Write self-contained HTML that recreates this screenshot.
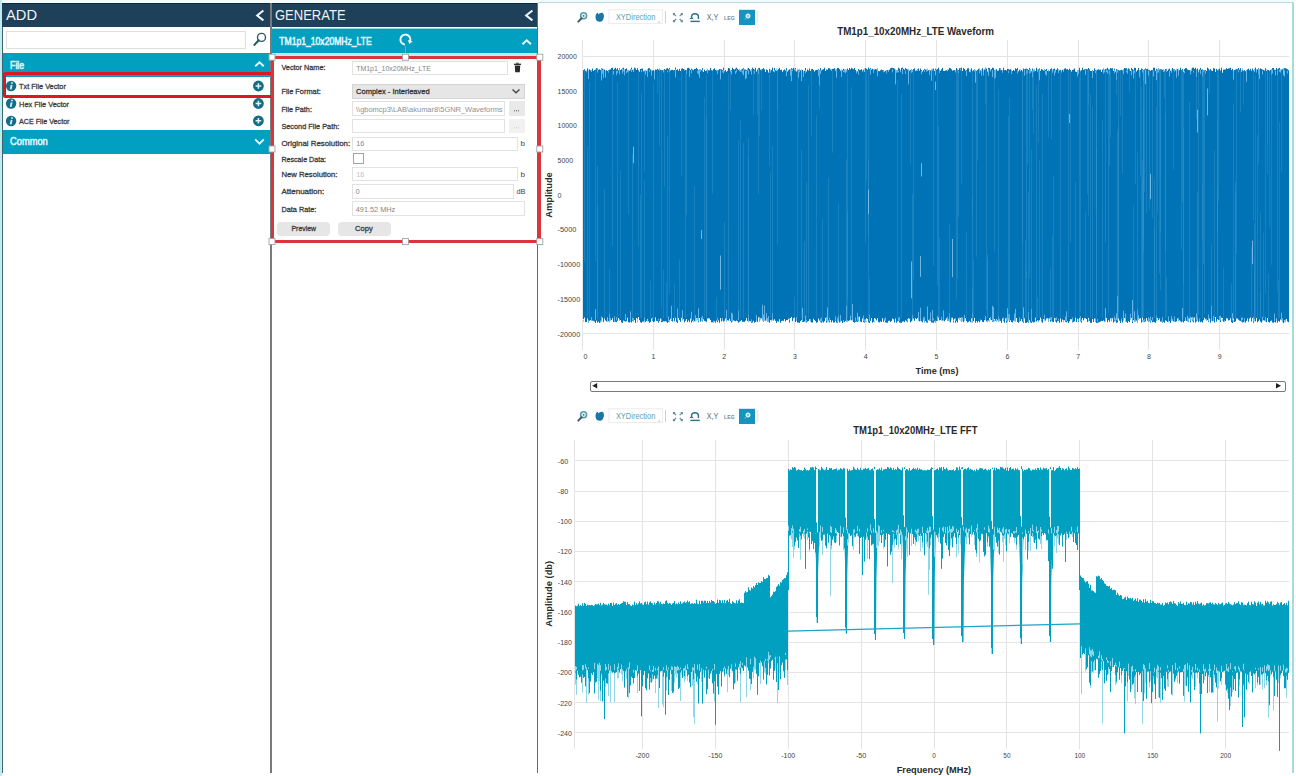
<!DOCTYPE html>
<html><head><meta charset="utf-8">
<style>
*{margin:0;padding:0;box-sizing:border-box}
html,body{width:1296px;height:776px;overflow:hidden;background:#fff;font-family:"Liberation Sans", sans-serif}
.a{position:absolute}
svg text{font-family:"Liberation Sans", sans-serif}
.inp{position:absolute;background:#fff;border:1px solid #e2e2e2}
.btn{position:absolute;background:#e6e6e6;border-radius:4px}
</style></head><body>
<div class="a" style="left:0;top:0;width:1296px;height:2px;background:#effbfc"></div>
<div class="a" style="left:0;top:0;width:2px;height:776px;background:#c2eaf1"></div>
<div class="a" style="left:2px;top:3px;width:1px;height:770px;background:#3d6670"></div>
<div class="a" style="left:2px;top:3px;width:268px;height:24px;background:#1e4058;border-top:1px solid #0d2a3a"></div>
<div class="a" style="left:269.5px;top:3px;width:2.5px;height:770px;background:#7a7a7a"></div>
<div class="a" style="left:272px;top:3px;width:266px;height:24px;background:#1e4058;border-top:1px solid #0d2a3a"></div>
<div class="a" style="left:537px;top:3px;width:1px;height:770px;background:#6a6a6a"></div>
<div class="inp" style="left:6px;top:31px;width:240px;height:18px;border-color:#dedede"></div>
<div class="a" style="left:3px;top:53px;width:267px;height:24px;background:#02a0c0"></div>
<div class="a" style="left:3px;top:129.5px;width:267px;height:24px;background:#02a0c0"></div>
<div class="a" style="left:3.3px;top:72px;width:270.3px;height:26.2px;border:3px solid #dc1820;border-radius:2px"></div>
<div class="a" style="left:272px;top:28px;width:265px;height:25.5px;background:#02a0c0;border-top:1px solid #8adbe9"></div>
<div class="a" style="left:272px;top:53.3px;width:265px;height:2.4px;background:#bfeaf2"></div>
<div class="inp" style="left:352px;top:60.5px;width:156px;height:14.5px"></div>
<div class="a" style="left:352px;top:84.3px;width:173px;height:14.5px;background:#e6e6e6;border:1px solid #d4d4d4"></div>
<div class="inp" style="left:352px;top:101.3px;width:153px;height:14.8px"></div>
<div class="a" style="left:508.5px;top:101.3px;width:16.2px;height:14.8px;background:#e9e9e9"></div>
<div class="inp" style="left:352px;top:119.2px;width:153px;height:14.2px"></div>
<div class="a" style="left:508.5px;top:119.2px;width:16.2px;height:14.2px;background:#f1f1f1"></div>
<div class="inp" style="left:352px;top:136.5px;width:166px;height:14.2px"></div>
<div class="a" style="left:352.5px;top:153.2px;width:11px;height:11px;border:1px solid #a4a4a4;background:#fff"></div>
<div class="inp" style="left:352px;top:167.2px;width:166px;height:14.2px"></div>
<div class="inp" style="left:352px;top:184.3px;width:162px;height:14.3px"></div>
<div class="inp" style="left:352px;top:201.3px;width:172.5px;height:14.8px"></div>
<div class="btn" style="left:277.4px;top:221.8px;width:53px;height:14.6px"></div>
<div class="btn" style="left:337.5px;top:221.8px;width:53px;height:14.6px"></div>
<div class="a" style="left:270.5px;top:55.6px;width:270px;height:187.4px;border:3px solid #d9353b"></div>
<div class="a" style="left:538px;top:2px;width:756px;height:1px;background:#b9dde0"></div>
<div class="a" style="left:1292px;top:2px;width:2px;height:771px;background:#a6dcd8"></div>
<div class="a" style="left:589.5px;top:380.5px;width:696px;height:11px;border:1.6px solid #7a7a7a;border-radius:2px"></div>
<svg class="a" style="left:0;top:0" width="1296" height="776" viewBox="0 0 1296 776">
<path d="M582.5 40V350M653.5 40V350M724.5 40V350M794.5 40V350M865.5 40V350M936.5 40V350M1007.5 40V350M1078.5 40V350M1148.5 40V350M1219.5 40V350M582 56.5H1289M582 90.5H1289M582 125.5H1289M582 160.5H1289M582 194.5H1289M582 229.5H1289M582 264.5H1289M582 299.5H1289M582 333.5H1289" stroke="#e4e4e4" stroke-width="1" fill="none"/><polygon points="583,70.3 584,70.3 584,70 585,70 585,70.7 586,70.7 586,71.1 587,71.1 587,71.5 588,71.5 588,70.9 589,70.9 589,70.5 590,70.5 590,70.3 591,70.3 591,71.2 592,71.2 592,71.8 593,71.8 593,71 594,71 594,70.1 595,70.1 595,70.2 596,70.2 596,71.8 597,71.8 597,70.9 598,70.9 598,69.8 599,69.8 599,70.7 600,70.7 600,70.1 601,70.1 601,70.4 602,70.4 602,70.5 603,70.5 603,70.4 604,70.4 604,71.1 605,71.1 605,70.8 606,70.8 606,70.4 607,70.4 607,71 608,71 608,71.3 609,71.3 609,69.8 610,69.8 610,70.6 611,70.6 611,70.2 612,70.2 612,70.7 613,70.7 613,70 614,70 614,70.8 615,70.8 615,70.8 616,70.8 616,70.6 617,70.6 617,70.2 618,70.2 618,70.6 619,70.6 619,70.1 620,70.1 620,70 621,70 621,70.9 622,70.9 622,70.1 623,70.1 623,71.5 624,71.5 624,71.2 625,71.2 625,69.6 626,69.6 626,71 627,71 627,70.1 628,70.1 628,70.8 629,70.8 629,70.8 630,70.8 630,69.6 631,69.6 631,70.7 632,70.7 632,70.6 633,70.6 633,71.4 634,71.4 634,70.1 635,70.1 635,71.2 636,71.2 636,70.1 637,70.1 637,70.6 638,70.6 638,70.3 639,70.3 639,71.7 640,71.7 640,71.1 641,71.1 641,72.3 642,72.3 642,71.2 643,71.2 643,71.3 644,71.3 644,71.3 645,71.3 645,70.4 646,70.4 646,70.8 647,70.8 647,71.6 648,71.6 648,70.6 649,70.6 649,70.9 650,70.9 650,70.8 651,70.8 651,71.2 652,71.2 652,70.6 653,70.6 653,70.7 654,70.7 654,70.9 655,70.9 655,70.9 656,70.9 656,70.3 657,70.3 657,71.3 658,71.3 658,70 659,70 659,70.1 660,70.1 660,70 661,70 661,71.4 662,71.4 662,70.6 663,70.6 663,70.2 664,70.2 664,70.1 665,70.1 665,71.1 666,71.1 666,70.2 667,70.2 667,70 668,70 668,71.2 669,71.2 669,70.1 670,70.1 670,70.6 671,70.6 671,70.8 672,70.8 672,70.5 673,70.5 673,70.8 674,70.8 674,71.6 675,71.6 675,70.5 676,70.5 676,70 677,70 677,69.7 678,69.7 678,70.7 679,70.7 679,70.6 680,70.6 680,71 681,71 681,70.5 682,70.5 682,70.5 683,70.5 683,70.4 684,70.4 684,70.5 685,70.5 685,70.9 686,70.9 686,70.6 687,70.6 687,70.9 688,70.9 688,71.9 689,71.9 689,71.1 690,71.1 690,69.9 691,69.9 691,71.8 692,71.8 692,71 693,71 693,70.2 694,70.2 694,71.3 695,71.3 695,70.8 696,70.8 696,70.4 697,70.4 697,70.4 698,70.4 698,70.2 699,70.2 699,70.8 700,70.8 700,71.4 701,71.4 701,70.6 702,70.6 702,71.1 703,71.1 703,71.9 704,71.9 704,70.1 705,70.1 705,71 706,71 706,70.6 707,70.6 707,70.2 708,70.2 708,70.2 709,70.2 709,70.8 710,70.8 710,71.1 711,71.1 711,70.5 712,70.5 712,70.8 713,70.8 713,71.2 714,71.2 714,71 715,71 715,71.3 716,71.3 716,71.1 717,71.1 717,71.1 718,71.1 718,71.9 719,71.9 719,71.2 720,71.2 720,70.9 721,70.9 721,71.2 722,71.2 722,70.2 723,70.2 723,70.6 724,70.6 724,71.3 725,71.3 725,71.2 726,71.2 726,71.7 727,71.7 727,70.8 728,70.8 728,69.9 729,69.9 729,72 730,72 730,71.5 731,71.5 731,70.2 732,70.2 732,71.6 733,71.6 733,70.8 734,70.8 734,69.7 735,69.7 735,70.5 736,70.5 736,70.5 737,70.5 737,71.8 738,71.8 738,70.3 739,70.3 739,70.6 740,70.6 740,70.6 741,70.6 741,70.6 742,70.6 742,70.3 743,70.3 743,70.9 744,70.9 744,71.4 745,71.4 745,71.2 746,71.2 746,70.2 747,70.2 747,70.1 748,70.1 748,70.9 749,70.9 749,70.4 750,70.4 750,70.4 751,70.4 751,69.8 752,69.8 752,72 753,72 753,71.3 754,71.3 754,70.2 755,70.2 755,71.3 756,71.3 756,71.6 757,71.6 757,69.4 758,69.4 758,70.5 759,70.5 759,70.6 760,70.6 760,71.2 761,71.2 761,70.7 762,70.7 762,70.7 763,70.7 763,70.8 764,70.8 764,71.9 765,71.9 765,72.1 766,72.1 766,70.5 767,70.5 767,70.2 768,70.2 768,72.4 769,72.4 769,70.2 770,70.2 770,70.5 771,70.5 771,70.8 772,70.8 772,71.1 773,71.1 773,71.4 774,71.4 774,71 775,71 775,70.3 776,70.3 776,71.1 777,71.1 777,70.9 778,70.9 778,71.9 779,71.9 779,70.8 780,70.8 780,70 781,70 781,70.2 782,70.2 782,71.7 783,71.7 783,70.5 784,70.5 784,69.5 785,69.5 785,70.5 786,70.5 786,70.8 787,70.8 787,71.5 788,71.5 788,70.2 789,70.2 789,71.2 790,71.2 790,71.3 791,71.3 791,70.4 792,70.4 792,70.7 793,70.7 793,71.9 794,71.9 794,71.8 795,71.8 795,71.3 796,71.3 796,71 797,71 797,71.5 798,71.5 798,70.7 799,70.7 799,70.7 800,70.7 800,70.3 801,70.3 801,70.8 802,70.8 802,70.8 803,70.8 803,72.5 804,72.5 804,70.7 805,70.7 805,71.6 806,71.6 806,71.6 807,71.6 807,70.7 808,70.7 808,71.5 809,71.5 809,69.5 810,69.5 810,70.9 811,70.9 811,71.3 812,71.3 812,69.4 813,69.4 813,70.1 814,70.1 814,71.4 815,71.4 815,70.6 816,70.6 816,70.1 817,70.1 817,70.6 818,70.6 818,70.5 819,70.5 819,71.2 820,71.2 820,71.1 821,71.1 821,70.6 822,70.6 822,70.4 823,70.4 823,70.8 824,70.8 824,71.6 825,71.6 825,71 826,71 826,71.2 827,71.2 827,70.7 828,70.7 828,70 829,70 829,70.4 830,70.4 830,71.2 831,71.2 831,70.9 832,70.9 832,70.3 833,70.3 833,69.8 834,69.8 834,70.9 835,70.9 835,70.6 836,70.6 836,70.6 837,70.6 837,70.6 838,70.6 838,71 839,71 839,71 840,71 840,71.4 841,71.4 841,71.4 842,71.4 842,71.6 843,71.6 843,71.3 844,71.3 844,70.6 845,70.6 845,70.8 846,70.8 846,71.1 847,71.1 847,70.6 848,70.6 848,71.1 849,71.1 849,71.5 850,71.5 850,70.3 851,70.3 851,69.7 852,69.7 852,71.5 853,71.5 853,70.8 854,70.8 854,71.2 855,71.2 855,70 856,70 856,71.8 857,71.8 857,71.2 858,71.2 858,70.7 859,70.7 859,70.6 860,70.6 860,70.9 861,70.9 861,70.7 862,70.7 862,70.6 863,70.6 863,70.1 864,70.1 864,71.6 865,71.6 865,70.8 866,70.8 866,70.8 867,70.8 867,70.9 868,70.9 868,69.4 869,69.4 869,71.1 870,71.1 870,70.6 871,70.6 871,70.6 872,70.6 872,70.8 873,70.8 873,70.2 874,70.2 874,71.3 875,71.3 875,70.4 876,70.4 876,70.3 877,70.3 877,70.3 878,70.3 878,70.9 879,70.9 879,71.2 880,71.2 880,70.4 881,70.4 881,69.9 882,69.9 882,71.4 883,71.4 883,70.2 884,70.2 884,71.5 885,71.5 885,70.8 886,70.8 886,70.4 887,70.4 887,70.4 888,70.4 888,71.1 889,71.1 889,71.3 890,71.3 890,70.7 891,70.7 891,71.4 892,71.4 892,72.1 893,72.1 893,70.7 894,70.7 894,70.1 895,70.1 895,70.2 896,70.2 896,70 897,70 897,70.4 898,70.4 898,70.4 899,70.4 899,70 900,70 900,71.1 901,71.1 901,69.2 902,69.2 902,70 903,70 903,72 904,72 904,71.4 905,71.4 905,71.1 906,71.1 906,71.1 907,71.1 907,71.9 908,71.9 908,71.1 909,71.1 909,70.8 910,70.8 910,70.1 911,70.1 911,70.8 912,70.8 912,70.4 913,70.4 913,70.4 914,70.4 914,70.4 915,70.4 915,70.8 916,70.8 916,70.6 917,70.6 917,71.3 918,71.3 918,70 919,70 919,70.7 920,70.7 920,71.9 921,71.9 921,70.8 922,70.8 922,71.5 923,71.5 923,71.5 924,71.5 924,71.6 925,71.6 925,71.2 926,71.2 926,70 927,70 927,70.6 928,70.6 928,70.6 929,70.6 929,69.9 930,69.9 930,70.5 931,70.5 931,70 932,70 932,69.8 933,69.8 933,70.9 934,70.9 934,70.8 935,70.8 935,70.4 936,70.4 936,70.2 937,70.2 937,70.5 938,70.5 938,70.6 939,70.6 939,70.6 940,70.6 940,70.8 941,70.8 941,70.5 942,70.5 942,71 943,71 943,71.1 944,71.1 944,71 945,71 945,70.4 946,70.4 946,70.4 947,70.4 947,71.1 948,71.1 948,70.7 949,70.7 949,70.8 950,70.8 950,69.3 951,69.3 951,69.2 952,69.2 952,71 953,71 953,71 954,71 954,71.6 955,71.6 955,71.2 956,71.2 956,70.9 957,70.9 957,70.8 958,70.8 958,69.9 959,69.9 959,71.3 960,71.3 960,70.4 961,70.4 961,71.1 962,71.1 962,70.9 963,70.9 963,71 964,71 964,71.3 965,71.3 965,70.5 966,70.5 966,70.6 967,70.6 967,70.3 968,70.3 968,70.6 969,70.6 969,71.8 970,71.8 970,70.6 971,70.6 971,71.5 972,71.5 972,71.3 973,71.3 973,71.2 974,71.2 974,71.3 975,71.3 975,70.2 976,70.2 976,71 977,71 977,71.8 978,71.8 978,70.4 979,70.4 979,70.8 980,70.8 980,70.4 981,70.4 981,71 982,71 982,70.2 983,70.2 983,71.8 984,71.8 984,70.6 985,70.6 985,69.9 986,69.9 986,71.9 987,71.9 987,71.4 988,71.4 988,71.1 989,71.1 989,71.1 990,71.1 990,70.6 991,70.6 991,70.7 992,70.7 992,71.2 993,71.2 993,71.4 994,71.4 994,71.4 995,71.4 995,70.9 996,70.9 996,70.5 997,70.5 997,70.7 998,70.7 998,71.5 999,71.5 999,71.7 1000,71.7 1000,70.6 1001,70.6 1001,70.5 1002,70.5 1002,71.5 1003,71.5 1003,71.2 1004,71.2 1004,71.2 1005,71.2 1005,70 1006,70 1006,70.6 1007,70.6 1007,70.5 1008,70.5 1008,70.9 1009,70.9 1009,69.8 1010,69.8 1010,71.6 1011,71.6 1011,71 1012,71 1012,71.1 1013,71.1 1013,70.1 1014,70.1 1014,70.8 1015,70.8 1015,71.6 1016,71.6 1016,69.9 1017,69.9 1017,71 1018,71 1018,71.2 1019,71.2 1019,70.4 1020,70.4 1020,71.3 1021,71.3 1021,70.6 1022,70.6 1022,71.5 1023,71.5 1023,71.1 1024,71.1 1024,70.9 1025,70.9 1025,72 1026,72 1026,71.3 1027,71.3 1027,71.6 1028,71.6 1028,70.1 1029,70.1 1029,70.4 1030,70.4 1030,71.3 1031,71.3 1031,71.3 1032,71.3 1032,70.8 1033,70.8 1033,71.3 1034,71.3 1034,70.2 1035,70.2 1035,70.9 1036,70.9 1036,70.1 1037,70.1 1037,71 1038,71 1038,70.5 1039,70.5 1039,70.4 1040,70.4 1040,70.8 1041,70.8 1041,71.9 1042,71.9 1042,70.2 1043,70.2 1043,70.4 1044,70.4 1044,71.4 1045,71.4 1045,70.5 1046,70.5 1046,71.9 1047,71.9 1047,70.9 1048,70.9 1048,70.9 1049,70.9 1049,71 1050,71 1050,71.8 1051,71.8 1051,71.2 1052,71.2 1052,71.1 1053,71.1 1053,71 1054,71 1054,69.9 1055,69.9 1055,70.3 1056,70.3 1056,71.7 1057,71.7 1057,71.3 1058,71.3 1058,71.1 1059,71.1 1059,71.2 1060,71.2 1060,70.5 1061,70.5 1061,71 1062,71 1062,70.3 1063,70.3 1063,71 1064,71 1064,70.4 1065,70.4 1065,70.7 1066,70.7 1066,71.1 1067,71.1 1067,70.6 1068,70.6 1068,71.2 1069,71.2 1069,71.1 1070,71.1 1070,71 1071,71 1071,71.6 1072,71.6 1072,69.9 1073,69.9 1073,69.8 1074,69.8 1074,71.2 1075,71.2 1075,71.4 1076,71.4 1076,72 1077,72 1077,71.3 1078,71.3 1078,71.3 1079,71.3 1079,70.3 1080,70.3 1080,71.3 1081,71.3 1081,71.2 1082,71.2 1082,70.2 1083,70.2 1083,70.3 1084,70.3 1084,70.7 1085,70.7 1085,71 1086,71 1086,69 1087,69 1087,70.8 1088,70.8 1088,70.9 1089,70.9 1089,70.7 1090,70.7 1090,71 1091,71 1091,71.1 1092,71.1 1092,70.2 1093,70.2 1093,71 1094,71 1094,70.6 1095,70.6 1095,70.2 1096,70.2 1096,70.9 1097,70.9 1097,71.7 1098,71.7 1098,69.9 1099,69.9 1099,69.8 1100,69.8 1100,69.8 1101,69.8 1101,72 1102,72 1102,70.6 1103,70.6 1103,70.8 1104,70.8 1104,70.3 1105,70.3 1105,70.2 1106,70.2 1106,69.6 1107,69.6 1107,70.9 1108,70.9 1108,71 1109,71 1109,69.6 1110,69.6 1110,70.2 1111,70.2 1111,70.4 1112,70.4 1112,70.8 1113,70.8 1113,70.9 1114,70.9 1114,71.5 1115,71.5 1115,71.6 1116,71.6 1116,71.4 1117,71.4 1117,71.6 1118,71.6 1118,70.1 1119,70.1 1119,70.5 1120,70.5 1120,71.5 1121,71.5 1121,71 1122,71 1122,70.8 1123,70.8 1123,69.6 1124,69.6 1124,69.7 1125,69.7 1125,71.2 1126,71.2 1126,71 1127,71 1127,70.6 1128,70.6 1128,70.6 1129,70.6 1129,69.8 1130,69.8 1130,71 1131,71 1131,71.4 1132,71.4 1132,71.8 1133,71.8 1133,70.8 1134,70.8 1134,70.7 1135,70.7 1135,70.1 1136,70.1 1136,71.5 1137,71.5 1137,71.8 1138,71.8 1138,70.4 1139,70.4 1139,71 1140,71 1140,70.9 1141,70.9 1141,70.5 1142,70.5 1142,69.3 1143,69.3 1143,70.6 1144,70.6 1144,71.2 1145,71.2 1145,69.9 1146,69.9 1146,70.3 1147,70.3 1147,68.8 1148,68.8 1148,71.6 1149,71.6 1149,71.1 1150,71.1 1150,70.8 1151,70.8 1151,70.6 1152,70.6 1152,70.4 1153,70.4 1153,70.8 1154,70.8 1154,70.6 1155,70.6 1155,70.7 1156,70.7 1156,70.8 1157,70.8 1157,70.9 1158,70.9 1158,71.7 1159,71.7 1159,69.9 1160,69.9 1160,71 1161,71 1161,70.4 1162,70.4 1162,70.1 1163,70.1 1163,69.4 1164,69.4 1164,71.2 1165,71.2 1165,70.2 1166,70.2 1166,70.3 1167,70.3 1167,71.1 1168,71.1 1168,70.1 1169,70.1 1169,70.8 1170,70.8 1170,70.7 1171,70.7 1171,71.3 1172,71.3 1172,71.4 1173,71.4 1173,70.3 1174,70.3 1174,71.3 1175,71.3 1175,70.7 1176,70.7 1176,70.9 1177,70.9 1177,70.7 1178,70.7 1178,71.3 1179,71.3 1179,70.1 1180,70.1 1180,71 1181,71 1181,71.5 1182,71.5 1182,70.6 1183,70.6 1183,72 1184,72 1184,70.4 1185,70.4 1185,70.9 1186,70.9 1186,70.5 1187,70.5 1187,70.4 1188,70.4 1188,70.1 1189,70.1 1189,70.5 1190,70.5 1190,70.8 1191,70.8 1191,70.3 1192,70.3 1192,71.3 1193,71.3 1193,71.7 1194,71.7 1194,69.9 1195,69.9 1195,71.3 1196,71.3 1196,70.9 1197,70.9 1197,70.9 1198,70.9 1198,72.3 1199,72.3 1199,71.5 1200,71.5 1200,71 1201,71 1201,70.9 1202,70.9 1202,69.5 1203,69.5 1203,71.3 1204,71.3 1204,70.4 1205,70.4 1205,70.9 1206,70.9 1206,70.9 1207,70.9 1207,71.4 1208,71.4 1208,72 1209,72 1209,71.4 1210,71.4 1210,71.6 1211,71.6 1211,70.7 1212,70.7 1212,71.1 1213,71.1 1213,71.3 1214,71.3 1214,69.9 1215,69.9 1215,72 1216,72 1216,70.4 1217,70.4 1217,70 1218,70 1218,71.8 1219,71.8 1219,72.1 1220,72.1 1220,70.4 1221,70.4 1221,70.4 1222,70.4 1222,72.7 1223,72.7 1223,70.9 1224,70.9 1224,69.6 1225,69.6 1225,70.4 1226,70.4 1226,72 1227,72 1227,71.2 1228,71.2 1228,71.3 1229,71.3 1229,71.5 1230,71.5 1230,71.2 1231,71.2 1231,70.6 1232,70.6 1232,69.8 1233,69.8 1233,71.1 1234,71.1 1234,70.1 1235,70.1 1235,70.8 1236,70.8 1236,71.9 1237,71.9 1237,71.1 1238,71.1 1238,70.8 1239,70.8 1239,70.8 1240,70.8 1240,71.2 1241,71.2 1241,71.4 1242,71.4 1242,70 1243,70 1243,70.9 1244,70.9 1244,71.8 1245,71.8 1245,71.3 1246,71.3 1246,70.3 1247,70.3 1247,70.4 1248,70.4 1248,69.6 1249,69.6 1249,70.3 1250,70.3 1250,71.8 1251,71.8 1251,70.8 1252,70.8 1252,70.3 1253,70.3 1253,70.5 1254,70.5 1254,70.7 1255,70.7 1255,70.7 1256,70.7 1256,70.6 1257,70.6 1257,70.3 1258,70.3 1258,71.2 1259,71.2 1259,71.7 1260,71.7 1260,70.5 1261,70.5 1261,70.5 1262,70.5 1262,71.5 1263,71.5 1263,69.9 1264,69.9 1264,70.4 1265,70.4 1265,70.6 1266,70.6 1266,70.9 1267,70.9 1267,70.6 1268,70.6 1268,70.3 1269,70.3 1269,71 1270,71 1270,70.1 1271,70.1 1271,69.8 1272,69.8 1272,69.6 1273,69.6 1273,71.2 1274,71.2 1274,69.8 1275,69.8 1275,71.1 1276,71.1 1276,71.2 1277,71.2 1277,71.3 1278,71.3 1278,70.7 1279,70.7 1279,70.5 1280,70.5 1280,70.9 1281,70.9 1281,70.4 1282,70.4 1282,70 1283,70 1283,71.6 1284,71.6 1284,70.3 1285,70.3 1285,71.9 1286,71.9 1286,71.1 1287,71.1 1287,70.5 1288,70.5 1288,71.1 1289,71.1 1289,318.4 1288,318.4 1288,317.8 1287,317.8 1287,319 1286,319 1286,318.1 1285,318.1 1285,318.4 1284,318.4 1284,319 1283,319 1283,318 1282,318 1282,318.5 1281,318.5 1281,319.5 1280,319.5 1280,318.5 1279,318.5 1279,318.1 1278,318.1 1278,317.4 1277,317.4 1277,318.5 1276,318.5 1276,317.8 1275,317.8 1275,317.3 1274,317.3 1274,317.2 1273,317.2 1273,318.4 1272,318.4 1272,318.4 1271,318.4 1271,318.6 1270,318.6 1270,318.6 1269,318.6 1269,318 1268,318 1268,318.1 1267,318.1 1267,317.9 1266,317.9 1266,317.9 1265,317.9 1265,317.5 1264,317.5 1264,317.8 1263,317.8 1263,317.8 1262,317.8 1262,317.2 1261,317.2 1261,318.3 1260,318.3 1260,319.4 1259,319.4 1259,318.3 1258,318.3 1258,318.9 1257,318.9 1257,317.9 1256,317.9 1256,318.2 1255,318.2 1255,319.1 1254,319.1 1254,318.5 1253,318.5 1253,318 1252,318 1252,317.2 1251,317.2 1251,317.4 1250,317.4 1250,318.5 1249,318.5 1249,318.1 1248,318.1 1248,318.5 1247,318.5 1247,318 1246,318 1246,318.8 1245,318.8 1245,318.4 1244,318.4 1244,317.2 1243,317.2 1243,318.9 1242,318.9 1242,319.3 1241,319.3 1241,318.5 1240,318.5 1240,318.7 1239,318.7 1239,319.8 1238,319.8 1238,318.4 1237,318.4 1237,318.4 1236,318.4 1236,318 1235,318 1235,318.1 1234,318.1 1234,318.4 1233,318.4 1233,317.5 1232,317.5 1232,319.1 1231,319.1 1231,318.3 1230,318.3 1230,318.7 1229,318.7 1229,318.9 1228,318.9 1228,318.4 1227,318.4 1227,318.3 1226,318.3 1226,319 1225,319 1225,318.7 1224,318.7 1224,318.1 1223,318.1 1223,318.1 1222,318.1 1222,317.7 1221,317.7 1221,318.8 1220,318.8 1220,318.2 1219,318.2 1219,317.3 1218,317.3 1218,319 1217,319 1217,318.9 1216,318.9 1216,316.9 1215,316.9 1215,318.7 1214,318.7 1214,318.5 1213,318.5 1213,317.8 1212,317.8 1212,318.4 1211,318.4 1211,319.2 1210,319.2 1210,318.6 1209,318.6 1209,318.4 1208,318.4 1208,318.8 1207,318.8 1207,318.2 1206,318.2 1206,319.3 1205,319.3 1205,317.8 1204,317.8 1204,319.3 1203,319.3 1203,318.1 1202,318.1 1202,318.7 1201,318.7 1201,318.4 1200,318.4 1200,318.7 1199,318.7 1199,318.5 1198,318.5 1198,319.1 1197,319.1 1197,318.6 1196,318.6 1196,319 1195,319 1195,317.5 1194,317.5 1194,317.9 1193,317.9 1193,318.5 1192,318.5 1192,317.7 1191,317.7 1191,319 1190,319 1190,318.4 1189,318.4 1189,318.4 1188,318.4 1188,318.3 1187,318.3 1187,319.3 1186,319.3 1186,318.4 1185,318.4 1185,318.5 1184,318.5 1184,318 1183,318 1183,318.3 1182,318.3 1182,317.6 1181,317.6 1181,317.3 1180,317.3 1180,319 1179,319 1179,319 1178,319 1178,318.4 1177,318.4 1177,317.5 1176,317.5 1176,317.6 1175,317.6 1175,318.9 1174,318.9 1174,318.3 1173,318.3 1173,317.5 1172,317.5 1172,319.7 1171,319.7 1171,319 1170,319 1170,318.9 1169,318.9 1169,318.4 1168,318.4 1168,318.5 1167,318.5 1167,317.9 1166,317.9 1166,317.3 1165,317.3 1165,317.1 1164,317.1 1164,318.3 1163,318.3 1163,318.4 1162,318.4 1162,317.4 1161,317.4 1161,317.5 1160,317.5 1160,318.5 1159,318.5 1159,318.4 1158,318.4 1158,318.1 1157,318.1 1157,318.1 1156,318.1 1156,318.7 1155,318.7 1155,318 1154,318 1154,318.7 1153,318.7 1153,318.2 1152,318.2 1152,318.7 1151,318.7 1151,318.2 1150,318.2 1150,318.5 1149,318.5 1149,317.8 1148,317.8 1148,318.4 1147,318.4 1147,318 1146,318 1146,319.2 1145,319.2 1145,318.7 1144,318.7 1144,318.8 1143,318.8 1143,317.5 1142,317.5 1142,318.2 1141,318.2 1141,318.2 1140,318.2 1140,318.5 1139,318.5 1139,318.3 1138,318.3 1138,318.9 1137,318.9 1137,318.6 1136,318.6 1136,318.1 1135,318.1 1135,317.8 1134,317.8 1134,317.9 1133,317.9 1133,318.2 1132,318.2 1132,318.1 1131,318.1 1131,318.4 1130,318.4 1130,317.4 1129,317.4 1129,318 1128,318 1128,318.3 1127,318.3 1127,318.9 1126,318.9 1126,318.6 1125,318.6 1125,318 1124,318 1124,318.2 1123,318.2 1123,318.1 1122,318.1 1122,319.1 1121,319.1 1121,318.1 1120,318.1 1120,319 1119,319 1119,318.6 1118,318.6 1118,318.5 1117,318.5 1117,317.7 1116,317.7 1116,317.8 1115,317.8 1115,318.2 1114,318.2 1114,318.9 1113,318.9 1113,318.2 1112,318.2 1112,318 1111,318 1111,318.4 1110,318.4 1110,318.6 1109,318.6 1109,318.4 1108,318.4 1108,318.2 1107,318.2 1107,317.9 1106,317.9 1106,318.3 1105,318.3 1105,318 1104,318 1104,318.1 1103,318.1 1103,317.5 1102,317.5 1102,317.3 1101,317.3 1101,318.3 1100,318.3 1100,318.5 1099,318.5 1099,318.9 1098,318.9 1098,318.3 1097,318.3 1097,317.9 1096,317.9 1096,318.9 1095,318.9 1095,318.4 1094,318.4 1094,319.4 1093,319.4 1093,319.1 1092,319.1 1092,317.5 1091,317.5 1091,317.6 1090,317.6 1090,317.8 1089,317.8 1089,318 1088,318 1088,319 1087,319 1087,319 1086,319 1086,318.2 1085,318.2 1085,318.3 1084,318.3 1084,318.7 1083,318.7 1083,318 1082,318 1082,318.9 1081,318.9 1081,319 1080,319 1080,318 1079,318 1079,316.6 1078,316.6 1078,318.7 1077,318.7 1077,318.5 1076,318.5 1076,317.5 1075,317.5 1075,317.4 1074,317.4 1074,318.4 1073,318.4 1073,319 1072,319 1072,319.2 1071,319.2 1071,319.3 1070,319.3 1070,318.3 1069,318.3 1069,318.8 1068,318.8 1068,318.5 1067,318.5 1067,318.9 1066,318.9 1066,318.2 1065,318.2 1065,318 1064,318 1064,318.9 1063,318.9 1063,319.4 1062,319.4 1062,318.9 1061,318.9 1061,318.6 1060,318.6 1060,318.1 1059,318.1 1059,318.2 1058,318.2 1058,319.4 1057,319.4 1057,318.1 1056,318.1 1056,318.4 1055,318.4 1055,317.9 1054,317.9 1054,317.7 1053,317.7 1053,317.5 1052,317.5 1052,318.2 1051,318.2 1051,318.2 1050,318.2 1050,318.4 1049,318.4 1049,318.4 1048,318.4 1048,318.3 1047,318.3 1047,318.5 1046,318.5 1046,318.3 1045,318.3 1045,318.9 1044,318.9 1044,319.1 1043,319.1 1043,317.3 1042,317.3 1042,318 1041,318 1041,317.4 1040,317.4 1040,318.1 1039,318.1 1039,318.2 1038,318.2 1038,318 1037,318 1037,318.6 1036,318.6 1036,317.8 1035,317.8 1035,319.2 1034,319.2 1034,318.7 1033,318.7 1033,317.5 1032,317.5 1032,318.3 1031,318.3 1031,318.7 1030,318.7 1030,319.4 1029,319.4 1029,318.3 1028,318.3 1028,318 1027,318 1027,318.4 1026,318.4 1026,317.4 1025,317.4 1025,318.2 1024,318.2 1024,318.2 1023,318.2 1023,318.8 1022,318.8 1022,318.9 1021,318.9 1021,318.8 1020,318.8 1020,318.4 1019,318.4 1019,319.2 1018,319.2 1018,317.7 1017,317.7 1017,318 1016,318 1016,318.8 1015,318.8 1015,318.6 1014,318.6 1014,318.2 1013,318.2 1013,318 1012,318 1012,318.8 1011,318.8 1011,318 1010,318 1010,319.4 1009,319.4 1009,318.4 1008,318.4 1008,317.9 1007,317.9 1007,318.9 1006,318.9 1006,318.3 1005,318.3 1005,318.2 1004,318.2 1004,317.3 1003,317.3 1003,318.4 1002,318.4 1002,318.2 1001,318.2 1001,318.5 1000,318.5 1000,318.7 999,318.7 999,319.5 998,319.5 998,318.8 997,318.8 997,319 996,319 996,317.8 995,317.8 995,319 994,319 994,318.9 993,318.9 993,319 992,319 992,318.5 991,318.5 991,318.9 990,318.9 990,318.1 989,318.1 989,317.6 988,317.6 988,317.7 987,317.7 987,318.4 986,318.4 986,318.3 985,318.3 985,318.7 984,318.7 984,318.3 983,318.3 983,317.9 982,317.9 982,318.2 981,318.2 981,317.9 980,317.9 980,317.9 979,317.9 979,317.9 978,317.9 978,317.6 977,317.6 977,317.2 976,317.2 976,319.3 975,319.3 975,318.1 974,318.1 974,318.4 973,318.4 973,318.8 972,318.8 972,318.4 971,318.4 971,318.5 970,318.5 970,318.5 969,318.5 969,318 968,318 968,317.2 967,317.2 967,318.3 966,318.3 966,318.2 965,318.2 965,319.3 964,319.3 964,319.1 963,319.1 963,317.8 962,317.8 962,318.2 961,318.2 961,317.9 960,317.9 960,318.2 959,318.2 959,318.2 958,318.2 958,318.8 957,318.8 957,318.8 956,318.8 956,317.7 955,317.7 955,318.7 954,318.7 954,318.2 953,318.2 953,317.8 952,317.8 952,318 951,318 951,319.8 950,319.8 950,318.4 949,318.4 949,318.3 948,318.3 948,318.3 947,318.3 947,318.3 946,318.3 946,319.7 945,319.7 945,318.4 944,318.4 944,318.9 943,318.9 943,318 942,318 942,318.9 941,318.9 941,318 940,318 940,318.1 939,318.1 939,317.5 938,317.5 938,318.8 937,318.8 937,318.8 936,318.8 936,318.4 935,318.4 935,318.6 934,318.6 934,318.5 933,318.5 933,318 932,318 932,317.3 931,317.3 931,317.6 930,317.6 930,318.5 929,318.5 929,318.8 928,318.8 928,317.2 927,317.2 927,318.9 926,318.9 926,318.2 925,318.2 925,319.2 924,319.2 924,318.9 923,318.9 923,318 922,318 922,317.4 921,317.4 921,318.8 920,318.8 920,317.9 919,317.9 919,318.2 918,318.2 918,318.1 917,318.1 917,319 916,319 916,318.3 915,318.3 915,318 914,318 914,318.4 913,318.4 913,318.4 912,318.4 912,319.1 911,319.1 911,318.2 910,318.2 910,318.8 909,318.8 909,318.2 908,318.2 908,317.8 907,317.8 907,318.5 906,318.5 906,319.1 905,319.1 905,318.9 904,318.9 904,318.4 903,318.4 903,318.9 902,318.9 902,318 901,318 901,318.3 900,318.3 900,318.9 899,318.9 899,319 898,319 898,318.7 897,318.7 897,318.7 896,318.7 896,318.6 895,318.6 895,317.7 894,317.7 894,319.3 893,319.3 893,318.5 892,318.5 892,318.9 891,318.9 891,318.2 890,318.2 890,318.3 889,318.3 889,319.1 888,319.1 888,318.1 887,318.1 887,318.6 886,318.6 886,317.4 885,317.4 885,317.1 884,317.1 884,318.2 883,318.2 883,318.2 882,318.2 882,318.2 881,318.2 881,319.4 880,319.4 880,318.4 879,318.4 879,318.7 878,318.7 878,318.3 877,318.3 877,317.9 876,317.9 876,318.7 875,318.7 875,318.1 874,318.1 874,317.2 873,317.2 873,318.5 872,318.5 872,317.9 871,317.9 871,318.7 870,318.7 870,317.8 869,317.8 869,318.4 868,318.4 868,319 867,319 867,318.3 866,318.3 866,318.6 865,318.6 865,318.1 864,318.1 864,317.9 863,317.9 863,318.4 862,318.4 862,318.5 861,318.5 861,318.9 860,318.9 860,316.8 859,316.8 859,317.8 858,317.8 858,318.4 857,318.4 857,318.4 856,318.4 856,317.9 855,317.9 855,318.7 854,318.7 854,318 853,318 853,319.2 852,319.2 852,318.6 851,318.6 851,318.9 850,318.9 850,318.6 849,318.6 849,318.4 848,318.4 848,317.9 847,317.9 847,318.8 846,318.8 846,317.9 845,317.9 845,318 844,318 844,318.9 843,318.9 843,319.1 842,319.1 842,318.5 841,318.5 841,318.6 840,318.6 840,318.3 839,318.3 839,317.9 838,317.9 838,318.1 837,318.1 837,318.4 836,318.4 836,318.5 835,318.5 835,317.3 834,317.3 834,319.1 833,319.1 833,319.2 832,319.2 832,318.4 831,318.4 831,318.9 830,318.9 830,318.9 829,318.9 829,318.4 828,318.4 828,317.8 827,317.8 827,318.8 826,318.8 826,317.9 825,317.9 825,318.4 824,318.4 824,317.8 823,317.8 823,318.1 822,318.1 822,319.6 821,319.6 821,318.9 820,318.9 820,318.8 819,318.8 819,318.4 818,318.4 818,318.5 817,318.5 817,318.1 816,318.1 816,319 815,319 815,317.4 814,317.4 814,318.7 813,318.7 813,318.5 812,318.5 812,318.2 811,318.2 811,318.8 810,318.8 810,319.2 809,319.2 809,319.1 808,319.1 808,318 807,318 807,318.2 806,318.2 806,317.9 805,317.9 805,318.9 804,318.9 804,316.7 803,316.7 803,317.7 802,317.7 802,319.1 801,319.1 801,319.4 800,319.4 800,317.5 799,317.5 799,318.7 798,318.7 798,319.3 797,319.3 797,317.8 796,317.8 796,317.6 795,317.6 795,317.4 794,317.4 794,318.2 793,318.2 793,319 792,319 792,317.1 791,317.1 791,318.1 790,318.1 790,318.2 789,318.2 789,318.7 788,318.7 788,318.8 787,318.8 787,317.8 786,317.8 786,317.8 785,317.8 785,318.9 784,318.9 784,318.3 783,318.3 783,318 782,318 782,318.7 781,318.7 781,319.3 780,319.3 780,319.2 779,319.2 779,318 778,318 778,318.4 777,318.4 777,317.7 776,317.7 776,318.4 775,318.4 775,319.3 774,319.3 774,318 773,318 773,318.7 772,318.7 772,317.6 771,317.6 771,317.3 770,317.3 770,319 769,319 769,317.2 768,317.2 768,318.7 767,318.7 767,318.4 766,318.4 766,318.7 765,318.7 765,318.1 764,318.1 764,318.9 763,318.9 763,318.5 762,318.5 762,318.5 761,318.5 761,318.2 760,318.2 760,317.6 759,317.6 759,317.5 758,317.5 758,317.4 757,317.4 757,318.1 756,318.1 756,318.9 755,318.9 755,318.1 754,318.1 754,317.7 753,317.7 753,318.1 752,318.1 752,318.4 751,318.4 751,318.3 750,318.3 750,318.4 749,318.4 749,320.1 748,320.1 748,318.5 747,318.5 747,317.9 746,317.9 746,318.7 745,318.7 745,316.9 744,316.9 744,317.4 743,317.4 743,317.7 742,317.7 742,316.9 741,316.9 741,317.7 740,317.7 740,318.5 739,318.5 739,319.7 738,319.7 738,318 737,318 737,317.6 736,317.6 736,317.9 735,317.9 735,317.4 734,317.4 734,317.3 733,317.3 733,318.1 732,318.1 732,317.7 731,317.7 731,318.5 730,318.5 730,318.7 729,318.7 729,318.6 728,318.6 728,318.1 727,318.1 727,318.2 726,318.2 726,318.5 725,318.5 725,318.6 724,318.6 724,317.2 723,317.2 723,318.6 722,318.6 722,319.4 721,319.4 721,318.1 720,318.1 720,318.2 719,318.2 719,317.5 718,317.5 718,318.5 717,318.5 717,318.2 716,318.2 716,317.3 715,317.3 715,318.1 714,318.1 714,317.2 713,317.2 713,317.9 712,317.9 712,318.5 711,318.5 711,318.8 710,318.8 710,318.4 709,318.4 709,318.3 708,318.3 708,318.4 707,318.4 707,318.1 706,318.1 706,317.7 705,317.7 705,318.9 704,318.9 704,319.3 703,319.3 703,318.5 702,318.5 702,317.9 701,317.9 701,317.6 700,317.6 700,318 699,318 699,318.5 698,318.5 698,318.9 697,318.9 697,318.1 696,318.1 696,318.8 695,318.8 695,318.2 694,318.2 694,319.8 693,319.8 693,318.9 692,318.9 692,318.9 691,318.9 691,318.5 690,318.5 690,318.2 689,318.2 689,318.3 688,318.3 688,318.8 687,318.8 687,319.1 686,319.1 686,317.9 685,317.9 685,319 684,319 684,318.9 683,318.9 683,318.9 682,318.9 682,317.7 681,317.7 681,320.1 680,320.1 680,318.8 679,318.8 679,318.1 678,318.1 678,318.5 677,318.5 677,318.4 676,318.4 676,317.7 675,317.7 675,318.3 674,318.3 674,318.1 673,318.1 673,318.9 672,318.9 672,318.7 671,318.7 671,318.7 670,318.7 670,318.6 669,318.6 669,319.1 668,319.1 668,317.4 667,317.4 667,317.7 666,317.7 666,319.1 665,319.1 665,318.1 664,318.1 664,318.1 663,318.1 663,319.3 662,319.3 662,318.3 661,318.3 661,318.4 660,318.4 660,318.6 659,318.6 659,317.8 658,317.8 658,317.6 657,317.6 657,318 656,318 656,317.4 655,317.4 655,317.7 654,317.7 654,316.7 653,316.7 653,317.6 652,317.6 652,318.6 651,318.6 651,318.5 650,318.5 650,318.2 649,318.2 649,318.6 648,318.6 648,319.1 647,319.1 647,318.4 646,318.4 646,317.8 645,317.8 645,317.8 644,317.8 644,319 643,319 643,318.3 642,318.3 642,318.5 641,318.5 641,318.8 640,318.8 640,318.5 639,318.5 639,317.1 638,317.1 638,318.8 637,318.8 637,317.9 636,317.9 636,318.9 635,318.9 635,318.1 634,318.1 634,317.9 633,317.9 633,318.4 632,318.4 632,318.6 631,318.6 631,319.4 630,319.4 630,318.1 629,318.1 629,318.7 628,318.7 628,317.8 627,317.8 627,318.1 626,318.1 626,318.7 625,318.7 625,317.7 624,317.7 624,318.4 623,318.4 623,318.4 622,318.4 622,318.1 621,318.1 621,318.4 620,318.4 620,318.4 619,318.4 619,318.1 618,318.1 618,318.5 617,318.5 617,319.5 616,319.5 616,319 615,319 615,318.4 614,318.4 614,318 613,318 613,318.2 612,318.2 612,317.7 611,317.7 611,318.5 610,318.5 610,319.3 609,319.3 609,318.5 608,318.5 608,317.7 607,317.7 607,318.2 606,318.2 606,318.8 605,318.8 605,318.4 604,318.4 604,319.1 603,319.1 603,317.7 602,317.7 602,317.7 601,317.7 601,318.8 600,318.8 600,319.3 599,319.3 599,318.5 598,318.5 598,318.5 597,318.5 597,318.7 596,318.7 596,317.5 595,317.5 595,318.4 594,318.4 594,319 593,319 593,319 592,319 592,318 591,318 591,317.9 590,317.9 590,318.3 589,318.3 589,318.5 588,318.5 588,318.4 587,318.4 587,317.7 586,317.7 586,317.7 585,317.7 585,317.5 584,317.5 584,319 583,319" fill="#0072b6"/><path d="M583.5 70.5V71.3M584.5 69.2V71M587.5 68.4V72.5M589.5 69.4V71.5M592.5 68.6V72.8M594.5 70.5V71.1M595.5 69.6V71.2M596.5 68.1V72.8M597.5 68.4V71.9M599.5 69.3V71.7M601.5 68.1V71.4M602.5 68.8V71.5M603.5 69.3V71.4M604.5 69.7V72.1M606.5 70.5V71.4M608.5 70V72.3M610.5 69.4V71.6M611.5 68V71.2M612.5 67.8V71.7M613.5 70.2V71M614.5 68.7V71.8M615.5 67.7V71.8M616.5 69.4V71.6M617.5 68.2V71.2M618.5 70.5V71.6M619.5 68.1V71.1M620.5 70.6V71M621.5 69.3V71.9M622.5 68.4V71.1M623.5 67.7V72.5M625.5 69V70.6M626.5 68.4V72M631.5 67.7V71.7M632.5 69.8V71.6M634.5 67.6V71.1M635.5 68.3V72.2M636.5 70.2V71.1M637.5 68.2V71.6M640.5 69V72.1M641.5 68.7V73.3M642.5 68.6V72.2M645.5 70.4V71.4M647.5 70.5V72.6M648.5 68.2V71.6M649.5 68.2V71.9M650.5 69.5V71.8M651.5 70.6V72.2M653.5 70.4V71.7M655.5 69.5V71.9M656.5 69.8V71.3M657.5 68.9V72.3M658.5 69.7V71M659.5 68.7V71.1M660.5 69.8V71M661.5 70.1V72.4M662.5 70.2V71.6M664.5 69V71.1M665.5 69.8V72.1M666.5 68.5V71.2M667.5 68.1V71M668.5 69.2V72.2M669.5 67.9V71.1M671.5 69.9V71.8M672.5 69.9V71.5M673.5 70.3V71.8M674.5 70.1V72.6M675.5 67.6V71.5M677.5 69.3V70.7M679.5 68.9V71.6M681.5 68.7V71.5M682.5 68.3V71.5M683.5 69V71.4M684.5 70V71.5M685.5 69.9V71.9M687.5 68.1V71.9M688.5 67.8V72.9M689.5 68.7V72.1M691.5 68.7V72.8M692.5 69.5V72M693.5 70.6V71.2M694.5 69V72.3M695.5 69V71.8M696.5 67.8V71.4M697.5 69.1V71.4M698.5 70.5V71.2M699.5 69.4V71.8M700.5 69.5V72.4M701.5 70.2V71.6M702.5 68.1V72.1M704.5 69.7V71.1M707.5 69.1V71.2M709.5 70.4V71.8M710.5 67.9V72.1M711.5 70.4V71.5M713.5 69.2V72.2M714.5 68.2V72M715.5 70V72.3M716.5 70.4V72.1M717.5 70.3V72.1M718.5 70.1V72.9M719.5 69.1V72.2M720.5 69.1V71.9M721.5 69.5V72.2M722.5 70.4V71.2M723.5 67.7V71.6M725.5 70V72.2M728.5 68V70.9M729.5 68.4V73M732.5 67.7V72.6M733.5 69V71.8M734.5 69.8V70.7M735.5 68.6V71.5M736.5 67.7V71.5M737.5 68.8V72.8M738.5 69.9V71.3M739.5 70.1V71.6M740.5 70.5V71.6M741.5 69.5V71.6M742.5 68.8V71.3M743.5 67.9V71.9M744.5 69.4V72.4M745.5 69.7V72.2M746.5 70.4V71.2M747.5 68.7V71.1M748.5 68V71.9M749.5 69.1V71.4M750.5 70V71.4M751.5 70V70.8M752.5 67.7V73M753.5 69V72.3M754.5 69.6V71.2M755.5 67.8V72.3M757.5 70.1V70.4M758.5 68.2V71.5M759.5 67.9V71.6M760.5 69.7V72.2M761.5 70.2V71.7M762.5 69V71.7M763.5 68.1V71.8M764.5 69.3V72.9M766.5 69.4V71.5M767.5 70.5V71.2M769.5 68.9V71.2M771.5 70.2V71.8M772.5 67.6V72.1M774.5 67.9V72M777.5 70.5V71.9M778.5 69.1V72.9M779.5 67.9V71.8M781.5 69.6V71.2M783.5 70.5V71.5M786.5 68.2V71.8M789.5 69.3V72.2M790.5 69.6V72.3M791.5 68.1V71.4M792.5 68.8V71.7M793.5 67.8V72.9M794.5 69.6V72.8M795.5 68.1V72.3M797.5 70V72.5M798.5 69.7V71.7M799.5 69.9V71.7M802.5 69.9V71.8M805.5 68V72.6M807.5 69.5V71.7M808.5 70.6V72.5M809.5 68.5V70.5M811.5 69.1V72.3M812.5 69V70.4M815.5 70.5V71.6M816.5 70.4V71.1M817.5 69.9V71.6M818.5 69.1V71.5M819.5 70.5V72.2M820.5 68.1V72.1M822.5 69.7V71.4M823.5 69.1V71.8M824.5 67.7V72.6M826.5 69.5V72.2M827.5 69.7V71.7M828.5 68.1V71M829.5 68.3V71.4M830.5 69.4V72.2M831.5 70.4V71.9M832.5 68.9V71.3M833.5 68.9V70.8M834.5 68.1V71.9M836.5 69.5V71.6M837.5 67.9V71.6M838.5 67.9V72M839.5 69.2V72M840.5 70.6V72.4M842.5 70.2V72.6M843.5 68.8V72.3M844.5 69.6V71.6M846.5 69.8V72.1M847.5 68.6V71.6M848.5 69.9V72.1M849.5 68.1V72.5M850.5 69.3V71.3M851.5 67.9V70.7M852.5 68.6V72.5M853.5 69.2V71.8M854.5 67.9V72.2M858.5 69.2V71.7M859.5 69.8V71.6M860.5 69.9V71.9M861.5 69.3V71.7M863.5 69.9V71.1M865.5 67.9V71.8M866.5 68.9V71.8M867.5 69.6V71.9M868.5 67.6V70.4M869.5 69.2V72.1M870.5 68.1V71.6M871.5 69.6V71.6M872.5 68.8V71.8M874.5 69.6V72.3M875.5 69V71.4M876.5 69.4V71.3M877.5 68.5V71.3M880.5 70.4V71.4M881.5 69.6V70.9M882.5 70.2V72.4M883.5 70.4V71.2M887.5 70.2V71.4M889.5 69.7V72.3M890.5 68.3V71.7M891.5 67.9V72.4M892.5 67.8V73.1M893.5 68.1V71.7M894.5 68.7V71.1M895.5 70.5V71.2M897.5 69.9V71.4M898.5 67.8V71.4M899.5 68.6V71M901.5 67.9V70.2M902.5 67.6V71M903.5 69V73M904.5 69.7V72.4M905.5 68.1V72.1M906.5 68.9V72.1M907.5 69.5V72.9M910.5 70.5V71.1M911.5 69.3V71.8M912.5 70.4V71.4M913.5 69.1V71.4M914.5 68.3V71.4M917.5 69V72.3M918.5 68.6V71M920.5 68.6V72.9M921.5 70V71.8M923.5 70.1V72.5M924.5 68.9V72.6M925.5 69.5V72.2M926.5 70.1V71M928.5 70.4V71.6M929.5 70.4V70.9M931.5 69.6V71M932.5 69V70.8M933.5 68.5V71.9M935.5 68.6V71.4M936.5 69.7V71.2M937.5 69.1V71.5M938.5 67.7V71.6M939.5 70.4V71.6M941.5 69.3V71.5M942.5 67.9V72M946.5 70.5V71.4M948.5 69.6V71.7M949.5 67.9V71.8M950.5 68.3V70.3M952.5 70.6V72M953.5 70.3V72M954.5 70.2V72.6M955.5 70.1V72.2M956.5 68V71.9M957.5 69.3V71.8M958.5 70.1V70.9M959.5 68.2V72.3M960.5 68.2V71.4M961.5 67.7V72.1M963.5 68V72M964.5 69.1V72.3M966.5 70.5V71.6M967.5 68.4V71.3M968.5 68.2V71.6M971.5 68.3V72.5M973.5 70.2V72.2M974.5 69.2V72.3M977.5 69.9V72.8M978.5 68.8V71.4M979.5 68.8V71.8M982.5 68.3V71.2M984.5 69.5V71.6M985.5 67.7V70.9M986.5 68.6V72.9M988.5 67.8V72.1M989.5 68.2V72.1M991.5 69.2V71.7M992.5 67.7V72.2M993.5 68.1V72.4M994.5 70V72.4M995.5 70V71.9M996.5 69.2V71.5M998.5 70.5V72.5M999.5 68.2V72.7M1000.5 68.4V71.6M1001.5 70.2V71.5M1002.5 70.6V72.5M1003.5 67.8V72.2M1004.5 70.1V72.2M1007.5 68.9V71.5M1008.5 69.1V71.9M1010.5 69.2V72.6M1011.5 70.1V72M1015.5 68.3V72.6M1016.5 69V70.9M1017.5 67.9V72M1019.5 69.8V71.4M1021.5 70.1V71.6M1023.5 68.5V72.1M1024.5 69.2V71.9M1025.5 68.8V73M1026.5 68.5V72.3M1027.5 69.1V72.6M1028.5 70.3V71.1M1029.5 67.9V71.4M1030.5 69V72.3M1032.5 68.5V71.8M1034.5 69.7V71.2M1036.5 67.7V71.1M1037.5 70.3V72M1038.5 69.4V71.5M1039.5 68.4V71.4M1041.5 69V72.9M1042.5 69.7V71.2M1044.5 69.2V72.4M1045.5 70.1V71.5M1046.5 68.9V72.9M1048.5 70.4V71.9M1050.5 69.2V72.8M1051.5 68.3V72.2M1053.5 69.2V72M1054.5 68.5V70.9M1056.5 69.7V72.7M1057.5 68.3V72.3M1059.5 70.4V72.2M1060.5 69.9V71.5M1062.5 69.8V71.3M1064.5 68.7V71.4M1065.5 68.3V71.7M1066.5 69.3V72.1M1067.5 69.2V71.6M1068.5 70.1V72.2M1069.5 68.6V72.1M1070.5 70V72M1073.5 69.6V70.8M1074.5 68.5V72.2M1078.5 70.2V72.3M1079.5 67.8V71.3M1081.5 70.2V72.2M1082.5 67.8V71.2M1083.5 69.9V71.3M1084.5 69.4V71.7M1085.5 69V72M1087.5 69.4V71.8M1088.5 68V71.9M1089.5 69.4V71.7M1094.5 68.3V71.6M1097.5 69.7V72.7M1098.5 69.3V70.9M1100.5 69.9V70.8M1102.5 69.6V71.6M1103.5 68.5V71.8M1104.5 70.6V71.3M1105.5 69.1V71.2M1106.5 68.8V70.6M1107.5 67.8V71.9M1108.5 69.4V72M1109.5 70.2V70.6M1110.5 68.1V71.2M1111.5 68.4V71.4M1112.5 68.3V71.8M1114.5 68.6V72.5M1116.5 69.1V72.4M1117.5 69.8V72.6M1118.5 70.1V71.1M1120.5 70.3V72.5M1121.5 69.8V72M1122.5 70.5V71.8M1124.5 68V70.7M1125.5 68.3V72.2M1126.5 68.2V72M1127.5 69.7V71.6M1128.5 68.3V71.6M1129.5 69.3V70.8M1131.5 67.9V72.4M1132.5 69.1V72.8M1133.5 69.8V71.8M1134.5 67.7V71.7M1135.5 67.9V71.1M1137.5 70.1V72.8M1138.5 68V71.4M1140.5 70V71.9M1141.5 68.5V71.5M1142.5 69.6V70.3M1144.5 69.4V72.2M1145.5 68.4V70.9M1146.5 69.1V71.3M1148.5 70V72.6M1149.5 69.9V72.1M1151.5 70V71.6M1152.5 70.2V71.4M1153.5 67.7V71.8M1154.5 67.7V71.6M1156.5 68.8V71.8M1157.5 69.7V71.9M1158.5 68.4V72.7M1159.5 69.5V70.9M1160.5 69.3V72M1161.5 69.4V71.4M1162.5 69.8V71.1M1163.5 70V70.4M1165.5 69.1V71.2M1166.5 69.2V71.3M1168.5 69.4V71.1M1169.5 68.7V71.8M1172.5 68V72.4M1173.5 69.3V71.3M1174.5 69.4V72.3M1175.5 70.3V71.7M1177.5 69.1V71.7M1180.5 67.8V72M1181.5 70.1V72.5M1182.5 69.1V71.6M1184.5 69.2V71.4M1185.5 68.1V71.9M1186.5 68.2V71.5M1187.5 69.6V71.4M1188.5 70.5V71.1M1189.5 70.3V71.5M1191.5 70V71.3M1192.5 67.8V72.3M1193.5 67.6V72.7M1194.5 68.9V70.9M1195.5 67.8V72.3M1196.5 69.6V71.9M1197.5 68.6V71.9M1199.5 69.6V72.5M1200.5 67.9V72M1201.5 69.7V71.9M1202.5 69.9V70.5M1203.5 70.3V72.3M1205.5 70V71.9M1207.5 67.7V72.4M1208.5 68.7V73M1209.5 70.3V72.4M1210.5 69V72.6M1211.5 70.5V71.7M1213.5 68.1V72.3M1214.5 68.6V70.9M1216.5 68.9V71.4M1218.5 69.5V72.8M1219.5 68.7V73.1M1221.5 67.8V71.4M1223.5 69.7V71.9M1225.5 69.6V71.4M1226.5 68.2V73M1227.5 69V72.2M1228.5 68.5V72.3M1229.5 68.3V72.5M1230.5 67.7V72.2M1231.5 70.1V71.6M1232.5 68.9V70.8M1234.5 70.2V71.1M1235.5 69.6V71.8M1236.5 69.1V72.9M1237.5 69.2V72.1M1238.5 68V71.8M1239.5 69.8V71.8M1240.5 68.2V72.2M1242.5 70.3V71M1244.5 70.2V72.8M1246.5 70.1V71.3M1247.5 69.4V71.4M1248.5 68.6V70.6M1250.5 68.9V72.8M1252.5 68.5V71.3M1254.5 70.5V71.7M1255.5 67.6V71.7M1256.5 69.7V71.6M1257.5 69.3V71.3M1258.5 68.2V72.2M1259.5 69.4V72.7M1260.5 68.4V71.5M1261.5 69.1V71.5M1262.5 69.6V72.5M1263.5 70.2V70.9M1265.5 68.2V71.6M1267.5 69.9V71.6M1268.5 70.1V71.3M1271.5 70.3V70.8M1272.5 68.1V70.6M1273.5 68V72.2M1274.5 70.3V70.8M1275.5 69.9V72.1M1276.5 68V72.2M1277.5 69.3V72.3M1278.5 68.6V71.7M1279.5 67.9V71.5M1281.5 69.6V71.4M1282.5 69.2V71M1283.5 70.6V72.6M1284.5 68.1V71.3M1285.5 68.3V72.9M1286.5 68.7V72.1M1287.5 69.2V71.5M1288.5 70.2V72.1M585.5 316.7V322.1M586.5 316.7V322M588.5 317.5V322.5M589.5 317.3V320.7M590.5 316.9V320.2M591.5 317V320.5M592.5 318V320.7M593.5 318V320.8M594.5 317.4V321.5M595.5 316.5V322.9M596.5 317.7V320.6M597.5 317.5V322.6M598.5 317.5V321.6M599.5 318.3V323M600.5 317.8V322.3M601.5 316.7V320.3M603.5 318.1V321.9M605.5 317.8V320.5M606.5 317.2V321.5M608.5 317.5V321.2M609.5 318.3V321.5M610.5 317.5V320.1M611.5 316.7V320.1M613.5 317V322M614.5 317.4V321.5M615.5 318V321.7M616.5 318.5V322.1M617.5 317.5V320.8M619.5 317.4V321M620.5 317.4V320M621.5 317.1V322.5M622.5 317.4V322.8M623.5 317.4V320.6M624.5 316.7V321.2M625.5 317.7V321.6M626.5 317.1V321.2M628.5 317.7V322.2M629.5 317.1V322.5M630.5 318.4V321.6M631.5 317.6V322.5M632.5 317.4V321.1M633.5 316.9V321M634.5 317.1V320.1M635.5 317.9V323M639.5 317.5V320.2M640.5 317.8V322.3M641.5 317.5V322.8M642.5 317.3V321.6M643.5 318V321.6M644.5 316.8V320.3M645.5 316.8V321.9M646.5 317.4V320.9M648.5 317.6V321.2M649.5 317.2V322.9M650.5 317.5V322M652.5 316.6V321M653.5 315.7V322.1M654.5 316.7V321.6M656.5 317V320.9M657.5 316.6V321M658.5 316.8V322.7M659.5 317.6V321.2M661.5 317.3V322.2M662.5 318.3V321.9M663.5 317.1V321.3M664.5 317.1V321.4M665.5 318.1V321.2M666.5 316.7V321.7M667.5 316.4V322.9M668.5 318.1V322.1M669.5 317.6V320M671.5 317.7V320.9M672.5 317.9V321.6M674.5 317.3V321.3M676.5 317.4V321.9M677.5 317.5V322.9M679.5 317.8V320.1M680.5 319.1V321.8M682.5 317.9V320.2M684.5 318V322.3M685.5 316.9V320.8M687.5 317.8V322.1M688.5 317.3V320.4M689.5 317.2V322M691.5 317.9V322.6M692.5 317.9V321.1M694.5 317.2V321.3M698.5 317.5V322.3M700.5 316.6V321.6M702.5 317.5V321.5M704.5 317.9V320.9M705.5 316.7V321.4M706.5 317.1V321.8M710.5 317.8V320M711.5 317.5V322.3M712.5 316.9V322.3M713.5 316.2V322.3M714.5 317.1V321.4M715.5 316.3V322.7M716.5 317.2V320.6M717.5 317.5V322.2M718.5 316.5V320.5M719.5 317.2V322.8M721.5 318.4V321.4M723.5 316.2V321.5M724.5 317.6V320.8M727.5 317.1V320.3M728.5 317.6V320.6M730.5 317.5V321M731.5 316.7V322.6M732.5 317.1V321.3M733.5 316.3V320.4M734.5 316.4V320.8M735.5 316.9V321.3M736.5 316.6V320.6M737.5 317V321.2M738.5 318.7V322.7M739.5 317.5V321.8M740.5 316.7V321.1M741.5 315.9V320M742.5 316.7V321.8M743.5 316.4V321.8M744.5 315.9V321.9M745.5 317.7V320.7M747.5 317.5V321.1M748.5 319.1V320.5M749.5 317.4V321.1M750.5 317.3V321.3M751.5 317.4V322.7M752.5 317.1V322.4M753.5 316.7V320.8M754.5 317.1V322.7M755.5 317.9V322M756.5 317.1V320M757.5 316.4V321.9M759.5 316.6V321.2M762.5 317.5V320.4M763.5 317.9V321.6M765.5 317.7V320.6M767.5 317.7V321.4M768.5 316.2V321.3M769.5 318V322.8M770.5 316.3V320.1M771.5 316.6V320.1M773.5 317V320.5M775.5 317.4V320.9M776.5 316.7V322.9M777.5 317.4V321.3M778.5 317V321.7M780.5 318.3V322.7M781.5 317.7V321.1M782.5 317V320.7M783.5 317.3V320.9M785.5 316.8V321.4M786.5 316.8V320.1M787.5 317.8V320.1M789.5 317.2V322.5M792.5 318V321.2M795.5 316.6V322M796.5 316.8V320.6M797.5 318.3V322.6M798.5 317.7V322.5M799.5 316.5V322.9M800.5 318.4V321.2M801.5 318.1V320.1M802.5 316.7V322M803.5 315.7V322M804.5 317.9V321.5M805.5 316.9V320.1M806.5 317.2V322.5M807.5 317V321.7M808.5 318.1V321M810.5 317.8V321.4M811.5 317.2V322.4M812.5 317.5V322.5M814.5 316.4V320M815.5 318V321.1M816.5 317.1V322.8M817.5 317.5V322.2M819.5 317.8V320.6M820.5 317.9V322.2M821.5 318.6V322.8M822.5 317.1V321.4M823.5 316.8V322.6M824.5 317.4V321.3M826.5 317.8V322.6M828.5 317.4V320.7M829.5 317.9V322.4M830.5 317.9V320.1M831.5 317.4V322.4M832.5 318.2V320.5M833.5 318.1V322.6M834.5 316.3V322.4M835.5 317.5V320.9M836.5 317.4V322.7M837.5 317.1V322.9M838.5 316.9V320.3M839.5 317.3V322.6M840.5 317.6V321.4M841.5 317.5V320.9M842.5 318.1V323M843.5 317.9V320.9M844.5 317V322.2M845.5 316.9V320.9M846.5 317.8V321.5M847.5 316.9V321M848.5 317.4V320.9M849.5 317.6V320.4M851.5 317.6V320.4M853.5 317V322M854.5 317.7V322.7M855.5 316.9V321.9M856.5 317.4V321.6M857.5 317.4V321.8M858.5 316.8V320.8M860.5 317.9V321.5M861.5 317.5V322.1M863.5 316.9V322.1M864.5 317.1V322.6M865.5 317.6V320.5M868.5 317.4V322.3M869.5 316.8V323M870.5 317.7V320.9M872.5 317.5V322.7M873.5 316.2V321.7M876.5 316.9V320.4M878.5 317.7V322.1M879.5 317.4V322.4M880.5 318.4V321.4M881.5 317.2V322M883.5 317.2V321.8M884.5 316.1V320.2M885.5 316.4V322.4M886.5 317.6V322.6M887.5 317.1V322.8M888.5 318.1V320.9M889.5 317.3V320.7M890.5 317.2V322.1M891.5 317.9V320.9M894.5 316.7V322.6M896.5 317.7V322.7M897.5 317.7V321.3M898.5 318V320.8M899.5 317.9V322.5M900.5 317.3V322.7M901.5 317V322.9M902.5 317.9V321.6M903.5 317.4V321.4M904.5 317.9V322.1M905.5 318.1V320.4M906.5 317.5V321.3M907.5 316.8V322.3M910.5 317.2V322.3M911.5 318.1V321.3M914.5 317V320.9M918.5 317.2V320.5M919.5 316.9V321.4M921.5 316.4V321.2M922.5 317V322.4M924.5 318.2V322.4M925.5 317.2V321M926.5 317.9V322.4M927.5 316.2V322.7M928.5 317.8V320.2M929.5 317.5V320.1M930.5 316.6V320.9M931.5 316.3V322.5M932.5 317V322.4M933.5 317.5V322.8M934.5 317.6V321.4M935.5 317.4V322.5M936.5 317.8V321M937.5 317.8V320.7M939.5 317.1V320.4M940.5 317V320M942.5 317V320.5M943.5 317.9V320.2M944.5 317.4V321.3M947.5 317.3V320.5M948.5 317.3V320.6M949.5 317.4V320.7M950.5 318.8V322.4M953.5 317.2V322.5M955.5 316.7V322.7M956.5 317.8V321M957.5 317.8V322.5M961.5 317.2V321.6M963.5 318.1V322.2M966.5 317.3V321M967.5 316.2V322.4M968.5 317V321.9M969.5 317.5V320.9M970.5 317.5V322.2M972.5 317.8V322.4M973.5 317.4V321.2M975.5 318.3V322.7M976.5 316.2V321M977.5 316.6V322.5M978.5 316.9V321.1M979.5 316.9V322.2M980.5 316.9V320.2M981.5 317.2V320M982.5 316.9V321.9M983.5 317.3V322.2M984.5 317.7V320.2M986.5 317.4V321.5M987.5 316.7V322.1M988.5 316.6V320.6M991.5 317.5V320.1M992.5 318V321.9M993.5 317.9V321.6M995.5 316.8V320.8M997.5 317.8V320.4M998.5 318.5V321.4M999.5 317.7V320.2M1000.5 317.5V320.9M1001.5 317.2V322.9M1003.5 316.3V321.2M1004.5 317.2V322.8M1006.5 317.9V322.7M1007.5 316.9V321.4M1009.5 318.4V321.9M1010.5 317V320.2M1011.5 317.8V321.9M1012.5 317V322.4M1013.5 317.2V320.6M1014.5 317.6V321M1015.5 317.8V321.4M1017.5 316.7V322M1018.5 318.2V322.8M1019.5 317.4V321.4M1020.5 317.8V321.1M1022.5 317.8V321.7M1023.5 317.2V322.8M1025.5 316.4V322.9M1026.5 317.4V322.9M1027.5 317V321.9M1028.5 317.3V322.7M1029.5 318.4V320.2M1030.5 317.7V322.4M1031.5 317.3V322.9M1032.5 316.5V321.7M1033.5 317.7V322.6M1034.5 318.2V322M1036.5 317.6V321.4M1037.5 317V320.3M1038.5 317.2V321.6M1039.5 317.1V320.2M1041.5 317V321.5M1042.5 316.3V322.8M1045.5 317.3V320.7M1048.5 317.4V320.8M1050.5 317.2V321.7M1051.5 317.2V320.6M1052.5 316.5V321.8M1053.5 316.7V322.1M1055.5 317.4V321.5M1056.5 317.1V322.7M1057.5 318.4V321.2M1058.5 317.2V321.1M1059.5 317.1V322.8M1061.5 317.9V322.2M1063.5 317.9V320.3M1064.5 317V320.3M1065.5 317.2V322M1066.5 317.9V322.3M1067.5 317.5V321.3M1068.5 317.8V323M1069.5 317.3V321.4M1072.5 318V322.5M1073.5 317.4V322.1M1074.5 316.4V321.4M1076.5 317.5V322M1078.5 315.6V322M1080.5 318V321.4M1081.5 317.9V322.6M1083.5 317.7V320.4M1087.5 318V322M1089.5 316.8V320.9M1090.5 316.6V322.8M1091.5 316.5V322.9M1093.5 318.4V322M1095.5 317.9V321.7M1096.5 316.9V322.9M1097.5 317.3V322.9M1098.5 317.9V322.4M1099.5 317.5V322.2M1100.5 317.3V321.6M1101.5 316.3V320.9M1102.5 316.5V321.2M1103.5 317.1V320.5M1104.5 317V321.6M1107.5 317.2V322.3M1108.5 317.4V320.2M1109.5 317.6V321.8M1111.5 317V321.1M1113.5 317.9V322.5M1114.5 317.2V321.4M1115.5 316.8V320.4M1116.5 316.7V322.8M1117.5 317.5V322.4M1119.5 318V320.7M1120.5 317.1V322.9M1121.5 318.1V320.3M1122.5 317.1V322.7M1123.5 317.2V320.1M1126.5 317.9V321.8M1127.5 317.3V322.9M1128.5 317V321.3M1129.5 316.4V322.1M1132.5 317.2V323M1133.5 316.9V320.2M1134.5 316.8V321.4M1135.5 317.1V321.4M1136.5 317.6V320.7M1137.5 317.9V322.5M1141.5 317.2V322.6M1143.5 317.8V321.2M1144.5 317.7V322.1M1145.5 318.2V321.5M1147.5 317.4V320.7M1148.5 316.8V321.9M1149.5 317.5V321.2M1150.5 317.2V322.6M1151.5 317.7V320.5M1152.5 317.2V322.3M1153.5 317.7V321.8M1154.5 317V322.1M1155.5 317.7V322.8M1156.5 317.1V320.7M1158.5 317.4V320.1M1160.5 316.5V321.6M1161.5 316.4V321.5M1162.5 317.4V322.6M1163.5 317.3V321.8M1164.5 316.1V322.7M1165.5 316.3V320.4M1166.5 316.9V320.9M1167.5 317.5V322M1168.5 317.4V321.5M1169.5 317.9V321.2M1170.5 318V322.9M1172.5 316.5V320.4M1173.5 317.3V321.4M1174.5 317.9V321.3M1175.5 316.6V321.8M1176.5 316.5V321.4M1178.5 318V321.2M1179.5 318V320.3M1180.5 316.3V321.4M1181.5 316.6V322.2M1182.5 317.3V321.3M1183.5 317V322.5M1184.5 317.5V321M1186.5 318.3V320.9M1187.5 317.3V321.3M1188.5 317.4V322.1M1190.5 318V322.4M1192.5 317.5V321.3M1193.5 316.9V322.4M1195.5 318V322.6M1196.5 317.6V321.4M1197.5 318.1V320.2M1198.5 317.5V322M1199.5 317.7V320.8M1200.5 317.4V322.2M1201.5 317.7V321.7M1202.5 317.1V322.6M1203.5 318.3V320.2M1206.5 317.2V320.6M1207.5 317.8V320.1M1208.5 317.4V321.9M1210.5 318.2V322.7M1212.5 316.8V321.2M1213.5 317.5V320.5M1214.5 317.7V322.6M1216.5 317.9V321.7M1218.5 316.3V320.1M1219.5 317.2V320M1220.5 317.8V322M1223.5 317.1V321.7M1224.5 317.7V321.6M1225.5 318V321.1M1228.5 317.9V320.5M1229.5 317.7V320.2M1231.5 318.1V322.2M1232.5 316.5V322.9M1234.5 317.1V322M1235.5 317V321.4M1239.5 317.7V320.7M1240.5 317.5V321M1241.5 318.3V321.8M1242.5 317.9V322.5M1243.5 316.2V322.1M1244.5 317.4V321.2M1245.5 317.8V322.6M1246.5 317V320.9M1248.5 317.1V321.7M1251.5 316.2V321.5M1253.5 317.5V322.8M1255.5 317.2V321.4M1257.5 317.9V322.4M1258.5 317.3V321.1M1260.5 317.3V321.7M1261.5 316.2V322.7M1262.5 316.8V320.1M1263.5 316.8V320.3M1264.5 316.5V320.6M1265.5 316.9V321.4M1266.5 316.9V322.1M1268.5 317V321.9M1269.5 317.6V322.5M1270.5 317.6V321.2M1271.5 317.4V320.6M1272.5 317.4V322.5M1273.5 316.2V322.7M1274.5 316.3V321.9M1275.5 316.8V322.5M1277.5 316.4V322.8M1278.5 317.1V320.9M1279.5 317.5V321.7M1281.5 317.5V320M1282.5 317V321.1M1283.5 318V323M1284.5 317.4V320.3M1285.5 317.1V321.1M1287.5 316.8V321.5M1288.5 317.4V322.2" stroke="#0072b6" stroke-width="1" fill="none"/><path d="M586.5 70.3V72.4M588.5 69.4V79.1M591.5 69.8V71.9M597.5 69.2V72.7M601.5 68.6V80.5M602.5 70V73.7M603.5 68.7V77.7M605.5 70.3V77.6M608.5 70.4V72.7M613.5 71V74.6M616.5 70.7V75.3M617.5 70.8V73M619.5 68.6V74.4M622.5 68.6V73.6M623.5 69.4V71.3M624.5 69.2V75.4M626.5 70.8V73.3M627.5 70V72.1M628.5 70.9V72.5M631.5 69V72M633.5 69.2V71.6M641.5 70V72.2M645.5 69.8V74.5M647.5 68.8V76.9M649.5 69.9V71.8M651.5 69.8V75.6M654.5 70.6V79.4M659.5 68.7V70.9M663.5 69.6V72.5M667.5 70.6V72.3M669.5 69V72.1M675.5 69.2V77.4M684.5 68.8V70.9M686.5 70.4V73.8M689.5 70.3V76.9M691.5 69.9V73.3M697.5 70.8V73.2M698.5 69.6V74.6M699.5 69.3V77.8M700.5 69.5V71.8M702.5 69.6V71.3M707.5 68.7V73.3M716.5 69.4V71M717.5 70.6V73.9M722.5 70.8V72.4M723.5 69.9V73.3M731.5 71V74.4M735.5 71V73.9M736.5 69.6V72.5M739.5 68.7V71.3M740.5 70.4V72M741.5 68.9V71.5M742.5 70.8V73.7M743.5 68.6V75.3M745.5 70.8V79.2M746.5 70.5V78.1M747.5 69.1V70.8M748.5 70.2V74.3M750.5 69.4V71.5M751.5 69.1V74.6M754.5 70.8V73.8M758.5 69.1V73.9M761.5 68.8V70.6M770.5 69.4V72.7M774.5 70V72.4M776.5 68.6V70.8M786.5 70.2V76.2M790.5 70V75.7M792.5 69.4V71.1M795.5 69V71.4M796.5 70.6V72.2M797.5 68.7V71.3M798.5 70.5V77.7M799.5 68.8V72.4M803.5 71V77M805.5 70V73.2M818.5 69.5V76.2M819.5 70.7V85.4M820.5 70.5V74M831.5 69V70.6M835.5 69.1V71.2M841.5 68.8V77M843.5 70.5V72.1M844.5 69.8V72.4M845.5 69.2V73.2M846.5 69.4V72M856.5 70.7V73.4M858.5 70.8V74.7M862.5 69.9V72.2M863.5 69V70.7M864.5 68.6V71.4M870.5 69.1V74.6M873.5 69V73.2M883.5 70.6V72.4M886.5 70.5V73.6M888.5 69.9V71.8M892.5 69.2V72.4M896.5 70V72.8M897.5 70V72.4M898.5 70.7V72.2M900.5 69.8V72.2M902.5 69V74.2M905.5 70.5V73.8M908.5 69.7V74.4M911.5 69.1V72.8M912.5 70.5V72.2M917.5 69V71M921.5 70.7V74.3M924.5 69.7V71.8M926.5 69.1V71.6M927.5 68.6V71.3M929.5 69.7V74.9M931.5 70.1V80.8M932.5 68.9V70.7M935.5 69.6V75.5M939.5 69.5V73.1M947.5 69.2V71.2M955.5 70V72.5M957.5 68.7V70.9M958.5 71V73M960.5 68.7V70.6M966.5 70.8V76.1M970.5 69.3V72.5M974.5 69.3V71.4M979.5 68.6V73.4M981.5 69V75.7M983.5 69.6V75.5M985.5 68.5V70.1M988.5 70.5V73.1M990.5 69.4V71.5M992.5 70.2V77M994.5 69.9V78.7M995.5 69.6V77.7M1000.5 68.5V70.4M1002.5 70.8V72.8M1008.5 70.9V72.9M1011.5 69.4V73.9M1017.5 70.1V73.5M1020.5 68.7V70.9M1024.5 69.5V75.6M1026.5 69.5V74.4M1027.5 70.5V73.3M1029.5 69.2V73.9M1030.5 69V73M1032.5 70.3V77.3M1033.5 69.4V71.2M1034.5 68.9V71.6M1037.5 69.1V72.1M1044.5 69.2V70.8M1045.5 70.8V74.6M1046.5 70.9V75.7M1048.5 69.6V71.8M1052.5 69.3V72.7M1054.5 70.6V75.5M1055.5 69.9V72.7M1058.5 69V73.2M1061.5 70.1V72.5M1063.5 69.4V71.8M1077.5 69.9V76.6M1078.5 70V74.1M1085.5 69.4V74.9M1092.5 70.8V78.1M1095.5 71V73M1103.5 69.2V73.6M1104.5 69.3V72.4M1106.5 69.4V72.1M1107.5 70.4V73.7M1109.5 70.8V74.5M1114.5 69.7V73.4M1116.5 70.6V79.9M1117.5 70.5V72.5M1123.5 69.6V74.2M1126.5 70.6V72.5M1127.5 69.1V73.8M1131.5 70.1V75.2M1133.5 70.2V78.5M1134.5 70.8V73.2M1139.5 70V77.3M1142.5 70V72.6M1143.5 70.2V80.7M1145.5 69.9V72.3M1148.5 70.6V75.5M1153.5 70.6V76.4M1156.5 70.3V80.2M1157.5 70.5V73M1158.5 68.9V72.4M1163.5 69.8V72M1166.5 70.3V72.1M1169.5 70.8V76.6M1171.5 69.5V72.8M1174.5 69.9V71.6M1178.5 68.7V75.7M1184.5 70.9V73.3M1190.5 70.5V74.5M1191.5 68.5V71.3M1193.5 70.9V72.5M1196.5 70.2V76.9M1200.5 69.8V74M1202.5 70.6V76.3M1203.5 70.3V72.3M1205.5 70.9V73.5M1218.5 69.1V70.8M1233.5 70.6V79.7M1238.5 70.2V72.3M1241.5 70V72M1242.5 68.5V70.5M1246.5 69.8V81.9M1254.5 68.8V72.2M1256.5 69.9V72.5M1258.5 68.8V74.4M1262.5 70.9V74.5M1266.5 69.2V70.7M1271.5 69.2V74.8M1272.5 69.7V73.5M1275.5 70.8V75.5M1277.5 69.7V74.9M1279.5 69.7V71.9M1280.5 69.2V72.6M1283.5 68.6V75.4M1284.5 70.2V76.5M1287.5 70.8V73.5M877.5 68.9V76.3M791.5 69.4V81.1M720.5 69.8V79.4M1145.5 69.6V84.2M975.5 69.9V82.8M895.5 69.4V84.3M1283.5 68.2V74.6M988.5 69.3V75.9M1259.5 69V79.1M908.5 68.6V84.4M1176.5 68.9V77.8M801.5 69.4V81.1M836.5 69.7V77.6M1039.5 69.5V80.3M583.5 319.7V321.7M588.5 320.1V322.4M591.5 317V321.1M595.5 309.1V320.1M600.5 320.5V322.1M601.5 316.3V322M607.5 317.2V322M609.5 313.9V322.4M610.5 317.8V320.9M614.5 316.2V321.1M616.5 317.1V320.3M619.5 319V321M625.5 314V320.2M630.5 311.4V322.3M632.5 317.6V320.5M633.5 318.1V321.9M637.5 319.3V322.2M644.5 317.4V322.5M647.5 319.4V321.6M652.5 317.5V320.7M658.5 318.8V320.7M661.5 319.1V321.1M668.5 316.7V321.5M669.5 320V322.3M671.5 305.7V320.5M677.5 308.5V320.5M682.5 310.1V320.7M693.5 320.2V322.4M695.5 315.3V321.7M696.5 318.6V320.8M697.5 318V320.3M698.5 318.6V321.3M701.5 317.4V321.1M702.5 315.8V320.7M713.5 320.5V322.4M717.5 318V320.6M722.5 318.6V320.7M731.5 312.6V321M732.5 313.5V321.4M738.5 310.7V320.2M748.5 314.4V322.3M751.5 319.4V321.7M756.5 314.9V321.6M759.5 316.8V322.1M760.5 318.5V320.3M762.5 304.7V320.1M763.5 314.7V321.1M766.5 313.1V320.7M767.5 318V321.2M768.5 316.2V322M771.5 319.7V321.3M772.5 313.1V320.5M789.5 318.4V320.2M796.5 317.2V321M805.5 315.6V322.4M806.5 319.7V321.6M810.5 319.1V321.2M820.5 318.5V321.7M821.5 317.7V321.3M826.5 317V320.9M827.5 307.4V322.3M828.5 320.3V321.9M829.5 317.7V321M835.5 316.2V320.7M837.5 317.6V322.4M838.5 315.2V321.2M840.5 314.9V322.3M843.5 320.1V322.4M846.5 305.8V320.9M847.5 320.1V322.3M850.5 315.7V320.1M852.5 303.9V320.6M855.5 317.3V321.1M857.5 312.8V320.6M858.5 316.6V322.1M863.5 315.5V321.1M864.5 319.4V321.6M865.5 319.3V322M866.5 320.7V322.4M869.5 314.8V321.3M874.5 320.6V322.4M884.5 318.4V320.7M885.5 317.5V320.9M898.5 317.7V320.5M899.5 317V320.8M907.5 318.9V321.6M912.5 314.7V320.5M918.5 311.9V320.1M920.5 307.7V321.1M923.5 317.3V320.3M924.5 316.9V322M929.5 319V321.2M930.5 312.3V320.6M932.5 310V321M933.5 318.4V320.3M935.5 320.4V322M937.5 315.8V320.3M941.5 316.7V320.9M943.5 310.5V320.8M947.5 316.6V320.4M948.5 318.8V320.4M949.5 313.1V321.9M951.5 317.4V320.3M953.5 319.7V321.3M955.5 318.1V320.9M959.5 317.5V320.2M960.5 319.2V320.8M961.5 317.1V321.3M962.5 317.9V321.4M964.5 314.8V321.2M971.5 320.7V322.4M972.5 313.2V322M980.5 319.3V321M985.5 316.1V320.1M987.5 320V322.3M989.5 319.5V321.8M990.5 317V320.1M992.5 305.8V321.5M993.5 307.2V320.6M994.5 319.8V321.4M996.5 319.4V322M998.5 316.5V321.8M999.5 318.8V321.5M1003.5 317.4V320.6M1006.5 317.8V321.1M1008.5 314V320.5M1009.5 314.2V320.9M1014.5 318.7V321.3M1019.5 317.3V321.9M1023.5 307.4V321.8M1031.5 308.9V321.6M1035.5 319.5V321.7M1038.5 320.6V322.3M1041.5 318.9V320.6M1044.5 314.7V320.5M1048.5 318.3V322M1050.5 317.3V320M1051.5 317V320.4M1055.5 317.8V320.6M1056.5 317.4V320.1M1058.5 318.9V320.7M1063.5 320V322.2M1065.5 316.5V321.4M1066.5 311.3V320.9M1072.5 317.5V321.7M1078.5 319.2V321.3M1080.5 316V320.8M1081.5 319.7V321.4M1088.5 319.4V321.5M1095.5 318.4V321.5M1097.5 319.1V321.6M1105.5 308.2V321.8M1111.5 317.8V320.8M1114.5 316.4V320.6M1115.5 318.1V321.9M1116.5 313.4V320.2M1117.5 296V320.7M1121.5 318.5V320.3M1123.5 310.8V320.8M1125.5 313.4V322.2M1132.5 300.1V321.9M1134.5 311.2V321.2M1135.5 319.4V321.7M1137.5 309.5V322.2M1138.5 315.1V320.3M1142.5 319.7V322.1M1143.5 319.8V322.4M1144.5 318.7V321.4M1148.5 317.3V321.5M1149.5 318.5V320.6M1150.5 316.6V321.4M1152.5 317.1V320.5M1156.5 315.5V320.7M1162.5 316.9V321.7M1168.5 316.5V322.4M1171.5 316.1V320.9M1172.5 318.6V321M1174.5 316.4V322.2M1178.5 318V321M1185.5 317.1V320.7M1187.5 315.7V320.8M1188.5 317.7V321.9M1190.5 316.6V320.8M1191.5 318.7V320.2M1192.5 317V320.5M1193.5 317.3V321.3M1196.5 313.4V320.3M1197.5 316.7V320.5M1199.5 318.5V321.5M1206.5 318.6V321M1208.5 314.4V321.5M1211.5 305.6V320.8M1213.5 315.8V321M1219.5 315.9V320.2M1220.5 315.7V320.5M1222.5 319.1V320.9M1224.5 320V322.1M1232.5 313.1V320.6M1233.5 320.2V322.2M1241.5 317.6V321.7M1242.5 317.5V320.1M1244.5 318V322.4M1253.5 316.9V321.6M1254.5 318.7V321.4M1262.5 316.7V321.4M1265.5 317.1V321.2M1274.5 313.5V321.4M1276.5 318.1V320.8M1281.5 312.7V320.4M1282.5 318.2V322.5M1284.5 320.3V322.3M1285.5 319.4V322.3M1028.5 312.1V321.7M1130.5 313.6V320.2M1015.5 308.8V321.2M698.5 308.3V320.8M691.5 311.7V320.5M1007.5 308.2V320.7M764.5 305.6V320.9M1182.5 307.9V320.6M802.5 307.8V321.5M927.5 306.5V321.4M1014.5 313.6V320.2M726.5 309.8V321.9" stroke="#74c0ee" stroke-width="1" fill="none" opacity="0.85"/><path d="M1110.5 70V137.6M987.5 258.7V318M1281.5 70V171.7M957.5 70V278.8M832.5 70V152.7M1070.5 70V242.5M706.5 74.9V318M587.5 146.3V318M1135.5 70V184.4M1265.5 70V293.6M1141.5 86.8V318M1182.5 70V202.4M667.5 135.4V318M1235.5 192.8V318M822.5 218.9V318M1254.5 223.2V318M1165.5 113.5V318M1032.5 70V109.7M1036.5 85.1V318M686.5 70V215M1223.5 267.5V318M819.5 70V108.9M1183.5 70V285M1253.5 70V220.2M724.5 221.9V318M1092.5 106.8V318M1118.5 126.6V318M912.5 194.1V318M758.5 70V194M1160.5 70V290.3M972.5 286.9V318M1075.5 181.5V318M1117.5 131.4V318M1048.5 70V137.5M704.5 97.3V318M1149.5 70V208.9M638.5 70V246.1M757.5 70V115.3M674.5 284V318M938.5 126.1V318M1102.5 120.4V318M1257.5 135.1V318M612.5 70V245.2M986.5 70V310.1M1260.5 292.6V318M1258.5 70V164M994.5 70V252.1M1255.5 75.4V318M897.5 80.4V318M753.5 70V114.9M973.5 259.7V318M937.5 70V285.4M1088.5 70V215.7M772.5 146.1V318M949.5 224.1V318M1143.5 70V251.3M933.5 70V265.8M846.5 159.2V318M811.5 70V135.6M1160.5 70V231.9M1096.5 70V208.5M1146.5 70V212.8M838.5 203.7V318M657.5 70V93.4M1157.5 70V212.8M1209.5 70V93.3M1263.5 232.7V318M1051.5 70V139.5M664.5 70V187M661.5 70V307.5M958.5 70V217.1M1096.5 147.2V318M1142.5 160.3V318M1087.5 70V194.1M1243.5 70V104.8M1197.5 266V318M851.5 87.2V318M1120.5 70V116M1022.5 70V243.1M628.5 70V214.4M650.5 280.9V318M1025.5 239.8V318M972.5 70V214.8M1116.5 70V94.7M663.5 269.7V318M1122.5 70V173.6M597.5 165.7V318M869.5 278.9V318M597.5 206V318M738.5 140.5V318M777.5 70V244.4M1143.5 109.6V318M1085.5 211.6V318M1204.5 70V313.6M1053.5 176.4V318M1143.5 70V237.7M1009.5 97.5V318M1079.5 76.4V318M1231.5 283.1V318M1052.5 235.9V318M761.5 70V110.3M644.5 180.2V318M1197.5 192V318M716.5 297.1V318M1108.5 70V312.6M977.5 70V160.7M712.5 70V193.5M847.5 70V299.2M777.5 70V109.8M1240.5 70V112.4M1267.5 70V174.1M1236.5 70V253.6M1154.5 179V318M595.5 70V261.4M961.5 70V183.5M1137.5 152.3V318M806.5 181.8V318M966.5 231.3V318M1029.5 70V278.1M1118.5 70V311.9M730.5 70V110.7M1279.5 122.1V318M769.5 70V166.7M1233.5 103.9V318M740.5 120.4V318M1189.5 102V318M1050.5 267.9V318M1031.5 149.4V318M653.5 83.5V318M1142.5 177.9V318M1254.5 260.1V318M1022.5 80.6V318M1154.5 226.5V318M1088.5 70V104.5M1060.5 70.2V318M808.5 85V318M1042.5 93.7V318M847.5 212V318M1008.5 115.9V318M1159.5 70V273.8M1165.5 70V250.2M728.5 74V318M1203.5 70V263.8M1028.5 191.5V318M659.5 70V146.1M1260.5 212.8V318M1027.5 70V163.6M1166.5 277.1V318M1217.5 119.9V318M972.5 195.7V318M1202.5 70V241.4M1235.5 181.4V318M1039.5 159.4V318M617.5 82.8V318M685.5 72.8V318M640.5 194.7V318M976.5 70V256.8M632.5 154.3V318M748.5 138.6V318M910.5 70V163.9M1198.5 70V315.1M801.5 150V318M1183.5 127V318M1090.5 94.5V318M666.5 282.4V318M1181.5 70V249.3M644.5 70V172M1129.5 70V92.4M985.5 70V104.4M1109.5 70V165.8M1026.5 271.3V318M828.5 177.7V318M913.5 70V280.5M868.5 159.8V318M681.5 70V176.1M1218.5 70V201M1277.5 70V291.4M804.5 241.5V318M1202.5 184.8V318M797.5 73.4V318M1268.5 273.7V318M1156.5 106.9V318M589.5 81.9V318M609.5 268.9V318M706.5 116.3V318M759.5 70V135.7M1267.5 70V143.2M1026.5 70V278.4M998.5 89V318M939.5 237.2V318M1140.5 70V176.4M641.5 92.9V318M1068.5 70V317.1M1038.5 70V142.6M1105.5 70V242.7M1214.5 150.7V318M794.5 296.9V318M1037.5 297.7V318M956.5 70V299.4M770.5 171.7V318M1269.5 70V227.6M669.5 70V294.4M1096.5 70V313.3M584.5 70V261.6M1164.5 70V98.3M987.5 254.3V318M901.5 93.7V318M1080.5 70V312.2M1173.5 70V169.4M816.5 115.2V318M1271.5 70V264.9M1251.5 247.6V318M1133.5 204.8V318M1217.5 186.9V318M743.5 143.1V318M1196.5 70V118.8M604.5 189V318M679.5 259.2V318M748.5 157.3V318M866.5 70V180.9M868.5 70V235.5M1152.5 70V218M620.5 170.8V318M1278.5 280V318M1217.5 70V230.9M1144.5 70V192.2M865.5 70V243.2M694.5 186.1V318M1211.5 243.2V318M1033.5 70V133.5" stroke="#3a98d0" stroke-width="1" fill="none" opacity="0.42"/><path d="M633.5 146.6V163.2M921.5 163.1V176.5M1069.5 114V122.9M720.5 255.5V289.6M911.5 261.5V298.3M701.5 230V239M952.5 239V277.2M1207.5 88.5V115.4M1150.5 173.8V199.2M935.5 81.6V90M1252.5 240.7V264.2M1197.5 109.7V132.5M920.5 255.9V276.8M868.5 189.6V214.2" stroke="#8cc8f0" stroke-width="1" fill="none" opacity="0.8"/><g font-size="8.1" fill="#444"><text x="557.6" y="58.8" textLength="19.2" lengthAdjust="spacingAndGlyphs">20000</text><text x="557.6" y="93.5" textLength="19.2" lengthAdjust="spacingAndGlyphs">15000</text><text x="557.6" y="128.3" textLength="19.2" lengthAdjust="spacingAndGlyphs">10000</text><text x="557.6" y="163" textLength="15.4" lengthAdjust="spacingAndGlyphs">5000</text><text x="557.6" y="197.7" textLength="3.9" lengthAdjust="spacingAndGlyphs">0</text><text x="557.6" y="232.4" textLength="18.7" lengthAdjust="spacingAndGlyphs">-5000</text><text x="557.6" y="267.1" textLength="22.6" lengthAdjust="spacingAndGlyphs">-10000</text><text x="557.6" y="301.9" textLength="22.6" lengthAdjust="spacingAndGlyphs">-15000</text><text x="557.6" y="336.6" textLength="22.6" lengthAdjust="spacingAndGlyphs">-20000</text><text x="583.6" y="359" textLength="3.9" lengthAdjust="spacingAndGlyphs">0</text><text x="651.4" y="359" textLength="3.9" lengthAdjust="spacingAndGlyphs">1</text><text x="722.2" y="359" textLength="3.9" lengthAdjust="spacingAndGlyphs">2</text><text x="793" y="359" textLength="3.9" lengthAdjust="spacingAndGlyphs">3</text><text x="863.8" y="359" textLength="3.9" lengthAdjust="spacingAndGlyphs">4</text><text x="934.6" y="359" textLength="3.9" lengthAdjust="spacingAndGlyphs">5</text><text x="1005.4" y="359" textLength="3.9" lengthAdjust="spacingAndGlyphs">6</text><text x="1076.2" y="359" textLength="3.9" lengthAdjust="spacingAndGlyphs">7</text><text x="1147" y="359" textLength="3.9" lengthAdjust="spacingAndGlyphs">8</text><text x="1217.8" y="359" textLength="3.9" lengthAdjust="spacingAndGlyphs">9</text></g>
<path d="M642.5 440V749M715.5 440V749M788.5 440V749M861.5 440V749M934.5 440V749M1006.5 440V749M1079.5 440V749M1152.5 440V749M1225.5 440V749M575 460.5H1289M575 491.5H1289M575 521.5H1289M575 551.5H1289M575 581.5H1289M575 612.5H1289M575 642.5H1289M575 672.5H1289M575 702.5H1289M575 732.5H1289M574.5 440V749" stroke="#e4e4e4" stroke-width="1" fill="none"/><g font-size="7.8" fill="#444"><text x="557.8" y="463.7" textLength="10.4" lengthAdjust="spacingAndGlyphs">-60</text><text x="557.8" y="493.9" textLength="10.4" lengthAdjust="spacingAndGlyphs">-80</text><text x="557.8" y="524.1" textLength="14" lengthAdjust="spacingAndGlyphs">-100</text><text x="557.8" y="554.4" textLength="14" lengthAdjust="spacingAndGlyphs">-120</text><text x="557.8" y="584.6" textLength="14" lengthAdjust="spacingAndGlyphs">-140</text><text x="557.8" y="614.8" textLength="14" lengthAdjust="spacingAndGlyphs">-160</text><text x="557.8" y="645" textLength="14" lengthAdjust="spacingAndGlyphs">-180</text><text x="557.8" y="675.3" textLength="14" lengthAdjust="spacingAndGlyphs">-200</text><text x="557.8" y="705.5" textLength="14" lengthAdjust="spacingAndGlyphs">-220</text><text x="557.8" y="735.7" textLength="14" lengthAdjust="spacingAndGlyphs">-240</text><text x="635.4" y="757.6" textLength="14" lengthAdjust="spacingAndGlyphs">-200</text><text x="708.3" y="757.6" textLength="14" lengthAdjust="spacingAndGlyphs">-150</text><text x="781.2" y="757.6" textLength="14" lengthAdjust="spacingAndGlyphs">-100</text><text x="855.9" y="757.6" textLength="10.4" lengthAdjust="spacingAndGlyphs">-50</text><text x="932.2" y="757.6" textLength="3.6" lengthAdjust="spacingAndGlyphs">0</text><text x="1003.3" y="757.6" textLength="7.2" lengthAdjust="spacingAndGlyphs">50</text><text x="1074.4" y="757.6" textLength="10.8" lengthAdjust="spacingAndGlyphs">100</text><text x="1147.3" y="757.6" textLength="10.8" lengthAdjust="spacingAndGlyphs">150</text><text x="1220.2" y="757.6" textLength="10.8" lengthAdjust="spacingAndGlyphs">200</text></g>
<polygon points="575,606 576,606 576,606.6 577,606.6 577,605.8 578,605.8 578,606.2 579,606.2 579,606.3 580,606.3 580,606.7 581,606.7 581,606.2 582,606.2 582,605.7 583,605.7 583,606.3 584,606.3 584,605.8 585,605.8 585,605.4 586,605.4 586,606 587,606 587,604.8 588,604.8 588,605.5 589,605.5 589,605 590,605 590,606.2 591,606.2 591,605.3 592,605.3 592,606 593,606 593,605.9 594,605.9 594,605.6 595,605.6 595,605.8 596,605.8 596,606.2 597,606.2 597,605.3 598,605.3 598,604.7 599,604.7 599,605.8 600,605.8 600,606.2 601,606.2 601,605.8 602,605.8 602,606 603,606 603,605.8 604,605.8 604,604.6 605,604.6 605,605.3 606,605.3 606,605.2 607,605.2 607,605.6 608,605.6 608,605.7 609,605.7 609,605.6 610,605.6 610,605.9 611,605.9 611,605.3 612,605.3 612,606 613,606 613,604.5 614,604.5 614,605.5 615,605.5 615,604.8 616,604.8 616,604.6 617,604.6 617,605.9 618,605.9 618,605.1 619,605.1 619,605.3 620,605.3 620,606.2 621,606.2 621,604.9 622,604.9 622,605.9 623,605.9 623,604.8 624,604.8 624,605.1 625,605.1 625,604.7 626,604.7 626,605.2 627,605.2 627,605 628,605 628,604.8 629,604.8 629,604.9 630,604.9 630,605.7 631,605.7 631,606.1 632,606.1 632,604.7 633,604.7 633,605.6 634,605.6 634,604.5 635,604.5 635,605.2 636,605.2 636,604.8 637,604.8 637,605 638,605 638,604.9 639,604.9 639,604.6 640,604.6 640,603.8 641,603.8 641,605.2 642,605.2 642,605.1 643,605.1 643,605.4 644,605.4 644,605.3 645,605.3 645,604.4 646,604.4 646,604.5 647,604.5 647,604.4 648,604.4 648,604.8 649,604.8 649,603.7 650,603.7 650,604.8 651,604.8 651,604.9 652,604.9 652,604.3 653,604.3 653,605 654,605 654,605.7 655,605.7 655,604.8 656,604.8 656,604.8 657,604.8 657,604.6 658,604.6 658,603.8 659,603.8 659,604.1 660,604.1 660,604.2 661,604.2 661,604.9 662,604.9 662,604.6 663,604.6 663,604.2 664,604.2 664,604.2 665,604.2 665,604.4 666,604.4 666,603.7 667,603.7 667,604 668,604 668,604.2 669,604.2 669,604.5 670,604.5 670,603.8 671,603.8 671,604.9 672,604.9 672,603.7 673,603.7 673,603.5 674,603.5 674,603.5 675,603.5 675,604.5 676,604.5 676,604.3 677,604.3 677,604.4 678,604.4 678,604.6 679,604.6 679,604.3 680,604.3 680,604.4 681,604.4 681,604.5 682,604.5 682,603.5 683,603.5 683,604.9 684,604.9 684,603.8 685,603.8 685,603.8 686,603.8 686,604.1 687,604.1 687,604.1 688,604.1 688,603.6 689,603.6 689,603.2 690,603.2 690,604.4 691,604.4 691,603.9 692,603.9 692,603.8 693,603.8 693,604 694,604 694,603.7 695,603.7 695,604.1 696,604.1 696,603.1 697,603.1 697,603.7 698,603.7 698,604.3 699,604.3 699,603.6 700,603.6 700,604.2 701,604.2 701,604.3 702,604.3 702,604.1 703,604.1 703,604.1 704,604.1 704,604 705,604 705,603.9 706,603.9 706,604.4 707,604.4 707,603.9 708,603.9 708,603 709,603 709,603.8 710,603.8 710,603.9 711,603.9 711,602.6 712,602.6 712,603.7 713,603.7 713,603.6 714,603.6 714,603.8 715,603.8 715,604.1 716,604.1 716,603.6 717,603.6 717,602.9 718,602.9 718,604.2 719,604.2 719,603.3 720,603.3 720,603.2 721,603.2 721,603.1 722,603.1 722,602.6 723,602.6 723,603.1 724,603.1 724,603.2 725,603.2 725,603.4 726,603.4 726,603.5 727,603.5 727,602.7 728,602.7 728,603.1 729,603.1 729,602.4 730,602.4 730,603.5 731,603.5 731,604 732,604 732,603.3 733,603.3 733,602.8 734,602.8 734,603.2 735,603.2 735,603.6 736,603.6 736,602.8 737,602.8 737,604.4 738,604.4 738,601.7 739,601.7 739,602.6 740,602.6 740,603 741,603 741,603.5 742,603.5 742,603.1 743,603.1 743,603.2 744,603.2 744,594.9 745,594.9 745,594.5 746,594.5 746,593.1 747,593.1 747,592.2 748,592.2 748,590.3 749,590.3 749,591.3 750,591.3 750,590.8 751,590.8 751,589.7 752,589.7 752,588.7 753,588.7 753,588.9 754,588.9 754,588 755,588 755,585.5 756,585.5 756,585.9 757,585.9 757,585.1 758,585.1 758,583.7 759,583.7 759,583.5 760,583.5 760,583.2 761,583.2 761,582.4 762,582.4 762,581.9 763,581.9 763,580.5 764,580.5 764,580.9 765,580.9 765,579.8 766,579.8 766,578.3 767,578.3 767,577.9 768,577.9 768,577.4 769,577.4 769,576.1 770,576.1 770,598.2 771,598.2 771,596.3 772,596.3 772,595 773,595 773,593.7 774,593.7 774,592.4 775,592.4 775,591.2 776,591.2 776,590 777,590 777,588 778,588 778,587 779,587 779,585.8 780,585.8 780,585.3 781,585.3 781,583.9 782,583.9 782,582 783,582 783,580.6 784,580.6 784,579.5 785,579.5 785,578.2 786,578.2 786,577 787,577 787,575 788,575 788,470.3 789,470.3 789,470.7 790,470.7 790,469.6 791,469.6 791,470 792,470 792,470.2 793,470.2 793,470.9 794,470.9 794,469.9 795,469.9 795,469.5 796,469.5 796,470.8 797,470.8 797,470.1 798,470.1 798,470.8 799,470.8 799,470.1 800,470.1 800,470.5 801,470.5 801,470.1 802,470.1 802,471.1 803,471.1 803,470.2 804,470.2 804,469.4 805,469.4 805,469.8 806,469.8 806,470.7 807,470.7 807,470.2 808,470.2 808,470.7 809,470.7 809,469.9 810,469.9 810,470.7 811,470.7 811,470.8 812,470.8 812,470.4 813,470.4 813,470.7 814,470.7 814,470.3 815,470.3 815,469.7 816,469.7 816,472.8 817,472.8 817,470.3 818,470.3 818,470.3 819,470.3 819,470.8 820,470.8 820,470.5 821,470.5 821,470.1 822,470.1 822,470.4 823,470.4 823,469.7 824,469.7 824,470.7 825,470.7 825,470.4 826,470.4 826,469.8 827,469.8 827,470.5 828,470.5 828,469.9 829,469.9 829,470.7 830,470.7 830,470.8 831,470.8 831,470.2 832,470.2 832,470.3 833,470.3 833,469.7 834,469.7 834,469.9 835,469.9 835,469.6 836,469.6 836,470.9 837,470.9 837,470.7 838,470.7 838,469.9 839,469.9 839,469.8 840,469.8 840,470.4 841,470.4 841,470.5 842,470.5 842,469.8 843,469.8 843,470.5 844,470.5 844,470.6 845,470.6 845,470.8 846,470.8 846,470.3 847,470.3 847,470.3 848,470.3 848,470.9 849,470.9 849,470.3 850,470.3 850,470.8 851,470.8 851,470.5 852,470.5 852,470.1 853,470.1 853,470.3 854,470.3 854,470.5 855,470.5 855,470.6 856,470.6 856,469.9 857,469.9 857,469.8 858,469.8 858,469.7 859,469.7 859,470.2 860,470.2 860,470.4 861,470.4 861,470.2 862,470.2 862,470.4 863,470.4 863,470.2 864,470.2 864,470.7 865,470.7 865,471 866,471 866,469.3 867,469.3 867,471.1 868,471.1 868,470.8 869,470.8 869,470.4 870,470.4 870,470.5 871,470.5 871,469 872,469 872,471.4 873,471.4 873,470.7 874,470.7 874,472.7 875,472.7 875,470.3 876,470.3 876,470.3 877,470.3 877,469.6 878,469.6 878,471.3 879,471.3 879,471.2 880,471.2 880,470.2 881,470.2 881,470.4 882,470.4 882,471.1 883,471.1 883,470.7 884,470.7 884,469.5 885,469.5 885,469.8 886,469.8 886,469.8 887,469.8 887,469.7 888,469.7 888,469.8 889,469.8 889,470.2 890,470.2 890,469.6 891,469.6 891,470.2 892,470.2 892,470.5 893,470.5 893,470.4 894,470.4 894,470.5 895,470.5 895,470 896,470 896,470.5 897,470.5 897,470.1 898,470.1 898,471 899,471 899,469.4 900,469.4 900,470.2 901,470.2 901,470.5 902,470.5 902,470.2 903,470.2 903,472 904,472 904,470.3 905,470.3 905,470.3 906,470.3 906,470.9 907,470.9 907,469.9 908,469.9 908,470.7 909,470.7 909,470.7 910,470.7 910,470.7 911,470.7 911,470.1 912,470.1 912,470.4 913,470.4 913,470.2 914,470.2 914,470.6 915,470.6 915,471.2 916,471.2 916,469.7 917,469.7 917,471.1 918,471.1 918,469.9 919,469.9 919,470 920,470 920,471.1 921,471.1 921,470.4 922,470.4 922,470.3 923,470.3 923,470.7 924,470.7 924,470.4 925,470.4 925,470.5 926,470.5 926,471.3 927,471.3 927,469.8 928,469.8 928,469.9 929,469.9 929,470.5 930,470.5 930,469.9 931,469.9 931,470 932,470 932,471.5 933,471.5 933,470.3 934,470.3 934,470.3 935,470.3 935,470.2 936,470.2 936,470.5 937,470.5 937,470.8 938,470.8 938,470.9 939,470.9 939,469.8 940,469.8 940,470.4 941,470.4 941,470.1 942,470.1 942,470.8 943,470.8 943,470.3 944,470.3 944,470.2 945,470.2 945,469.6 946,469.6 946,469.8 947,469.8 947,470 948,470 948,470.7 949,470.7 949,470 950,470 950,470.1 951,470.1 951,470.4 952,470.4 952,470.1 953,470.1 953,470.4 954,470.4 954,471.1 955,471.1 955,470 956,470 956,470.4 957,470.4 957,470 958,470 958,470.4 959,470.4 959,469.9 960,469.9 960,469.7 961,469.7 961,470.4 962,470.4 962,470.3 963,470.3 963,470.3 964,470.3 964,469.7 965,469.7 965,469.6 966,469.6 966,470 967,470 967,471.5 968,471.5 968,469.7 969,469.7 969,470.9 970,470.9 970,469.6 971,469.6 971,470.9 972,470.9 972,469.9 973,469.9 973,470.9 974,470.9 974,470.1 975,470.1 975,471.4 976,471.4 976,470.8 977,470.8 977,470.6 978,470.6 978,470.4 979,470.4 979,469.6 980,469.6 980,470.1 981,470.1 981,470.7 982,470.7 982,469.8 983,469.8 983,470.2 984,470.2 984,469.8 985,469.8 985,470.1 986,470.1 986,470.5 987,470.5 987,470.7 988,470.7 988,470.5 989,470.5 989,470.3 990,470.3 990,470 991,470 991,470.7 992,470.7 992,470.3 993,470.3 993,470.3 994,470.3 994,470.4 995,470.4 995,471.3 996,471.3 996,470.4 997,470.4 997,471.1 998,471.1 998,470.5 999,470.5 999,469.7 1000,469.7 1000,470.2 1001,470.2 1001,470.2 1002,470.2 1002,469.8 1003,469.8 1003,469.8 1004,469.8 1004,469.6 1005,469.6 1005,470.6 1006,470.6 1006,470.8 1007,470.8 1007,470.3 1008,470.3 1008,470.9 1009,470.9 1009,470.6 1010,470.6 1010,470.4 1011,470.4 1011,471.4 1012,471.4 1012,470.4 1013,470.4 1013,470.6 1014,470.6 1014,470.5 1015,470.5 1015,469.6 1016,469.6 1016,469.7 1017,469.7 1017,469.7 1018,469.7 1018,470.3 1019,470.3 1019,470.6 1020,470.6 1020,473.2 1021,473.2 1021,470.3 1022,470.3 1022,470.3 1023,470.3 1023,471.4 1024,471.4 1024,471.5 1025,471.5 1025,470.7 1026,470.7 1026,471.5 1027,471.5 1027,470.1 1028,470.1 1028,469.6 1029,469.6 1029,470.3 1030,470.3 1030,470.5 1031,470.5 1031,471 1032,471 1032,470.8 1033,470.8 1033,470.5 1034,470.5 1034,470.3 1035,470.3 1035,469.2 1036,469.2 1036,470.3 1037,470.3 1037,469.6 1038,469.6 1038,469.9 1039,469.9 1039,470 1040,470 1040,470.7 1041,470.7 1041,470.7 1042,470.7 1042,470.3 1043,470.3 1043,469.6 1044,469.6 1044,470.4 1045,470.4 1045,471 1046,471 1046,470.7 1047,470.7 1047,470.7 1048,470.7 1048,470.1 1049,470.1 1049,470.5 1050,470.5 1050,470.3 1051,470.3 1051,470.3 1052,470.3 1052,470.2 1053,470.2 1053,470.6 1054,470.6 1054,471 1055,471 1055,469.9 1056,469.9 1056,470.2 1057,470.2 1057,469.5 1058,469.5 1058,469.8 1059,469.8 1059,469.4 1060,469.4 1060,470.2 1061,470.2 1061,470.9 1062,470.9 1062,470.6 1063,470.6 1063,470.4 1064,470.4 1064,470.6 1065,470.6 1065,469.6 1066,469.6 1066,469.8 1067,469.8 1067,470.5 1068,470.5 1068,469.3 1069,469.3 1069,470 1070,470 1070,470 1071,470 1071,470.2 1072,470.2 1072,469.9 1073,469.9 1073,470.3 1074,470.3 1074,471.4 1075,471.4 1075,470.4 1076,470.4 1076,470.1 1077,470.1 1077,470.6 1078,470.6 1078,470.5 1079,470.5 1079,469.4 1080,469.4 1080,577.3 1081,577.3 1081,577.3 1082,577.3 1082,578 1083,578 1083,578.5 1084,578.5 1084,581.6 1085,581.6 1085,582.8 1086,582.8 1086,584.8 1087,584.8 1087,584.2 1088,584.2 1088,586.8 1089,586.8 1089,587.9 1090,587.9 1090,588 1091,588 1091,590.7 1092,590.7 1092,590.9 1093,590.9 1093,591.8 1094,591.8 1094,593.9 1095,593.9 1095,594.2 1096,594.2 1096,576.5 1097,576.5 1097,577.3 1098,577.3 1098,578.5 1099,578.5 1099,579.2 1100,579.2 1100,580.2 1101,580.2 1101,579.8 1102,579.8 1102,581.6 1103,581.6 1103,582.6 1104,582.6 1104,583.6 1105,583.6 1105,584.2 1106,584.2 1106,586.2 1107,586.2 1107,586 1108,586 1108,587.2 1109,587.2 1109,588.3 1110,588.3 1110,589 1111,589 1111,589.2 1112,589.2 1112,590.4 1113,590.4 1113,591.6 1114,591.6 1114,592 1115,592 1115,593.6 1116,593.6 1116,595.1 1117,595.1 1117,595.1 1118,595.1 1118,596 1119,596 1119,596.1 1120,596.1 1120,597.6 1121,597.6 1121,598.3 1122,598.3 1122,599.4 1123,599.4 1123,598.9 1124,598.9 1124,599.2 1125,599.2 1125,599.4 1126,599.4 1126,600.2 1127,600.2 1127,599.3 1128,599.3 1128,599.6 1129,599.6 1129,599.5 1130,599.5 1130,600.6 1131,600.6 1131,600 1132,600 1132,600.6 1133,600.6 1133,601.1 1134,601.1 1134,600.2 1135,600.2 1135,601.2 1136,601.2 1136,601.3 1137,601.3 1137,601.2 1138,601.2 1138,602 1139,602 1139,600.1 1140,600.1 1140,602 1141,602 1141,602.3 1142,602.3 1142,602.8 1143,602.8 1143,602.7 1144,602.7 1144,602.8 1145,602.8 1145,602.3 1146,602.3 1146,602.9 1147,602.9 1147,602.8 1148,602.8 1148,603.1 1149,603.1 1149,603.4 1150,603.4 1150,603.1 1151,603.1 1151,603.2 1152,603.2 1152,603.6 1153,603.6 1153,603.8 1154,603.8 1154,603.3 1155,603.3 1155,603.3 1156,603.3 1156,604.3 1157,604.3 1157,604.4 1158,604.4 1158,603.9 1159,603.9 1159,604.4 1160,604.4 1160,604.7 1161,604.7 1161,605.6 1162,605.6 1162,605.8 1163,605.8 1163,606 1164,606 1164,605.2 1165,605.2 1165,605.5 1166,605.5 1166,605.9 1167,605.9 1167,604.4 1168,604.4 1168,604.8 1169,604.8 1169,605.2 1170,605.2 1170,604.8 1171,604.8 1171,604.9 1172,604.9 1172,604.1 1173,604.1 1173,604.3 1174,604.3 1174,604.7 1175,604.7 1175,604.5 1176,604.5 1176,604.9 1177,604.9 1177,606.2 1178,606.2 1178,604.7 1179,604.7 1179,604.5 1180,604.5 1180,604.9 1181,604.9 1181,604.2 1182,604.2 1182,604.4 1183,604.4 1183,605.2 1184,605.2 1184,605.2 1185,605.2 1185,605.4 1186,605.4 1186,605.2 1187,605.2 1187,604.8 1188,604.8 1188,605.3 1189,605.3 1189,604.6 1190,604.6 1190,605.4 1191,605.4 1191,603.9 1192,603.9 1192,606 1193,606 1193,604.7 1194,604.7 1194,605.2 1195,605.2 1195,605 1196,605 1196,605.4 1197,605.4 1197,604.3 1198,604.3 1198,605.1 1199,605.1 1199,605.3 1200,605.3 1200,605.3 1201,605.3 1201,604.3 1202,604.3 1202,605.7 1203,605.7 1203,605 1204,605 1204,605.7 1205,605.7 1205,605.2 1206,605.2 1206,604.6 1207,604.6 1207,604.6 1208,604.6 1208,604.9 1209,604.9 1209,603.9 1210,603.9 1210,605.2 1211,605.2 1211,604.8 1212,604.8 1212,605.3 1213,605.3 1213,604.6 1214,604.6 1214,604.8 1215,604.8 1215,604.2 1216,604.2 1216,604.6 1217,604.6 1217,604.9 1218,604.9 1218,604.8 1219,604.8 1219,604.5 1220,604.5 1220,604.6 1221,604.6 1221,605 1222,605 1222,604.3 1223,604.3 1223,605.8 1224,605.8 1224,604.9 1225,604.9 1225,603.7 1226,603.7 1226,605.6 1227,605.6 1227,604.1 1228,604.1 1228,605 1229,605 1229,605.4 1230,605.4 1230,605.2 1231,605.2 1231,605.5 1232,605.5 1232,605.5 1233,605.5 1233,604.8 1234,604.8 1234,604.6 1235,604.6 1235,604.9 1236,604.9 1236,604.4 1237,604.4 1237,605 1238,605 1238,604.6 1239,604.6 1239,605.4 1240,605.4 1240,604.9 1241,604.9 1241,604.9 1242,604.9 1242,604.7 1243,604.7 1243,605.4 1244,605.4 1244,604.8 1245,604.8 1245,605.1 1246,605.1 1246,605.6 1247,605.6 1247,605.4 1248,605.4 1248,604.6 1249,604.6 1249,605.2 1250,605.2 1250,605.6 1251,605.6 1251,604.9 1252,604.9 1252,604.1 1253,604.1 1253,604.7 1254,604.7 1254,604.7 1255,604.7 1255,605 1256,605 1256,606.1 1257,606.1 1257,605.3 1258,605.3 1258,604.7 1259,604.7 1259,605.5 1260,605.5 1260,604.4 1261,604.4 1261,604.8 1262,604.8 1262,604.9 1263,604.9 1263,605.8 1264,605.8 1264,605.7 1265,605.7 1265,604.2 1266,604.2 1266,605.2 1267,605.2 1267,604.5 1268,604.5 1268,604.4 1269,604.4 1269,604.4 1270,604.4 1270,604.7 1271,604.7 1271,604.9 1272,604.9 1272,605.7 1273,605.7 1273,605.3 1274,605.3 1274,605.2 1275,605.2 1275,605.1 1276,605.1 1276,604.5 1277,604.5 1277,604.8 1278,604.8 1278,605.5 1279,605.5 1279,605.3 1280,605.3 1280,605.2 1281,605.2 1281,604.3 1282,604.3 1282,605.2 1283,605.2 1283,604.1 1284,604.1 1284,604.4 1285,604.4 1285,605.3 1286,605.3 1286,604.8 1287,604.8 1287,605.6 1288,605.6 1288,604.2 1289,604.2 1289,672.9 1288,672.9 1288,671.6 1287,671.6 1287,673.4 1286,673.4 1286,673.5 1285,673.5 1285,671.6 1284,671.6 1284,671.5 1283,671.5 1283,670.8 1282,670.8 1282,673 1281,673 1281,671.5 1280,671.5 1280,671.5 1279,671.5 1279,670.8 1278,670.8 1278,673 1277,673 1277,671.7 1276,671.7 1276,671.5 1275,671.5 1275,672.1 1274,672.1 1274,670.9 1273,670.9 1273,671.7 1272,671.7 1272,671.9 1271,671.9 1271,672.7 1270,672.7 1270,671.2 1269,671.2 1269,672 1268,672 1268,670.4 1267,670.4 1267,671.9 1266,671.9 1266,673.2 1265,673.2 1265,673.2 1264,673.2 1264,673.3 1263,673.3 1263,672.7 1262,672.7 1262,673 1261,673 1261,670.9 1260,670.9 1260,672.1 1259,672.1 1259,670.8 1258,670.8 1258,673.7 1257,673.7 1257,671 1256,671 1256,670.3 1255,670.3 1255,673.6 1254,673.6 1254,673.6 1253,673.6 1253,671.3 1252,671.3 1252,672.3 1251,672.3 1251,671.5 1250,671.5 1250,673.3 1249,673.3 1249,668.9 1248,668.9 1248,673.3 1247,673.3 1247,672.6 1246,672.6 1246,670.4 1245,670.4 1245,671.7 1244,671.7 1244,670.5 1243,670.5 1243,670 1242,670 1242,671.8 1241,671.8 1241,671.6 1240,671.6 1240,672.6 1239,672.6 1239,670.2 1238,670.2 1238,672.4 1237,672.4 1237,672.7 1236,672.7 1236,672.1 1235,672.1 1235,669.9 1234,669.9 1234,671.8 1233,671.8 1233,673 1232,673 1232,672.2 1231,672.2 1231,670.2 1230,670.2 1230,671.7 1229,671.7 1229,673 1228,673 1228,672.2 1227,672.2 1227,671.5 1226,671.5 1226,671.9 1225,671.9 1225,671.1 1224,671.1 1224,671.5 1223,671.5 1223,672 1222,672 1222,673.1 1221,673.1 1221,671.9 1220,671.9 1220,671.8 1219,671.8 1219,673.9 1218,673.9 1218,671.8 1217,671.8 1217,674.1 1216,674.1 1216,671.9 1215,671.9 1215,671.1 1214,671.1 1214,672 1213,672 1213,672.8 1212,672.8 1212,672.4 1211,672.4 1211,671.9 1210,671.9 1210,671.2 1209,671.2 1209,671.5 1208,671.5 1208,671.8 1207,671.8 1207,672.6 1206,672.6 1206,672.7 1205,672.7 1205,673.4 1204,673.4 1204,672 1203,672 1203,674 1202,674 1202,672.6 1201,672.6 1201,671.9 1200,671.9 1200,672.8 1199,672.8 1199,672 1198,672 1198,671.6 1197,671.6 1197,672.6 1196,672.6 1196,670.9 1195,670.9 1195,672.9 1194,672.9 1194,672.1 1193,672.1 1193,673.8 1192,673.8 1192,672.7 1191,672.7 1191,671.8 1190,671.8 1190,670.9 1189,670.9 1189,670.9 1188,670.9 1188,670.7 1187,670.7 1187,672.7 1186,672.7 1186,671.5 1185,671.5 1185,671.3 1184,671.3 1184,672.5 1183,672.5 1183,672 1182,672 1182,672 1181,672 1181,672.3 1180,672.3 1180,669.5 1179,669.5 1179,671.4 1178,671.4 1178,671.6 1177,671.6 1177,670.9 1176,670.9 1176,670.8 1175,670.8 1175,671.6 1174,671.6 1174,671.8 1173,671.8 1173,672.7 1172,672.7 1172,672.4 1171,672.4 1171,671.4 1170,671.4 1170,672.1 1169,672.1 1169,672.8 1168,672.8 1168,669.3 1167,669.3 1167,671.7 1166,671.7 1166,673.4 1165,673.4 1165,672.8 1164,672.8 1164,672.5 1163,672.5 1163,671.5 1162,671.5 1162,671.1 1161,671.1 1161,671.2 1160,671.2 1160,670.1 1159,670.1 1159,671.9 1158,671.9 1158,672.7 1157,672.7 1157,671.1 1156,671.1 1156,671.5 1155,671.5 1155,672.9 1154,672.9 1154,673.6 1153,673.6 1153,671.9 1152,671.9 1152,672.5 1151,672.5 1151,670.3 1150,670.3 1150,670.1 1149,670.1 1149,671.6 1148,671.6 1148,671.7 1147,671.7 1147,671.5 1146,671.5 1146,672.6 1145,672.6 1145,672.6 1144,672.6 1144,670.6 1143,670.6 1143,673.3 1142,673.3 1142,674.5 1141,674.5 1141,673.3 1140,673.3 1140,671.8 1139,671.8 1139,672.1 1138,672.1 1138,672.3 1137,672.3 1137,671 1136,671 1136,672.4 1135,672.4 1135,673.4 1134,673.4 1134,671.9 1133,671.9 1133,672.5 1132,672.5 1132,671.4 1131,671.4 1131,672 1130,672 1130,671.6 1129,671.6 1129,671.6 1128,671.6 1128,670.6 1127,670.6 1127,670.9 1126,670.9 1126,670 1125,670 1125,670 1124,670 1124,668.4 1123,668.4 1123,669.9 1122,669.9 1122,670.3 1121,670.3 1121,668 1120,668 1120,667.8 1119,667.8 1119,667.2 1118,667.2 1118,666.7 1117,666.7 1117,667.6 1116,667.6 1116,666.7 1115,666.7 1115,665.1 1114,665.1 1114,666.9 1113,666.9 1113,664.5 1112,664.5 1112,664.8 1111,664.8 1111,667.1 1110,667.1 1110,665.1 1109,665.1 1109,664 1108,664 1108,663.7 1107,663.7 1107,661 1106,661 1106,660.4 1105,660.4 1105,661.8 1104,661.8 1104,661.3 1103,661.3 1103,661.9 1102,661.9 1102,661.1 1101,661.1 1101,660.1 1100,660.1 1100,659.1 1099,659.1 1099,659.5 1098,659.5 1098,658.8 1097,658.8 1097,658.7 1096,658.7 1096,658.4 1095,658.4 1095,658.3 1094,658.3 1094,657.2 1093,657.2 1093,655.8 1092,655.8 1092,658.1 1091,658.1 1091,657.6 1090,657.6 1090,655.3 1089,655.3 1089,655.3 1088,655.3 1088,655.3 1087,655.3 1087,653.6 1086,653.6 1086,654.1 1085,654.1 1085,653.9 1084,653.9 1084,653.1 1083,653.1 1083,654.4 1082,654.4 1082,650.9 1081,650.9 1081,653 1080,653 1080,590 1079,590 1079,533.6 1078,533.6 1078,533.3 1077,533.3 1077,534 1076,534 1076,532.5 1075,532.5 1075,533.2 1074,533.2 1074,533.4 1073,533.4 1073,533.6 1072,533.6 1072,532.3 1071,532.3 1071,533.9 1070,533.9 1070,533.2 1069,533.2 1069,530.8 1068,530.8 1068,533.9 1067,533.9 1067,534.2 1066,534.2 1066,531.7 1065,531.7 1065,533.7 1064,533.7 1064,533.1 1063,533.1 1063,532.2 1062,532.2 1062,533.4 1061,533.4 1061,533.7 1060,533.7 1060,535.7 1059,535.7 1059,532.5 1058,532.5 1058,533.5 1057,533.5 1057,534.1 1056,534.1 1056,534.8 1055,534.8 1055,534 1054,534 1054,533.4 1053,533.4 1053,534.4 1052,534.4 1052,534.4 1051,534.4 1051,535 1050,535 1050,533.6 1049,533.6 1049,534.5 1048,534.5 1048,532.2 1047,532.2 1047,534.7 1046,534.7 1046,534.3 1045,534.3 1045,533 1044,533 1044,534.4 1043,534.4 1043,533.3 1042,533.3 1042,532.6 1041,532.6 1041,534.5 1040,534.5 1040,532.7 1039,532.7 1039,533.3 1038,533.3 1038,531.4 1037,531.4 1037,534.1 1036,534.1 1036,532.4 1035,532.4 1035,532.9 1034,532.9 1034,532.7 1033,532.7 1033,531.9 1032,531.9 1032,532.5 1031,532.5 1031,532.5 1030,532.5 1030,533.8 1029,533.8 1029,534 1028,534 1028,533.7 1027,533.7 1027,533.6 1026,533.6 1026,533.9 1025,533.9 1025,535.1 1024,535.1 1024,532.2 1023,532.2 1023,534.7 1022,534.7 1022,533.1 1021,533.1 1021,532.6 1020,532.6 1020,533.8 1019,533.8 1019,534.9 1018,534.9 1018,532.6 1017,532.6 1017,533.7 1016,533.7 1016,533.5 1015,533.5 1015,534.5 1014,534.5 1014,534 1013,534 1013,533.8 1012,533.8 1012,532.9 1011,532.9 1011,533.2 1010,533.2 1010,533.4 1009,533.4 1009,532.9 1008,532.9 1008,533.4 1007,533.4 1007,533.7 1006,533.7 1006,535 1005,535 1005,533.8 1004,533.8 1004,534.6 1003,534.6 1003,533.5 1002,533.5 1002,531.8 1001,531.8 1001,531.8 1000,531.8 1000,534.6 999,534.6 999,533.6 998,533.6 998,533.8 997,533.8 997,534.5 996,534.5 996,533.6 995,533.6 995,534.5 994,534.5 994,536.1 993,536.1 993,534 992,534 992,534.5 991,534.5 991,532.4 990,532.4 990,533.7 989,533.7 989,533 988,533 988,534 987,534 987,533.3 986,533.3 986,535.7 985,535.7 985,530.7 984,530.7 984,534.7 983,534.7 983,534.2 982,534.2 982,533.8 981,533.8 981,534.1 980,534.1 980,532.8 979,532.8 979,532.2 978,532.2 978,531.4 977,531.4 977,533.4 976,533.4 976,535.3 975,535.3 975,532.1 974,532.1 974,532.1 973,532.1 973,533.5 972,533.5 972,533.2 971,533.2 971,532.5 970,532.5 970,532.3 969,532.3 969,534.7 968,534.7 968,532.7 967,532.7 967,531.5 966,531.5 966,533.8 965,533.8 965,532.4 964,532.4 964,531.6 963,531.6 963,532.8 962,532.8 962,533.5 961,533.5 961,532.8 960,532.8 960,534.9 959,534.9 959,534.7 958,534.7 958,531.9 957,531.9 957,533.5 956,533.5 956,534.8 955,534.8 955,532.7 954,532.7 954,531.7 953,531.7 953,533.2 952,533.2 952,533.7 951,533.7 951,534.5 950,534.5 950,532.6 949,532.6 949,533.9 948,533.9 948,532.8 947,532.8 947,533.1 946,533.1 946,534.4 945,534.4 945,533 944,533 944,533.4 943,533.4 943,531.7 942,531.7 942,535.4 941,535.4 941,532.9 940,532.9 940,534.9 939,534.9 939,534.9 938,534.9 938,533.6 937,533.6 937,534.2 936,534.2 936,532.1 935,532.1 935,534.8 934,534.8 934,532.9 933,532.9 933,532.9 932,532.9 932,534.7 931,534.7 931,532.9 930,532.9 930,533.4 929,533.4 929,533 928,533 928,534.2 927,534.2 927,533.5 926,533.5 926,533.3 925,533.3 925,535.9 924,535.9 924,533.1 923,533.1 923,534.3 922,534.3 922,533.8 921,533.8 921,533.9 920,533.9 920,533.2 919,533.2 919,533.5 918,533.5 918,533.3 917,533.3 917,534.9 916,534.9 916,533.2 915,533.2 915,532.2 914,532.2 914,533.1 913,533.1 913,531.6 912,531.6 912,532.6 911,532.6 911,533.6 910,533.6 910,532.3 909,532.3 909,532.4 908,532.4 908,532.4 907,532.4 907,535 906,535 906,532 905,532 905,532.2 904,532.2 904,534.5 903,534.5 903,531 902,531 902,534.7 901,534.7 901,535.9 900,535.9 900,532.3 899,532.3 899,531.4 898,531.4 898,533.8 897,533.8 897,535.8 896,535.8 896,533.5 895,533.5 895,533.4 894,533.4 894,533.1 893,533.1 893,533 892,533 892,534 891,534 891,533.5 890,533.5 890,534.7 889,534.7 889,533.4 888,533.4 888,535.1 887,535.1 887,533.3 886,533.3 886,533.6 885,533.6 885,534.6 884,534.6 884,532.1 883,532.1 883,534.8 882,534.8 882,533.8 881,533.8 881,535 880,535 880,533.6 879,533.6 879,532.5 878,532.5 878,535.1 877,535.1 877,533.8 876,533.8 876,532.3 875,532.3 875,534.1 874,534.1 874,533.6 873,533.6 873,532.9 872,532.9 872,533.9 871,533.9 871,531.7 870,531.7 870,531.8 869,531.8 869,531.7 868,531.7 868,532.7 867,532.7 867,534.3 866,534.3 866,534.1 865,534.1 865,532.3 864,532.3 864,532.5 863,532.5 863,532.4 862,532.4 862,534.8 861,534.8 861,535.2 860,535.2 860,532.5 859,532.5 859,532.6 858,532.6 858,532.2 857,532.2 857,533.7 856,533.7 856,531.9 855,531.9 855,533.7 854,533.7 854,534.1 853,534.1 853,532.9 852,532.9 852,534.8 851,534.8 851,533.1 850,533.1 850,533.3 849,533.3 849,534.6 848,534.6 848,534.5 847,534.5 847,532.2 846,532.2 846,532.9 845,532.9 845,534.6 844,534.6 844,533.8 843,533.8 843,532.6 842,532.6 842,532.5 841,532.5 841,533.5 840,533.5 840,534.6 839,534.6 839,533 838,533 838,531.9 837,531.9 837,534.6 836,534.6 836,534.1 835,534.1 835,533.3 834,533.3 834,534.9 833,534.9 833,534.3 832,534.3 832,534 831,534 831,533.2 830,533.2 830,533.7 829,533.7 829,534.2 828,534.2 828,533.8 827,533.8 827,532.7 826,532.7 826,532.5 825,532.5 825,533.2 824,533.2 824,534.7 823,534.7 823,533.1 822,533.1 822,534.7 821,534.7 821,532.9 820,532.9 820,532.8 819,532.8 819,532.3 818,532.3 818,532.5 817,532.5 817,531.4 816,531.4 816,534.5 815,534.5 815,534.6 814,534.6 814,532 813,532 813,533.4 812,533.4 812,534.9 811,534.9 811,532 810,532 810,534.2 809,534.2 809,535.1 808,535.1 808,531 807,531 807,533.6 806,533.6 806,535.9 805,535.9 805,533.5 804,533.5 804,534.1 803,534.1 803,533.8 802,533.8 802,534.6 801,534.6 801,533.1 800,533.1 800,532.8 799,532.8 799,534.8 798,534.8 798,533.6 797,533.6 797,531.8 796,531.8 796,533.2 795,533.2 795,533.2 794,533.2 794,534 793,534 793,532.1 792,532.1 792,533 791,533 791,535.3 790,535.3 790,535.7 789,535.7 789,590 788,590 788,657.2 787,657.2 787,656.1 786,656.1 786,656.1 785,656.1 785,656.2 784,656.2 784,658.9 783,658.9 783,657.7 782,657.7 782,658.9 781,658.9 781,659.5 780,659.5 780,658.2 779,658.2 779,659.7 778,659.7 778,659.1 777,659.1 777,659.2 776,659.2 776,658.8 775,658.8 775,660.2 774,660.2 774,661.5 773,661.5 773,659.7 772,659.7 772,659.9 771,659.9 771,658.2 770,658.2 770,660.7 769,660.7 769,659.7 768,659.7 768,661.5 767,661.5 767,660.7 766,660.7 766,662 765,662 765,661.7 764,661.7 764,661.5 763,661.5 763,662.8 762,662.8 762,662.4 761,662.4 761,662.5 760,662.5 760,663.2 759,663.2 759,663.5 758,663.5 758,663.5 757,663.5 757,664.4 756,664.4 756,664.3 755,664.3 755,662.7 754,662.7 754,665.9 753,665.9 753,664.8 752,664.8 752,662 751,662 751,665.2 750,665.2 750,664.7 749,664.7 749,666.1 748,666.1 748,664.7 747,664.7 747,664.8 746,664.8 746,665.9 745,665.9 745,665.6 744,665.6 744,667.5 743,667.5 743,666.3 742,666.3 742,667.5 741,667.5 741,668.7 740,668.7 740,667.6 739,667.6 739,667 738,667 738,668.7 737,668.7 737,667.8 736,667.8 736,667.9 735,667.9 735,668 734,668 734,667.3 733,667.3 733,671.3 732,671.3 732,667.9 731,667.9 731,668.8 730,668.8 730,667.9 729,667.9 729,669.4 728,669.4 728,669.8 727,669.8 727,673.3 726,673.3 726,668.7 725,668.7 725,669.7 724,669.7 724,668.7 723,668.7 723,671.8 722,671.8 722,671 721,671 721,671.2 720,671.2 720,671.3 719,671.3 719,671.3 718,671.3 718,670.3 717,670.3 717,671.5 716,671.5 716,671.1 715,671.1 715,670.8 714,670.8 714,671 713,671 713,671.6 712,671.6 712,670.3 711,670.3 711,670.6 710,670.6 710,669.8 709,669.8 709,672.2 708,672.2 708,671 707,671 707,669.8 706,669.8 706,670.4 705,670.4 705,672.3 704,672.3 704,670.4 703,670.4 703,673 702,673 702,670.6 701,670.6 701,671.7 700,671.7 700,671.7 699,671.7 699,672.7 698,672.7 698,670.6 697,670.6 697,670.8 696,670.8 696,670.1 695,670.1 695,671.3 694,671.3 694,671.4 693,671.4 693,669.1 692,669.1 692,672.1 691,672.1 691,672.7 690,672.7 690,670.1 689,670.1 689,669.5 688,669.5 688,670 687,670 687,668.7 686,668.7 686,670.9 685,670.9 685,671.7 684,671.7 684,672 683,672 683,671.4 682,671.4 682,670.5 681,670.5 681,670.1 680,670.1 680,670.9 679,670.9 679,671.2 678,671.2 678,671.3 677,671.3 677,672 676,672 676,669.5 675,669.5 675,671.5 674,671.5 674,672.8 673,672.8 673,671 672,671 672,671 671,671 671,670.2 670,670.2 670,670.4 669,670.4 669,670.4 668,670.4 668,670.3 667,670.3 667,671.9 666,671.9 666,671.6 665,671.6 665,671.4 664,671.4 664,670.8 663,670.8 663,671.1 662,671.1 662,671.3 661,671.3 661,671.6 660,671.6 660,671.1 659,671.1 659,670.8 658,670.8 658,671.2 657,671.2 657,671.5 656,671.5 656,671.5 655,671.5 655,670.2 654,670.2 654,672.8 653,672.8 653,673 652,673 652,670.4 651,670.4 651,672.1 650,672.1 650,670.9 649,670.9 649,670.7 648,670.7 648,670.9 647,670.9 647,669.9 646,669.9 646,670.3 645,670.3 645,670.9 644,670.9 644,671.8 643,671.8 643,671.5 642,671.5 642,670.4 641,670.4 641,669.6 640,669.6 640,671.3 639,671.3 639,671.9 638,671.9 638,672.1 637,672.1 637,670.7 636,670.7 636,670.2 635,670.2 635,670.4 634,670.4 634,673.6 633,673.6 633,669.6 632,669.6 632,671.1 631,671.1 631,671.5 630,671.5 630,669.6 629,669.6 629,672.2 628,672.2 628,669.7 627,669.7 627,670.9 626,670.9 626,671.4 625,671.4 625,670.8 624,670.8 624,671.3 623,671.3 623,671.4 622,671.4 622,671.7 621,671.7 621,669.2 620,669.2 620,672.5 619,672.5 619,669.7 618,669.7 618,669.4 617,669.4 617,671.6 616,671.6 616,672.3 615,672.3 615,670.9 614,670.9 614,671.9 613,671.9 613,672.8 612,672.8 612,671.6 611,671.6 611,671.6 610,671.6 610,670.5 609,670.5 609,670.9 608,670.9 608,670.1 607,670.1 607,671 606,671 606,671.8 605,671.8 605,671.3 604,671.3 604,671.6 603,671.6 603,669.7 602,669.7 602,671.4 601,671.4 601,671.8 600,671.8 600,670.3 599,670.3 599,671.1 598,671.1 598,670.2 597,670.2 597,669.7 596,669.7 596,671.2 595,671.2 595,670.2 594,670.2 594,672 593,672 593,670.7 592,670.7 592,671.4 591,671.4 591,670.8 590,670.8 590,671 589,671 589,669.8 588,669.8 588,670.2 587,670.2 587,670.3 586,670.3 586,669.5 585,669.5 585,671.7 584,671.7 584,670.8 583,670.8 583,671.5 582,671.5 582,670.9 581,670.9 581,670.9 580,670.9 580,669.2 579,669.2 579,670.9 578,670.9 578,670.5 577,670.5 577,670.5 576,670.5 576,672.4 575,672.4" fill="#02a0c0"/><path d="M814.8 530L819.5 530L818.1 571.9L817.7 623L816.7 623L816.3 571.9ZM844.1 530L848.5 530L847.2 576.6L846.8 633.5L845.8 633.5L845.4 576.6ZM873.3 530L877.6 530L876.4 579.5L876 640L875 640L874.6 579.5ZM902.3 530L906.9 530L905.5 579L905.1 639L904.1 639L903.7 579ZM931.8 530L935.8 530L934.7 581.8L934.3 645L933.3 645L932.9 581.8ZM960.3 530L965.6 530L963.9 580.4L963.5 642L962.5 642L962.1 580.4ZM989.7 530L994.6 530L993 585.8L992.6 654L991.6 654L991.2 585.8ZM1018.9 530L1023.7 530L1022.2 581.3L1021.8 644L1020.8 644L1020.4 581.3ZM1048.1 530L1052.8 530L1051.3 580.4L1050.9 642L1049.9 642L1049.5 580.4Z" fill="#02a0c0"/><path d="M575.5 666.2V684.6M576.5 666.8V694.9M582.5 665.1V692.5M583.5 665.2V674.1M585.5 664.2V678.3M586.5 667.2V703M588.5 667.5V694.6M594.5 662.8V677.4M597.5 663.6V678M598.5 665V699.9M599.5 662.8V681.6M600.5 665.2V701.1M601.5 670.9V676.3M605.5 663.9V687.1M606.5 666.9V676M608.5 663.8V695.9M610.5 665.7V702.2M614.5 664.3V702.4M617.5 666.8V678.5M618.5 663.2V678.2M621.5 664.5V674.4M622.5 669.1V681.1M626.5 669.2V679.1M627.5 667.9V674.7M628.5 667.3V697.8M629.5 662.3V671.9M633.5 669.9V684M637.5 665.5V693M649.5 665.5V676.7M650.5 670.1V682.6M652.5 669.8V681.1M653.5 666V678.6M655.5 667.8V693.3M657.5 668.6V678.8M658.5 666.4V708M659.5 671V678.4M662.5 670.4V704.4M663.5 667.1V707.3M666.5 665.2V690.3M667.5 669.6V677.1M668.5 667.6V674.9M671.5 666.3V691M672.5 666.9V675.7M673.5 671.9V693.5M674.5 666.2V682.8M675.5 666.9V674.5M676.5 667.2V677.6M677.5 665.8V674.3M678.5 667V674.3M679.5 669.3V677.5M680.5 667.5V701M681.5 669.7V674.7M683.5 668.3V677M684.5 667.9V682.3M685.5 665.6V679.5M687.5 664.2V680.8M688.5 667.7V673.7M692.5 667.2V686.2M693.5 667.7V716.9M694.5 664V723.9M697.5 664.5V684.3M699.5 664.1V679.1M701.5 668.1V682M703.5 669.6V673.7M706.5 666.5V675.6M708.5 669.6V678.1M712.5 669V680.2M714.5 663.9V701.5M723.5 668.1V671.2M724.5 666.5V677M727.5 669.6V692.3M728.5 665.9V675.3M731.5 664.3V670.6M735.5 663.4V682.8M739.5 663.9V669.9M740.5 661.1V702.4M742.5 662.9V669.3M746.5 657.2V697.1M750.5 658.7V690.1M753.5 665.5V678.6M754.5 656.6V670M755.5 658.3V669.6M760.5 660.6V684M762.5 662.4V666.5M764.5 661.1V672.1M765.5 658.9V673.5M766.5 660.5V675.5M767.5 659.3V670.8M768.5 651.9V663.4M769.5 655.3V663.2M770.5 655.3V661.3M774.5 658.5V665.6M775.5 656.7V668.5M776.5 658.9V662M777.5 657.4V703.3M779.5 656.3V673.1M785.5 652.7V670M787.5 656.2V684.9M788.5 525.6V535M791.5 528.1V539.4M792.5 525.4V547M793.5 528.7V557.9M794.5 532.1V549.4M799.5 529V537.1M800.5 526.8V559.6M803.5 530.6V536.6M804.5 528.8V538.8M807.5 528.5V540.2M809.5 531.7V551.5M815.5 533.1V540.2M817.5 527.1V534.7M819.5 532.2V546.4M820.5 525.3V537.9M822.5 527V554.8M830.5 525.5V596.2M831.5 527V549.4M833.5 534.3V537.2M835.5 528.1V540.6M836.5 529.9V541.9M840.5 525.7V536.9M843.5 527.3V550.1M846.5 525.5V539.3M847.5 529.2V545.4M848.5 533.1V542.6M853.5 529.5V549.6M854.5 529.4V538M857.5 525.8V536.1M859.5 528.9V539.3M864.5 531.3V536.5M866.5 532.5V538.2M867.5 528.3V558.8M869.5 530.6V542M870.5 524.4V535.2M871.5 530.6V536.4M873.5 528.3V536.7M876.5 530.7V547.9M877.5 532.6V545.1M878.5 525V546.3M879.5 526.3V541.7M881.5 530.2V542.7M883.5 529.8V548.5M891.5 533.7V545.3M892.5 530.1V582.9M893.5 531.2V542.7M894.5 531.7V547.9M896.5 530.3V541.5M897.5 529.3V539.8M898.5 525V549.2M900.5 529.3V544.5M901.5 531.6V559.1M903.5 530.6V551.7M905.5 531.2V540.4M906.5 527.3V538.8M907.5 530.2V556.9M909.5 531.3V537.1M911.5 528.8V546M914.5 531.4V537.7M915.5 529.6V545.3M916.5 531.1V539.7M917.5 529.1V537.1M918.5 528.7V541.5M920.5 533.7V551.4M922.5 526.8V548.1M926.5 530.8V544.3M927.5 527.9V547.2M928.5 530.6V594.6M929.5 526.3V570M930.5 527V545.3M933.5 531V547.5M934.5 531.4V556.7M938.5 533.5V541.8M939.5 527.7V536.9M942.5 527.7V535.1M943.5 526.7V537.2M945.5 527V536.9M946.5 532.5V535.8M947.5 526.9V540.4M948.5 531.2V538.9M949.5 525.7V534.8M950.5 529.1V544.8M951.5 528.7V539.5M952.5 526V537.1M953.5 526.5V538.2M956.5 528.8V557.3M958.5 529.9V553.2M960.5 527.9V543.6M963.5 526.7V542.5M965.5 529.3V537.1M966.5 527.7V544.2M968.5 528.9V538.1M969.5 528.5V537.6M971.5 525.5V537.2M974.5 530.2V545.2M975.5 533.9V538.2M976.5 528.1V556.9M977.5 523.8V537.7M979.5 531.5V562.6M984.5 527.3V542.4M987.5 533.3V546.4M988.5 525.6V537.8M989.5 528.7V545.8M993.5 534.5V549.9M994.5 527V550.9M997.5 527.6V537M998.5 529.8V553M999.5 528V550.3M1002.5 528.7V542.1M1003.5 527.1V561.5M1004.5 533.4V538.9M1005.5 529.3V545.2M1006.5 528.7V541.2M1008.5 529.7V534.9M1009.5 529.1V543.5M1013.5 531.1V536.1M1014.5 531.3V542.7M1015.5 531.3V535.7M1016.5 527.1V549.7M1022.5 532.3V564.8M1025.5 529.6V550M1028.5 531.1V550.8M1030.5 528V550.9M1032.5 524.6V537.1M1033.5 530.2V541.8M1036.5 526.4V548M1038.5 530.7V537.1M1040.5 527V543.9M1041.5 529.4V549M1046.5 534.3V541.3M1048.5 529.4V556.7M1050.5 532.9V544.7M1051.5 528.1V556.2M1054.5 526.8V546.5M1056.5 530V552.9M1057.5 526V538.7M1058.5 525.9V543.8M1066.5 531.6V539.7M1069.5 531.5V537.1M1071.5 526.8V534.8M1072.5 531.6V537.3M1075.5 530.6V540.2M1077.5 526.5V541.3M1081.5 646.1V694.2M1085.5 648.4V671.7M1089.5 647.3V663.8M1090.5 650.2V687.7M1091.5 650.3V673.2M1092.5 648.8V658.8M1093.5 651.5V673.1M1094.5 658.1V670M1098.5 655.8V667M1099.5 651.4V671.6M1101.5 655.2V668.5M1102.5 658.9V723.3M1106.5 657.2V665.8M1107.5 660V666.7M1108.5 661.5V673.8M1110.5 661.1V685.6M1112.5 658V667.1M1115.5 662.7V684.8M1116.5 665V683.7M1119.5 661.5V674.3M1121.5 669.8V683.2M1124.5 668.1V673.2M1127.5 669.9V701.3M1128.5 663.6V676M1131.5 666.7V688.9M1132.5 665.6V684.8M1133.5 670.3V680.3M1134.5 672.6V698.3M1135.5 669.2V704.2M1142.5 670.9V723.9M1143.5 664.1V682M1144.5 665.2V693.3M1145.5 668.4V683.1M1149.5 663.1V687.3M1150.5 670.1V680.8M1151.5 672V680.9M1153.5 672.2V679.3M1154.5 667.6V680.9M1156.5 668.8V677.4M1157.5 664.8V678.2M1158.5 666.3V697.2M1160.5 667.1V702.8M1167.5 665.2V686.5M1168.5 670.1V687.2M1172.5 665V695.7M1175.5 662.9V680.5M1177.5 667.9V683.2M1179.5 666.3V678.1M1183.5 669.1V675.9M1184.5 665.1V701.6M1185.5 664.2V685.5M1186.5 672V679M1187.5 663V678.4M1189.5 665.3V683.8M1191.5 670.1V677.9M1192.5 666.8V678.7M1194.5 671.8V684.8M1195.5 664V687.1M1197.5 667.6V678.1M1199.5 669.5V694.1M1203.5 664.2V682.3M1204.5 669.5V680.3M1205.5 668.7V675.1M1208.5 669.2V677.1M1209.5 664V692M1210.5 668.9V676.5M1213.5 670.4V692.6M1214.5 664.6V678.3M1216.5 667.4V684M1217.5 670.2V721.5M1218.5 670.9V688.9M1221.5 666.1V684.9M1225.5 670.3V676.4M1226.5 663.9V675.5M1227.5 668.7V692.9M1228.5 666.9V690M1230.5 663V706M1232.5 671.3V692M1234.5 666.7V672.1M1235.5 666.1V677.9M1238.5 666.2V674.9M1239.5 668V686M1243.5 663.7V686.4M1244.5 669.9V684.6M1249.5 672.3V684.2M1252.5 670.4V673.8M1255.5 667.8V688.3M1257.5 673.4V685.2M1258.5 668.4V676.4M1259.5 671.9V681.9M1260.5 667V684.6M1262.5 667.5V689.4M1264.5 665.3V688.4M1266.5 666.4V685.1M1267.5 664.4V673.9M1268.5 664.8V717.8M1269.5 665.3V702.3M1270.5 670.3V675.9M1273.5 670.7V710.6M1274.5 665.5V686.8M1278.5 665.6V683.1M1280.5 665.6V678.2M1283.5 664.6V675.1M1285.5 669V678.1M1286.5 667.7V697.8M1287.5 668.4V677.2" stroke="#8fd6e6" stroke-width="1" fill="none"/><path d="M575.5 605.6V607M576.5 606.6V607.6M577.5 605.8V606.8M578.5 603.7V607.2M579.5 606.3V607.3M580.5 605.1V607.7M581.5 606.2V607.2M582.5 603.3V606.7M583.5 605.6V607.3M584.5 602.9V606.8M585.5 604V606.4M586.5 606V607M587.5 604.8V605.8M588.5 605.5V606.5M589.5 605V606M590.5 605.3V607.2M591.5 604.8V606.3M592.5 605.1V607M593.5 605.9V606.9M594.5 605.6V606.6M595.5 603.9V606.8M596.5 604.4V607.2M597.5 604.3V606.3M598.5 603.7V605.7M599.5 605.1V606.8M600.5 602.8V607.2M601.5 605.6V606.8M602.5 604.6V607M603.5 603V606.8M604.5 604.6V605.6M605.5 604.5V606.3M606.5 604.5V606.2M607.5 605.6V606.6M608.5 603.7V606.7M609.5 605.3V606.6M610.5 603V606.9M611.5 602.8V606.3M612.5 606V607M613.5 602.6V605.5M614.5 605.3V606.5M615.5 603.8V605.8M616.5 603.2V605.6M617.5 604.9V606.9M618.5 604V606.1M619.5 605.3V606.3M620.5 603.9V607.2M621.5 603.3V605.9M622.5 602.8V606.9M623.5 601.3V605.8M624.5 601.7V606.1M625.5 601.9V605.7M626.5 605.1V606.2M627.5 602.1V606M628.5 604.2V605.8M629.5 604.2V605.9M630.5 605.7V606.7M631.5 606V607.1M632.5 604.7V605.7M633.5 605.6V606.6M634.5 601.6V605.5M635.5 605.2V606.2M636.5 603.2V605.8M637.5 604.6V606M638.5 603.4V605.9M639.5 601.4V605.6M640.5 603.7V604.8M641.5 603V606.2M642.5 604.5V606.1M643.5 604.9V606.4M644.5 602.4V606.3M645.5 601.6V605.4M646.5 604.5V605.5M647.5 601.5V605.4M648.5 604.8V605.8M649.5 602.4V604.7M650.5 601.4V605.8M651.5 603.1V605.9M652.5 603.4V605.3M653.5 605V606M654.5 602.5V606.7M655.5 604.5V605.8M656.5 603V605.8M657.5 601.2V605.6M658.5 601.4V604.8M659.5 603.4V605.1M660.5 601.9V605.2M661.5 604V605.9M662.5 604.6V605.6M663.5 603.3V605.2M664.5 604.1V605.2M665.5 601.2V605.4M666.5 600.3V604.7M667.5 602.8V605M668.5 603.9V605.2M669.5 602.9V605.5M670.5 603.7V604.8M671.5 604.9V605.9M672.5 603.7V604.7M673.5 602.9V604.5M674.5 601V604.5M675.5 604.5V605.5M676.5 603.4V605.3M677.5 604.4V605.4M678.5 602.5V605.6M679.5 604.3V605.3M680.5 601.3V605.4M681.5 603.7V605.5M682.5 603.5V604.5M683.5 602.2V605.9M684.5 601.4V604.8M685.5 602.8V604.8M686.5 602.3V605.1M687.5 600.6V605.1M688.5 602.2V604.6M689.5 601.3V604.2M690.5 604.1V605.4M691.5 603.3V604.9M692.5 603.3V604.8M693.5 604V605M694.5 603.1V604.7M695.5 603.6V605.1M696.5 599.7V604.1M697.5 603.7V604.7M698.5 604.3V605.3M699.5 600.8V604.6M700.5 604.2V605.2M701.5 600.8V605.3M702.5 600.8V605.1M703.5 602.6V605.1M704.5 600.7V605M705.5 600.7V604.9M706.5 603V605.4M707.5 601V604.9M708.5 603V604M709.5 600.9V604.8M710.5 602.6V604.9M711.5 599.9V603.6M712.5 601V604.7M713.5 601V604.6M714.5 602.2V604.8M715.5 604.1V605.1M716.5 603.2V604.6M717.5 599.5V603.9M718.5 602.8V605.2M719.5 599.9V604.3M720.5 600.4V604.2M721.5 603.1V604.1M722.5 600.2V603.6M723.5 603.1V604.1M724.5 599.9V604.2M725.5 603.4V604.4M726.5 600.8V604.5M727.5 599.9V603.7M728.5 602.1V604.1M729.5 598.9V603.4M730.5 603.5V604.5M731.5 604V605M732.5 601.2V604.3M733.5 602.4V603.8M734.5 603.2V604.2M735.5 603.6V604.6M736.5 600.3V603.8M737.5 603.3V605.4M738.5 600.6V602.7M739.5 599.2V603.6M740.5 603V604M741.5 602.5V604.5M742.5 603.1V604.1M743.5 603.2V604.2M744.5 592.8V595.9M745.5 591.2V595.5M746.5 592.3V594.1M747.5 592.2V593.2M748.5 587.3V591.3M749.5 590.1V592.3M750.5 590.8V591.8M751.5 587.5V590.7M752.5 588.7V589.7M753.5 586V589.9M754.5 587.4V589M755.5 585.1V586.5M756.5 583V586.9M757.5 585.1V586.1M758.5 582.4V584.7M759.5 583V584.5M760.5 582.8V584.2M761.5 581.3V583.4M762.5 581.9V582.9M763.5 577.3V581.5M764.5 578.9V581.9M765.5 579.1V580.8M766.5 578.3V579.3M767.5 577.9V578.9M768.5 574.9V578.4M769.5 575.9V577.1M770.5 597.3V599.2M771.5 596.3V597.3M772.5 594.6V596M773.5 591.7V594.7M774.5 592.1V593.4M775.5 591.2V592.2M776.5 587V591M777.5 585.8V589M778.5 584.1V588M779.5 585.8V586.8M780.5 582.2V586.3M781.5 582.5V584.9M782.5 580V583M783.5 579.1V581.6M784.5 578.2V580.5M785.5 578.2V579.2M786.5 575.2V578M787.5 572.2V576M788.5 469.1V471.3M789.5 470.7V471.7M790.5 469.6V470.6M791.5 470V471M792.5 467.2V471.2M793.5 468.1V471.9M794.5 467V470.9M795.5 467.6V470.5M796.5 470.8V471.8M797.5 470.1V471.1M798.5 469V471.8M799.5 470.1V471.1M800.5 470.5V471.5M801.5 470.1V471.1M802.5 470.9V472.1M803.5 470.2V471.2M804.5 467.6V470.4M805.5 469.1V470.8M806.5 470.5V471.7M807.5 470.2V471.2M808.5 470.7V471.7M809.5 469.9V470.9M810.5 467.3V471.7M811.5 467.5V471.8M812.5 466.9V471.4M813.5 467.5V471.7M814.5 470.3V471.3M815.5 466.4V470.7M816.5 468V471.1M817.5 470.2V471.2M818.5 469V471.5M819.5 469.6V471.8M820.5 470.5V471.5M821.5 466.8V471.1M822.5 468.3V471.4M823.5 469.7V470.7M824.5 470.3V471.7M825.5 469.5V471.4M826.5 467.1V470.8M827.5 470V471.5M828.5 469.9V470.9M829.5 468V471.7M830.5 468.3V471.8M831.5 468V471.2M832.5 470.3V471.3M833.5 469.7V470.7M834.5 469.1V470.9M835.5 468.9V470.6M836.5 468.4V471.9M837.5 470.7V471.7M838.5 469.7V470.9M839.5 469.8V470.8M840.5 468.1V471.4M841.5 468.8V471.5M842.5 469.8V470.8M843.5 467.9V471.5M844.5 468.5V471.6M845.5 469.6V470.6M846.5 470.4V471.4M847.5 468.7V471M848.5 470.9V471.9M849.5 469.3V471.3M850.5 470.8V471.8M851.5 470.5V471.5M852.5 470.1V471.1M853.5 466.9V471.3M854.5 468.5V471.5M855.5 469.6V471.6M856.5 469.9V470.9M857.5 467.9V470.8M858.5 469.7V470.7M859.5 470.2V471.2M860.5 467.8V471.4M861.5 470.2V471.2M862.5 470.4V471.4M863.5 468.8V471.2M864.5 468.7V471.7M865.5 467.8V472M866.5 469.3V470.3M867.5 468.7V472.1M868.5 467.9V471.8M869.5 470.4V471.4M870.5 470.5V471.5M871.5 469V470M872.5 468.5V472.4M873.5 470.6V471.7M874.5 466.8V471.1M875.5 471.1V472.1M876.5 470.4V471.6M877.5 469.6V470.6M878.5 469.6V472.3M879.5 468.3V472.2M880.5 470.2V471.2M881.5 467.7V471.4M882.5 470.7V472.1M883.5 469.5V471.7M884.5 469.5V470.5M885.5 468.9V470.8M886.5 469.1V470.8M887.5 466.9V470.7M888.5 467.5V470.8M889.5 468.9V471.2M890.5 467.3V470.6M891.5 468.2V471.2M892.5 470V471.5M893.5 467.9V471.4M894.5 470.1V471.5M895.5 468.9V471M896.5 469.7V471.5M897.5 466.8V471.1M898.5 468.3V472M899.5 468.9V470.4M900.5 469.7V471.2M901.5 470.5V471.5M902.5 467.6V471.2M903.5 469.1V470.1M904.5 467.2V471.4M905.5 470.8V471.9M906.5 469V471.9M907.5 469.4V470.9M908.5 470.7V471.7M909.5 468V471.7M910.5 470.7V471.7M911.5 469.9V471.1M912.5 469V471.4M913.5 467.8V471.2M914.5 469.2V471.6M915.5 468.5V472.2M916.5 469.7V470.7M917.5 467.7V472.1M918.5 469.9V470.9M919.5 468.4V471M920.5 469.4V472.1M921.5 469.4V471.4M922.5 470.1V471.3M923.5 470.7V471.7M924.5 470.4V471.4M925.5 470.5V471.5M926.5 470.5V472.3M927.5 469.8V470.8M928.5 469.9V470.9M929.5 470V471.5M930.5 468.8V470.9M931.5 467.3V471M932.5 467.9V470.9M933.5 468.9V472.3M934.5 471V472M935.5 470.2V471.2M936.5 469.2V471.5M937.5 468.4V471.8M938.5 470.1V471.9M939.5 467.2V470.8M940.5 468.2V471.4M941.5 467V471.1M942.5 470.8V471.8M943.5 466.9V471.3M944.5 468.9V471.2M945.5 469.6V470.6M946.5 467.7V470.8M947.5 469.3V471M948.5 470.7V471.7M949.5 470V471M950.5 470.1V471.1M951.5 470.4V471.4M952.5 470.1V471.1M953.5 469.3V471.4M954.5 471.1V472.1M955.5 470V471M956.5 467.4V471.4M957.5 467.5V471M958.5 470.4V471.4M959.5 466.6V470.9M960.5 469.7V470.7M961.5 467.7V471.6M962.5 467.2V471.6M963.5 469.8V470.8M964.5 469V470.7M965.5 468.7V470.6M966.5 469.5V471M967.5 468.2V472.5M968.5 467.3V470.7M969.5 469.5V471.9M970.5 468.7V470.6M971.5 469.5V471.9M972.5 469.7V470.9M973.5 470.9V471.9M974.5 469.9V471.1M975.5 471.4V472.4M976.5 468.8V471.8M977.5 470.4V471.6M978.5 470.1V471.4M979.5 468.4V470.6M980.5 468.1V471.1M981.5 468.3V471.7M982.5 468.4V470.8M983.5 470.2V471.2M984.5 469.4V470.8M985.5 468.6V471.1M986.5 469.8V471.5M987.5 470.7V471.7M988.5 469.3V471.5M989.5 470.3V471.3M990.5 469V471M991.5 470.4V471.4M992.5 467.7V471.6M993.5 470V471.6M994.5 467.6V471.4M995.5 470.3V472.3M996.5 467.9V471.4M997.5 469.2V472.1M998.5 468.9V471.5M999.5 469.7V470.7M1000.5 466.9V471.2M1001.5 467.3V471.2M1002.5 467.4V470.8M1003.5 468.4V470.8M1004.5 469.6V470.6M1005.5 467.7V471.6M1006.5 470.8V471.8M1007.5 467.4V471.3M1008.5 470.9V471.9M1009.5 468.1V471.6M1010.5 467.1V471.4M1011.5 469.4V472.4M1012.5 468.8V471.4M1013.5 468.6V471.6M1014.5 470.5V471.5M1015.5 468.1V470.6M1016.5 469.7V470.7M1017.5 468.4V470.7M1018.5 469.9V471.3M1019.5 470.6V471.6M1020.5 471V472M1021.5 466.2V470.3M1022.5 468.8V471.2M1023.5 471.4V472.4M1024.5 469.7V472.5M1025.5 470V471.7M1026.5 469.4V472.5M1027.5 469.4V471.1M1028.5 467.8V470.6M1029.5 468.4V471.3M1030.5 470.5V471.5M1031.5 470.6V472M1032.5 469.6V471.8M1033.5 469.5V471.5M1034.5 469.9V471.3M1035.5 468.5V470.2M1036.5 470.3V471.3M1037.5 467.8V470.6M1038.5 468.1V470.9M1039.5 470V471M1040.5 467.5V471.7M1041.5 469.4V471.7M1042.5 469.6V471.3M1043.5 467.7V470.6M1044.5 468.5V471.4M1045.5 468.6V472M1046.5 468.1V471.7M1047.5 470.2V471.7M1048.5 469.1V471.1M1049.5 469.9V470.9M1050.5 467.2V471.5M1051.5 471V472M1052.5 470.2V471.2M1053.5 467.1V471.6M1054.5 471V472M1055.5 469.9V470.9M1056.5 468.4V471.2M1057.5 468V470.5M1058.5 467.7V470.8M1059.5 466.1V470.4M1060.5 468V471.2M1061.5 470.1V471.9M1062.5 468.2V471.6M1063.5 468.7V471.4M1064.5 470.6V471.6M1065.5 468.9V470.6M1066.5 468.4V470.8M1067.5 470.5V471.5M1068.5 466.5V470.3M1069.5 468.4V471M1070.5 470V471M1071.5 470.1V471.2M1072.5 467.9V470.9M1073.5 468.4V471.3M1074.5 469.3V472.4M1075.5 468.2V471.4M1076.5 469.1V471.1M1077.5 467.1V471.6M1078.5 468.9V471.5M1079.5 468.6V470.4M1080.5 575.5V578.3M1081.5 577.3V578.3M1082.5 578V579M1083.5 578.5V579.5M1084.5 580.7V582.6M1085.5 582.4V583.8M1086.5 581.6V585.8M1087.5 581.1V585.2M1088.5 583.6V587.8M1089.5 587.9V588.9M1090.5 584.8V589M1091.5 590.6V591.7M1092.5 590.4V591.9M1093.5 591.2V592.8M1094.5 592.3V594.9M1095.5 592.8V595.2M1096.5 576.5V577.5M1097.5 576.5V578.3M1098.5 575.6V579.5M1099.5 576.2V580.2M1100.5 579.3V581.2M1101.5 578V580.8M1102.5 580V582.6M1103.5 581V583.6M1104.5 583.6V584.6M1105.5 584.2V585.2M1106.5 585.7V587.2M1107.5 586V587M1108.5 586.5V588.2M1109.5 585.8V589.3M1110.5 589V590M1111.5 587.9V590.2M1112.5 590.4V591.4M1113.5 589.8V592.6M1114.5 589.8V593M1115.5 590.3V594.6M1116.5 595.1V596.1M1117.5 592.7V596.1M1118.5 594.6V597M1119.5 596.1V597.1M1120.5 595V598.6M1121.5 595.5V599.3M1122.5 599.4V600.4M1123.5 598.9V599.9M1124.5 597.7V600.2M1125.5 596.7V600.4M1126.5 600.2V601.2M1127.5 596.5V600.3M1128.5 598V600.6M1129.5 598.5V600.5M1130.5 597.8V601.6M1131.5 599.1V601M1132.5 597.8V601.6M1133.5 601.1V602.1M1134.5 600V601.2M1135.5 598.5V602.2M1136.5 600.9V602.3M1137.5 598.3V602.2M1138.5 601.9V603M1139.5 599.6V601.1M1140.5 599.6V603M1141.5 601V603.3M1142.5 602.4V603.8M1143.5 599.2V603.7M1144.5 602.8V603.8M1145.5 599V603.3M1146.5 601.7V603.9M1147.5 600.8V603.8M1148.5 603.1V604.1M1149.5 603.4V604.4M1150.5 599.9V604.1M1151.5 603.2V604.2M1152.5 601.1V604.6M1153.5 601.4V604.8M1154.5 603.3V604.3M1155.5 603.3V604.3M1156.5 604.3V605.3M1157.5 602.7V605.4M1158.5 603.3V604.9M1159.5 602.9V605.4M1160.5 604.6V605.7M1161.5 604.6V606.6M1162.5 602.9V606.8M1163.5 605.5V607M1164.5 605.2V606.2M1165.5 602.5V606.5M1166.5 603.2V606.9M1167.5 602.5V605.4M1168.5 604.4V605.8M1169.5 602V606.2M1170.5 601.4V605.8M1171.5 602.3V605.9M1172.5 604.1V605.1M1173.5 601V605.3M1174.5 603.2V605.7M1175.5 603.5V605.5M1176.5 604.9V605.9M1177.5 606.2V607.2M1178.5 602.3V605.7M1179.5 603.5V605.5M1180.5 601.4V605.9M1181.5 604.1V605.2M1182.5 603.9V605.4M1183.5 602.8V606.2M1184.5 605.2V606.2M1185.5 605.4V606.4M1186.5 601.7V606.2M1187.5 604.8V605.8M1188.5 603.3V606.3M1189.5 603.7V605.6M1190.5 601.9V606.4M1191.5 602.3V604.9M1192.5 604.6V607M1193.5 602.4V605.7M1194.5 605.2V606.2M1195.5 601.7V606M1196.5 603.7V606.4M1197.5 601V605.3M1198.5 603.5V606.1M1199.5 604.2V606.3M1200.5 603.4V606.3M1201.5 602.5V605.3M1202.5 605.7V606.7M1203.5 604.3V606M1204.5 605.7V606.7M1205.5 605.2V606.2M1206.5 603.2V605.6M1207.5 603.2V605.6M1208.5 603.5V605.9M1209.5 602.6V604.9M1210.5 602.3V606.2M1211.5 604V605.8M1212.5 602.8V606.3M1213.5 604.6V605.6M1214.5 604.8V605.8M1215.5 603V605.2M1216.5 603.9V605.6M1217.5 604.9V605.9M1218.5 602.9V605.8M1219.5 604.5V605.5M1220.5 604.2V605.6M1221.5 603.3V606M1222.5 602.6V605.3M1223.5 605.5V606.8M1224.5 604.9V605.9M1225.5 603.7V604.7M1226.5 603V606.6M1227.5 604.1V605.1M1228.5 601.9V606M1229.5 603.4V606.4M1230.5 604.3V606.2M1231.5 604.6V606.5M1232.5 605.5V606.5M1233.5 604.7V605.8M1234.5 602.3V605.6M1235.5 604.2V605.9M1236.5 603.2V605.4M1237.5 603.1V606M1238.5 601.3V605.6M1239.5 604V606.4M1240.5 604.9V605.9M1241.5 602.2V605.9M1242.5 602.6V605.7M1243.5 605.4V606.4M1244.5 604.8V605.8M1245.5 605.1V606.1M1246.5 605.6V606.6M1247.5 603.1V606.4M1248.5 601.6V605.6M1249.5 605.2V606.2M1250.5 605.6V606.6M1251.5 601.7V605.9M1252.5 604.1V605.1M1253.5 604.7V605.7M1254.5 601.2V605.7M1255.5 602.6V606M1256.5 606.1V607.1M1257.5 603V606.3M1258.5 601.5V605.7M1259.5 604.4V606.5M1260.5 601.9V605.4M1261.5 604.5V605.8M1262.5 603.7V605.9M1263.5 605.7V606.8M1264.5 605.7V606.7M1265.5 600.8V605.2M1266.5 602.8V606.2M1267.5 601.3V605.5M1268.5 602.4V605.4M1269.5 604.4V605.4M1270.5 601.7V605.7M1271.5 601.4V605.9M1272.5 605.7V606.7M1273.5 604.4V606.3M1274.5 605.2V606.2M1275.5 604.8V606.1M1276.5 604.5V605.5M1277.5 601.8V605.8M1278.5 603.1V606.5M1279.5 605.3V606.3M1280.5 602.6V606.2M1281.5 602V605.3M1282.5 605.2V606.2M1283.5 604.1V605.1M1284.5 603.1V605.4M1285.5 605.3V606.3M1286.5 603.1V605.8M1287.5 605.6V606.6M1288.5 600.7V605.2M575.5 671.4V672.6M576.5 669.5V679.6M577.5 669.5V670.6M578.5 669.9V674.8M579.5 668.2V677.4M580.5 669.9V676.7M581.5 669.9V682.7M582.5 670.5V674.4M583.5 669.8V677.9M584.5 670.7V677M585.5 668.5V686.3M588.5 668.8V678.3M589.5 670V693.1M590.5 669.8V681.5M591.5 670.4V673.4M592.5 669.7V675M594.5 669.2V693.5M595.5 670.2V682.6M596.5 668.7V681.7M600.5 670.8V690.6M601.5 670.4V673.6M602.5 668.7V701.4M603.5 670.6V680.7M604.5 670.3V719.1M605.5 670.8V678.5M606.5 670V683.3M607.5 669.1V683.7M608.5 669.9V673.4M614.5 669.9V673.2M615.5 671.3V672.7M616.5 670.6V672M618.5 668.7V670M624.5 669.8V687.6M627.5 668.7V696.9M629.5 668.6V693.1M630.5 670.5V685.5M631.5 670.1V676.9M632.5 668.6V678.1M633.5 672.6V683.1M634.5 669.4V678M637.5 671.1V676.5M638.5 670.9V673.7M639.5 670.3V691M640.5 668.6V670.2M641.5 669.4V716.4M642.5 670.5V686.3M643.5 670.8V675.1M645.5 669.3V688.2M646.5 668.9V690.3M647.5 669.9V678.4M648.5 669.7V673.5M649.5 669.9V689.6M650.5 671.1V678.1M651.5 669.4V682.6M652.5 672V674.2M653.5 671.8V678.9M654.5 669.2V675.7M655.5 670.5V678.8M656.5 670.5V678.6M657.5 670.2V675.3M659.5 670.1V688.1M663.5 669.8V676.7M664.5 670.4V672.7M665.5 670.6V714.7M666.5 670.9V677.2M668.5 669.4V695M669.5 669.4V679.8M671.5 670V674M672.5 670V693M673.5 671.8V691.4M677.5 670.3V672.9M678.5 670.2V689M679.5 669.9V687.8M680.5 669.1V672.5M681.5 669.5V670.5M682.5 670.4V678M684.5 670.7V676.1M686.5 667.7V670.2M687.5 669V676.2M688.5 668.5V674.8M689.5 669.1V682.5M690.5 671.7V687.2M693.5 670.4V679.3M695.5 669.1V673.5M696.5 669.8V681.7M697.5 669.6V676.5M698.5 671.7V703.4M699.5 670.7V678.6M702.5 672V703.6M704.5 671.3V677.6M706.5 668.8V694.1M707.5 670V689.3M709.5 668.8V678.8M710.5 669.6V673.7M711.5 669.3V671.3M712.5 670.6V683.4M713.5 670V693.5M714.5 669.8V681.1M715.5 670.1V724.8M716.5 670.5V674.2M717.5 669.3V686.5M718.5 670.3V694.5M719.5 670.3V673.9M721.5 670V686.6M724.5 668.7V675.3M726.5 672.3V674.1M729.5 666.9V677.2M733.5 666.3V689.3M734.5 667V683.6M735.5 666.9V669.3M736.5 666.8V669.7M737.5 667.7V680.8M738.5 666V667.4M740.5 667.7V673.7M742.5 665.3V668M743.5 666.5V671M745.5 664.9V666.5M747.5 663.7V667.5M748.5 665.1V670.7M749.5 663.7V678.7M750.5 664.2V679.3M751.5 661V684M752.5 663.8V671.8M753.5 664.9V666.8M756.5 663.4V673.9M757.5 662.5V694.8M758.5 662.5V676.3M762.5 661.8V666.1M763.5 660.5V679.6M765.5 661V667.9M766.5 659.7V684.4M767.5 660.5V674.9M769.5 659.7V675.4M770.5 657.2V668.5M771.5 658.9V661.2M773.5 660.5V679.7M774.5 659.2V670.9M776.5 658.2V682.1M777.5 658.1V663.2M778.5 658.7V690.1M780.5 658.5V679.3M781.5 657.9V665.2M782.5 656.7V662.6M783.5 657.9V671.3M784.5 655.2V677.9M785.5 655.1V659.4M786.5 655.1V659.6M787.5 656.2V670.2M788.5 530.8V551.6M792.5 531.1V532.6M794.5 532.2V545.8M795.5 532.2V542.2M796.5 530.8V537.6M797.5 532.6V540.4M798.5 533.8V548M799.5 531.8V533.5M800.5 532.1V535.7M801.5 533.6V539.5M804.5 532.5V533.6M805.5 534.9V568.9M807.5 530V531.4M808.5 534.1V537.5M809.5 533.2V549.3M811.5 533.9V544M812.5 532.4V541.1M813.5 531V549M814.5 533.6V542.9M815.5 533.5V552.4M816.5 530.4V534.6M817.5 531.5V535.7M818.5 531.3V532.6M821.5 533.7V540.8M822.5 532.1V539.9M824.5 532.2V534.6M825.5 531.5V545.7M826.5 531.7V548.2M828.5 533.2V542.8M829.5 532.7V535.1M830.5 532.2V536.4M831.5 533V545.6M832.5 533.3V539.9M833.5 533.9V536.4M834.5 532.3V542.6M835.5 533.1V543.1M836.5 533.6V535.6M839.5 533.6V545.5M841.5 531.5V536.8M842.5 531.6V533.7M843.5 532.8V536.1M844.5 533.6V548.3M846.5 531.2V541.4M847.5 533.5V539.2M849.5 532.3V533.6M850.5 532.1V536.1M851.5 533.8V535.3M852.5 531.9V546.2M854.5 532.7V535.3M855.5 530.9V536.9M857.5 531.2V533.2M858.5 531.6V536.6M859.5 531.5V553.9M860.5 534.2V538M861.5 533.8V537M862.5 531.4V575.1M863.5 531.5V536.8M864.5 531.3V561.6M865.5 533.1V539.7M867.5 531.7V536.6M868.5 530.7V540.1M869.5 530.8V559.2M870.5 530.7V534.9M871.5 532.9V545.4M872.5 531.9V544.4M873.5 532.6V543.8M874.5 533.1V569.3M875.5 531.3V545.8M881.5 532.8V543M883.5 531.1V533.7M884.5 533.6V546.9M885.5 532.6V539.8M887.5 534.1V566.4M888.5 532.4V534M890.5 532.5V554.8M891.5 533V551.7M892.5 532V544.8M893.5 532.1V533.6M894.5 532.4V539.5M895.5 532.5V538.9M896.5 534.8V545M897.5 532.8V534.2M899.5 531.3V533.5M900.5 534.9V543.9M902.5 530V534.9M903.5 533.5V539.4M904.5 531.2V538.2M905.5 531V536.4M907.5 531.4V538M909.5 531.3V554.9M912.5 530.6V534.1M913.5 532.1V543.9M914.5 531.2V537.2M915.5 532.2V539.9M916.5 533.9V541.9M918.5 532.5V534.6M919.5 532.2V536M921.5 532.8V536M922.5 533.3V542.5M924.5 534.9V555.4M926.5 532.5V534.2M927.5 533.2V541.7M929.5 532.4V548.1M930.5 531.9V537.9M932.5 531.9V533.9M933.5 531.9V534.8M936.5 533.2V535.3M937.5 532.6V537.6M940.5 531.9V543.6M941.5 534.4V568.8M942.5 530.7V558.7M943.5 532.4V536.9M944.5 532V534M945.5 533.4V543M946.5 532.1V545.4M948.5 532.9V549.9M949.5 531.6V556M951.5 532.7V538.2M952.5 532.2V547.4M953.5 530.7V536.3M954.5 531.7V533.3M955.5 533.8V537.5M956.5 532.5V544.1M958.5 533.7V537.5M963.5 530.6V543.1M964.5 531.4V551.6M965.5 532.8V536.7M969.5 531.3V544.4M970.5 531.5V534.1M972.5 532.5V534.4M974.5 531.1V535.2M975.5 534.3V549.9M976.5 532.4V553.1M977.5 530.4V531.5M978.5 531.2V539M979.5 531.8V541.5M980.5 533.1V540.5M983.5 533.7V551.9M984.5 529.7V556.4M985.5 534.7V554.7M987.5 533V542.3M988.5 532V536M989.5 532.7V546.7M990.5 531.4V532.6M991.5 533.5V544.8M992.5 533V547.1M995.5 532.6V537M996.5 533.5V542.7M997.5 532.8V546.6M998.5 532.6V540.6M999.5 533.6V554.6M1001.5 530.8V532.7M1002.5 532.5V535.2M1003.5 533.6V535.8M1004.5 532.8V534.4M1006.5 532.7V551.4M1008.5 531.9V533.7M1010.5 532.2V537.1M1013.5 533V537.3M1014.5 533.5V537.5M1015.5 532.5V537.8M1016.5 532.7V544.7M1017.5 531.6V536.8M1020.5 531.6V537.4M1021.5 532.1V549.3M1022.5 533.7V537.4M1023.5 531.2V539.2M1024.5 534.1V536.6M1026.5 532.6V533.6M1027.5 532.7V559.5M1028.5 533V541.8M1031.5 531.5V536M1032.5 530.9V533.1M1033.5 531.7V536.6M1034.5 531.9V543M1035.5 531.4V539.8M1036.5 533.1V549.2M1038.5 532.3V538.6M1039.5 531.7V539.5M1041.5 531.6V536M1043.5 533.4V535M1046.5 533.7V539.8M1047.5 531.2V540.1M1048.5 533.5V561.1M1049.5 532.6V540M1051.5 533.4V559.2M1052.5 533.4V568.8M1054.5 533V535.3M1055.5 533.8V536.3M1056.5 533.1V535.4M1058.5 531.5V534.3M1059.5 534.7V545.1M1060.5 532.7V535.5M1062.5 531.2V546.5M1063.5 532.1V535.1M1065.5 530.7V562.1M1068.5 529.8V538.1M1071.5 531.3V533.6M1073.5 532.4V542M1075.5 531.5V543.2M1076.5 533V545M1077.5 532.3V550M1080.5 652V658.1M1086.5 652.6V669.3M1087.5 654.3V667.3M1089.5 654.3V682.8M1090.5 656.6V685.3M1091.5 657.1V661.1M1092.5 654.8V671.6M1093.5 656.2V661.8M1094.5 657.3V660M1095.5 657.4V670.3M1097.5 657.8V659.5M1098.5 658.5V677.8M1099.5 658.1V674.1M1100.5 659.1V671M1101.5 660.1V661.3M1102.5 660.9V669.8M1104.5 660.8V683.4M1105.5 659.4V670.2M1106.5 660V680.9M1107.5 662.7V674.7M1108.5 663V667M1109.5 664.1V669.2M1110.5 666.1V692.2M1111.5 663.8V671M1115.5 665.7V674.8M1116.5 666.6V681.5M1117.5 665.7V672.4M1119.5 666.8V679.8M1121.5 669.3V675.2M1122.5 668.9V670.7M1124.5 669V733.4M1125.5 669V686.5M1126.5 669.9V671.3M1127.5 669.6V682.3M1129.5 670.6V679.5M1130.5 671V692.1M1132.5 671.5V684.5M1133.5 670.9V683.6M1134.5 672.4V676.9M1135.5 671.4V674.6M1136.5 670V672.1M1137.5 671.3V692M1139.5 670.8V675.1M1141.5 673.5V692.2M1143.5 669.6V701.1M1146.5 670.5V698.8M1149.5 669.1V682.3M1150.5 669.3V671.1M1151.5 671.5V703.2M1152.5 670.9V691.9M1153.5 672.6V676.1M1154.5 671.9V684.3M1155.5 670.5V698.9M1158.5 670.9V672.2M1159.5 669.1V697.8M1160.5 670.2V672.9M1161.5 670.1V678.3M1162.5 670.5V699.9M1163.5 671.5V676.1M1164.5 671.8V688.8M1165.5 672.4V690.9M1167.5 668.3V679.3M1168.5 671.8V673.5M1171.5 671.4V694.4M1173.5 670.8V673.8M1174.5 670.6V681.9M1175.5 669.8V678.5M1176.5 669.9V675.9M1177.5 670.6V672.6M1179.5 668.5V683.6M1183.5 671.5V695.8M1186.5 671.7V686.1M1187.5 669.7V676.9M1188.5 669.9V691.8M1190.5 670.8V702.4M1191.5 671.7V674.9M1193.5 671.1V672.5M1194.5 671.9V690M1195.5 669.9V672.8M1197.5 670.6V673.1M1199.5 671.8V683.3M1200.5 670.9V733.5M1201.5 671.6V694M1203.5 671V683.4M1205.5 671.7V676.3M1207.5 670.8V693.1M1208.5 670.5V675M1210.5 670.9V677.3M1211.5 671.4V692.7M1212.5 671.8V692.4M1214.5 670.1V674.6M1215.5 670.9V682.6M1216.5 673.1V687.5M1220.5 670.9V681.3M1221.5 672.1V678.1M1225.5 670.9V684.6M1226.5 670.5V690.4M1227.5 671.2V688.6M1228.5 672V698.7M1229.5 670.7V710.1M1230.5 669.2V687.6M1231.5 671.2V696.6M1232.5 672V675.7M1233.5 670.8V689.8M1234.5 668.9V679M1235.5 671.1V691M1236.5 671.7V672.9M1238.5 669.2V697.4M1239.5 671.6V679.3M1242.5 669V727M1243.5 669.5V684.4M1244.5 670.7V717.4M1245.5 669.4V673.5M1246.5 671.6V689.8M1247.5 672.3V674.7M1248.5 667.9V682.3M1251.5 671.3V676M1252.5 670.3V692.5M1254.5 672.6V674.4M1255.5 669.3V673M1257.5 672.7V682.6M1258.5 669.8V676.9M1259.5 671.1V684.7M1261.5 672V674.6M1262.5 671.7V674.3M1266.5 670.9V680.2M1267.5 669.4V675.9M1268.5 671V681.4M1269.5 670.2V705.2M1271.5 670.9V674.3M1273.5 669.9V677.1M1274.5 671.1V695.9M1276.5 670.7V679.7M1277.5 672V697M1279.5 670.5V750.9M1280.5 670.5V674.7M1283.5 670.5V676.2M1284.5 670.6V688.3M1285.5 672.5V688.2M1286.5 672.4V675.9M1287.5 670.6V679.9M816.5 520V617M817.5 530V623M845.5 520V627.5M846.5 530V633.5M874.5 520V634M875.5 530V640M903.5 520V633M904.5 530V639M932.5 520V639M933.5 530V645M961.5 520V636M962.5 530V642M991.5 520V648M992.5 530V654M1020.5 520V638M1021.5 530V644M1049.5 520V636M1050.5 530V642" stroke="#02a0c0" stroke-width="1" fill="none"/><path d="M816.5 469V522.5M817.5 469V532.3M845.5 469V517.5M846.5 469V527.1M874.5 469V518.9M875.5 469V532.6M903.5 469V515.2M904.5 469V526.9M932.5 469V516.1M933.5 469V529.5M961.5 469V516.9M962.5 469V525.1M991.5 469V520.7M992.5 469V529M1020.5 469V516.1M1021.5 469V526.5M1049.5 469V516.6M1050.5 469V527.4" stroke="#f4fdff" stroke-width="1" fill="none"/><path d="M788 631.2L1080 623.8" stroke="#1aa6c4" stroke-width="1.2" fill="none"/>
<circle cx="261.5" cy="37.4" r="4.0" fill="none" stroke="#2e5a66" stroke-width="1.4"/><path d="M258.7 40.3L254.4 44.9" stroke="#1e5a5e" stroke-width="2" stroke-linecap="round"/><path d="M263.4 10.5L257.2 15.5L263.4 20.4" fill="none" stroke="#eef3f6" stroke-width="2.1"/><path d="M532.4 10.5L526.2 15.5L532.4 20.4" fill="none" stroke="#eef3f6" stroke-width="2.1"/><path d="M255.2 66.2L259.5 62.2L263.8 66.2" fill="none" stroke="#e8f8fb" stroke-width="1.9"/><path d="M255.2 139.4L259.5 143.6L263.8 139.4" fill="none" stroke="#e8f8fb" stroke-width="1.9"/><path d="M522.4 44.2L526.7 40.2L531 44.2" fill="none" stroke="#e8f8fb" stroke-width="1.9"/><path d="M404.96 44.6A5 5 0 1 1 410.1 41.3" fill="none" stroke="#f2fbfd" stroke-width="1.9"/><path d="M409.2 43.9L412.7 41.5L407.9 39.9Z" fill="#f2fbfd"/><path d="M405.5 46V53" stroke="#5cc0d6" stroke-width="0.8"/><circle cx="11.1" cy="86" r="5.2" fill="#136e89"/><path d="M12 82.2v1.6" stroke="#c8eef8" stroke-width="1.9"/><path d="M11.6 84.9L10.7 89.4" stroke="#c8eef8" stroke-width="1.9"/><circle cx="11.1" cy="103.5" r="5.2" fill="#136e89"/><path d="M12 99.7v1.6" stroke="#c8eef8" stroke-width="1.9"/><path d="M11.6 102.4L10.7 106.9" stroke="#c8eef8" stroke-width="1.9"/><circle cx="11.1" cy="121" r="5.2" fill="#136e89"/><path d="M12 117.2v1.6" stroke="#c8eef8" stroke-width="1.9"/><path d="M11.6 119.9L10.7 124.4" stroke="#c8eef8" stroke-width="1.9"/><circle cx="258.4" cy="86" r="5.4" fill="#146d84"/><path d="M255.6 86H261.2M258.4 83.2V88.8" stroke="#dff4fa" stroke-width="1.5"/><circle cx="258.4" cy="103.5" r="5.4" fill="#146d84"/><path d="M255.6 103.5H261.2M258.4 100.7V106.3" stroke="#dff4fa" stroke-width="1.5"/><circle cx="258.4" cy="120.8" r="5.4" fill="#146d84"/><path d="M255.6 120.8H261.2M258.4 118V123.6" stroke="#dff4fa" stroke-width="1.5"/><path d="M514 64.3H521" stroke="#2a2a2a" stroke-width="1.3"/><path d="M516.3 63.2H518.7" stroke="#2a2a2a" stroke-width="1"/><path d="M514.8 65.5H520.2L519.8 72.3H515.2Z" fill="#2a2a2a"/><path d="M512.5 89.5L516 92.8L519.5 89.5" fill="none" stroke="#444" stroke-width="1.3"/><path d="M514 110.8h1M516 110.8h1M518 110.8h1" stroke="#555" stroke-width="1"/><path d="M514 127.8h1M516 127.8h1M518 127.8h1" stroke="#cfcfcf" stroke-width="1"/><path d="M592.2 385.8L597.2 383V388.6Z" fill="#222"/><path d="M1281 385.8L1276 383V388.6Z" fill="#222"/><circle cx="583.6" cy="15.8" r="3.0" fill="#dff5f8" stroke="#5a9aa6" stroke-width="1.5"/><circle cx="583.6" cy="15.8" r="0.9" fill="#3b6f7a"/><path d="M581.6 18.2L578.3 21.6" stroke="#3e5e66" stroke-width="2" stroke-linecap="round"/><path d="M595.6 18.5C595.2 15.5 596.2 13 597.8 12.8L598.6 14.6C599.4 13 601.5 12.2 603 13.2C604.6 14.6 604.2 18 602.6 20.4C601 22.4 596.4 22.2 595.6 18.5Z" fill="#1a76a6"/><rect x="609" y="9.8" width="53.5" height="13.8" fill="#fff" stroke="#ececec" stroke-width="1"/><path d="M657.8 21.8h2.6l-1.3 1z" fill="#999"/><path d="M665.5 11V23" stroke="#cfcfcf" stroke-width="1"/><path d="M676.1 16.2L673.5 13.6M673.5 15.2V13.6H675.1M679.7 16.2L682.3 13.6M682.3 15.2V13.6H680.7M676.1 19L673.5 21.6M673.5 20V21.6H675.1M679.7 19L682.3 21.6M682.3 20V21.6H680.7" stroke="#6a8f9a" stroke-width="1.2" fill="none"/><path d="M691.6 19V16.6Q691.6 13.8 695 13.8Q698.4 13.8 698.4 16.6V19" fill="none" stroke="#2e6f84" stroke-width="1.4"/><path d="M689.8 19L691.6 17.6L693.4 19" fill="none" stroke="#2e6f84" stroke-width="1"/><path d="M690.4 21.4H699.8" stroke="#2e6f84" stroke-width="1.4"/><rect x="739" y="9.8" width="16" height="15.2" fill="#1594c0"/><circle cx="748" cy="16" r="2.1" fill="#cdeef8" stroke="#fff" stroke-width="0.8"/><circle cx="748" cy="16" r="0.8" fill="#1594c0"/><path d="M746.5 17.6L745 19.4" stroke="#9ad8ec" stroke-width="0.8"/><path d="M757.7 11V23" stroke="#e3e3e3" stroke-width="1"/><circle cx="583.6" cy="414.8" r="3.0" fill="#dff5f8" stroke="#5a9aa6" stroke-width="1.5"/><circle cx="583.6" cy="414.8" r="0.9" fill="#3b6f7a"/><path d="M581.6 417.2L578.3 420.6" stroke="#3e5e66" stroke-width="2" stroke-linecap="round"/><path d="M595.6 417.5C595.2 414.5 596.2 412 597.8 411.8L598.6 413.6C599.4 412 601.5 411.2 603 412.2C604.6 413.6 604.2 417 602.6 419.4C601 421.4 596.4 421.2 595.6 417.5Z" fill="#1a76a6"/><rect x="609" y="408.8" width="53.5" height="13.8" fill="#fff" stroke="#ececec" stroke-width="1"/><path d="M657.8 420.8h2.6l-1.3 1z" fill="#999"/><path d="M665.5 410V422" stroke="#cfcfcf" stroke-width="1"/><path d="M676.1 415.2L673.5 412.6M673.5 414.2V412.6H675.1M679.7 415.2L682.3 412.6M682.3 414.2V412.6H680.7M676.1 418L673.5 420.6M673.5 419V420.6H675.1M679.7 418L682.3 420.6M682.3 419V420.6H680.7" stroke="#6a8f9a" stroke-width="1.2" fill="none"/><path d="M691.6 418V415.6Q691.6 412.8 695 412.8Q698.4 412.8 698.4 415.6V418" fill="none" stroke="#2e6f84" stroke-width="1.4"/><path d="M689.8 418L691.6 416.6L693.4 418" fill="none" stroke="#2e6f84" stroke-width="1"/><path d="M690.4 420.4H699.8" stroke="#2e6f84" stroke-width="1.4"/><rect x="739" y="408.8" width="16" height="15.2" fill="#1594c0"/><circle cx="748" cy="415" r="2.1" fill="#cdeef8" stroke="#fff" stroke-width="0.8"/><circle cx="748" cy="415" r="0.8" fill="#1594c0"/><path d="M746.5 416.6L745 418.4" stroke="#9ad8ec" stroke-width="0.8"/><path d="M757.7 410V422" stroke="#e3e3e3" stroke-width="1"/><rect x="269" y="54.2" width="6" height="6" fill="#fff" stroke="#a0a0a0" stroke-width="0.9"/><rect x="402.5" y="54.2" width="6" height="6" fill="#fff" stroke="#a0a0a0" stroke-width="0.9"/><rect x="536.8" y="54.2" width="6" height="6" fill="#fff" stroke="#a0a0a0" stroke-width="0.9"/><rect x="269" y="146" width="6" height="6" fill="#fff" stroke="#a0a0a0" stroke-width="0.9"/><rect x="536.8" y="146" width="6" height="6" fill="#fff" stroke="#a0a0a0" stroke-width="0.9"/><rect x="269" y="238.6" width="6" height="6" fill="#fff" stroke="#a0a0a0" stroke-width="0.9"/><rect x="402.5" y="238.6" width="6" height="6" fill="#fff" stroke="#a0a0a0" stroke-width="0.9"/><rect x="536.8" y="238.6" width="6" height="6" fill="#fff" stroke="#a0a0a0" stroke-width="0.9"/>
<g><text x="6" y="20" font-size="15" font-weight="normal" fill="#eef3f6" textLength="31" lengthAdjust="spacingAndGlyphs">ADD</text><text x="275" y="20" font-size="15" font-weight="normal" fill="#eef3f6" textLength="70.6" lengthAdjust="spacingAndGlyphs">GENERATE</text><text x="10" y="68.5" font-size="10.4" font-weight="normal" fill="#dcf5fa" stroke="#dcf5fa" stroke-width="0.6" textLength="14.2" lengthAdjust="spacingAndGlyphs">File</text><text x="10.1" y="145.1" font-size="10.4" font-weight="normal" fill="#dcf5fa" stroke="#dcf5fa" stroke-width="0.6" textLength="37.7" lengthAdjust="spacingAndGlyphs">Common</text><text x="19.1" y="89.2" font-size="7.9" font-weight="normal" fill="#3c3c3c" stroke="#3c3c3c" stroke-width="0.3" textLength="46.8" lengthAdjust="spacingAndGlyphs">Txt File Vector</text><text x="19.1" y="106.6" font-size="7.9" font-weight="normal" fill="#3c3c3c" stroke="#3c3c3c" stroke-width="0.3" textLength="50" lengthAdjust="spacingAndGlyphs">Hex File Vector</text><text x="19.1" y="123.6" font-size="7.9" font-weight="normal" fill="#3c3c3c" stroke="#3c3c3c" stroke-width="0.3" textLength="50.4" lengthAdjust="spacingAndGlyphs">ACE File Vector</text><text x="279.3" y="44.8" font-size="10.3" font-weight="normal" fill="#dcf6fb" stroke="#dcf6fb" stroke-width="0.6" textLength="92.4" lengthAdjust="spacingAndGlyphs">TM1p1_10x20MHz_LTE</text><text x="281.4" y="70.2" font-size="7.8" font-weight="normal" fill="#3c3c3c" stroke="#3c3c3c" stroke-width="0.3" textLength="44.1" lengthAdjust="spacingAndGlyphs">Vector Name:</text><text x="281.4" y="94.2" font-size="7.8" font-weight="normal" fill="#3c3c3c" stroke="#3c3c3c" stroke-width="0.3" textLength="39.4" lengthAdjust="spacingAndGlyphs">File Format:</text><text x="281.4" y="111.6" font-size="7.8" font-weight="normal" fill="#3c3c3c" stroke="#3c3c3c" stroke-width="0.3" textLength="30.5" lengthAdjust="spacingAndGlyphs">File Path:</text><text x="281.4" y="128.8" font-size="7.8" font-weight="normal" fill="#3c3c3c" stroke="#3c3c3c" stroke-width="0.3" textLength="57.9" lengthAdjust="spacingAndGlyphs">Second File Path:</text><text x="281.4" y="146.2" font-size="7.8" font-weight="normal" fill="#3c3c3c" stroke="#3c3c3c" stroke-width="0.3" textLength="68.7" lengthAdjust="spacingAndGlyphs">Original Resolution:</text><text x="281.4" y="161.8" font-size="7.8" font-weight="normal" fill="#3c3c3c" stroke="#3c3c3c" stroke-width="0.3" textLength="44.7" lengthAdjust="spacingAndGlyphs">Rescale Data:</text><text x="281.4" y="176.9" font-size="7.8" font-weight="normal" fill="#3c3c3c" stroke="#3c3c3c" stroke-width="0.3" textLength="56.1" lengthAdjust="spacingAndGlyphs">New Resolution:</text><text x="281.4" y="194.4" font-size="7.8" font-weight="normal" fill="#3c3c3c" stroke="#3c3c3c" stroke-width="0.3" textLength="42.9" lengthAdjust="spacingAndGlyphs">Attenuation:</text><text x="281.4" y="211.7" font-size="7.8" font-weight="normal" fill="#3c3c3c" stroke="#3c3c3c" stroke-width="0.3" textLength="35" lengthAdjust="spacingAndGlyphs">Data Rate:</text><text x="356.2" y="70.8" font-size="8" font-weight="normal" fill="#858585" textLength="74.6" lengthAdjust="spacingAndGlyphs">TM1p1_10x20MHz_LTE</text><text x="356" y="94.1" font-size="8" font-weight="normal" fill="#333" stroke="#333" stroke-width="0.3" textLength="73.7" lengthAdjust="spacingAndGlyphs">Complex - Interleaved</text><text x="356" y="111.6" font-size="8" font-weight="normal" fill="#909090" textLength="146.6" lengthAdjust="spacingAndGlyphs">\\gbomcp3\LAB\akumar8\5GNR_Waveforms</text><text x="356.2" y="146.2" font-size="8" font-weight="normal" fill="#858585" textLength="8.1" lengthAdjust="spacingAndGlyphs">16</text><text x="356.2" y="177" font-size="8" font-weight="normal" fill="#c4c4c4" textLength="8.1" lengthAdjust="spacingAndGlyphs">16</text><text x="355.8" y="194" font-size="8" font-weight="normal" fill="#858585" textLength="3.9" lengthAdjust="spacingAndGlyphs">0</text><text x="355.8" y="211.8" font-size="8" font-weight="normal" fill="#858585" textLength="39.4" lengthAdjust="spacingAndGlyphs">491.52 MHz</text><text x="520.5" y="146.2" font-size="8" font-weight="normal" fill="#444" textLength="4.5" lengthAdjust="spacingAndGlyphs">b</text><text x="520.5" y="177" font-size="8" font-weight="normal" fill="#444" textLength="4.5" lengthAdjust="spacingAndGlyphs">b</text><text x="516.5" y="194.4" font-size="8" font-weight="normal" fill="#444" textLength="9" lengthAdjust="spacingAndGlyphs">dB</text><text x="291.5" y="231.2" font-size="7.9" font-weight="normal" fill="#3a3a3a" stroke="#3a3a3a" stroke-width="0.3" textLength="24.5" lengthAdjust="spacingAndGlyphs">Preview</text><text x="355" y="231.2" font-size="7.9" font-weight="normal" fill="#3a3a3a" stroke="#3a3a3a" stroke-width="0.3" textLength="17.8" lengthAdjust="spacingAndGlyphs">Copy</text><text x="837.2" y="35.1" font-size="11" font-weight="bold" fill="#2a2a2a" textLength="156.8" lengthAdjust="spacingAndGlyphs">TM1p1_10x20MHz_LTE Waveform</text><text x="853.2" y="433.9" font-size="11" font-weight="bold" fill="#2a2a2a" textLength="124.3" lengthAdjust="spacingAndGlyphs">TM1p1_10x20MHz_LTE FFT</text><text x="915.6" y="374.2" font-size="9.4" font-weight="bold" fill="#2a2a2a" textLength="42.9" lengthAdjust="spacingAndGlyphs">Time (ms)</text><text x="896.7" y="772.8" font-size="9.4" font-weight="bold" fill="#2a2a2a" textLength="74.5" lengthAdjust="spacingAndGlyphs">Frequency (MHz)</text><text x="615.9" y="20.1" font-size="8.8" font-weight="normal" fill="#5e9fb2" textLength="39.4" lengthAdjust="spacingAndGlyphs">XYDirection</text><text x="615.9" y="419.1" font-size="8.8" font-weight="normal" fill="#5e9fb2" textLength="39.4" lengthAdjust="spacingAndGlyphs">XYDirection</text><text x="706.7" y="19.8" font-size="8.2" font-weight="normal" fill="#5f6f75" textLength="11.7" lengthAdjust="spacingAndGlyphs">X,Y</text><text x="706.7" y="418.8" font-size="8.2" font-weight="normal" fill="#5f6f75" textLength="11.7" lengthAdjust="spacingAndGlyphs">X,Y</text><text x="724" y="19.8" font-size="5.8" font-weight="bold" fill="#7a8a90" textLength="10.7" lengthAdjust="spacingAndGlyphs">LEG</text><text x="724" y="418.8" font-size="5.8" font-weight="bold" fill="#7a8a90" textLength="10.7" lengthAdjust="spacingAndGlyphs">LEG</text><text transform="translate(551.6,217.8) rotate(-90)" font-size="8.6" font-weight="bold" fill="#2a2a2a" textLength="45.6" lengthAdjust="spacingAndGlyphs">Amplitude</text><text transform="translate(551.6,626.8) rotate(-90)" font-size="8.6" font-weight="bold" fill="#2a2a2a" textLength="66" lengthAdjust="spacingAndGlyphs">Amplitude (db)</text></g>
</svg>
</body></html>
